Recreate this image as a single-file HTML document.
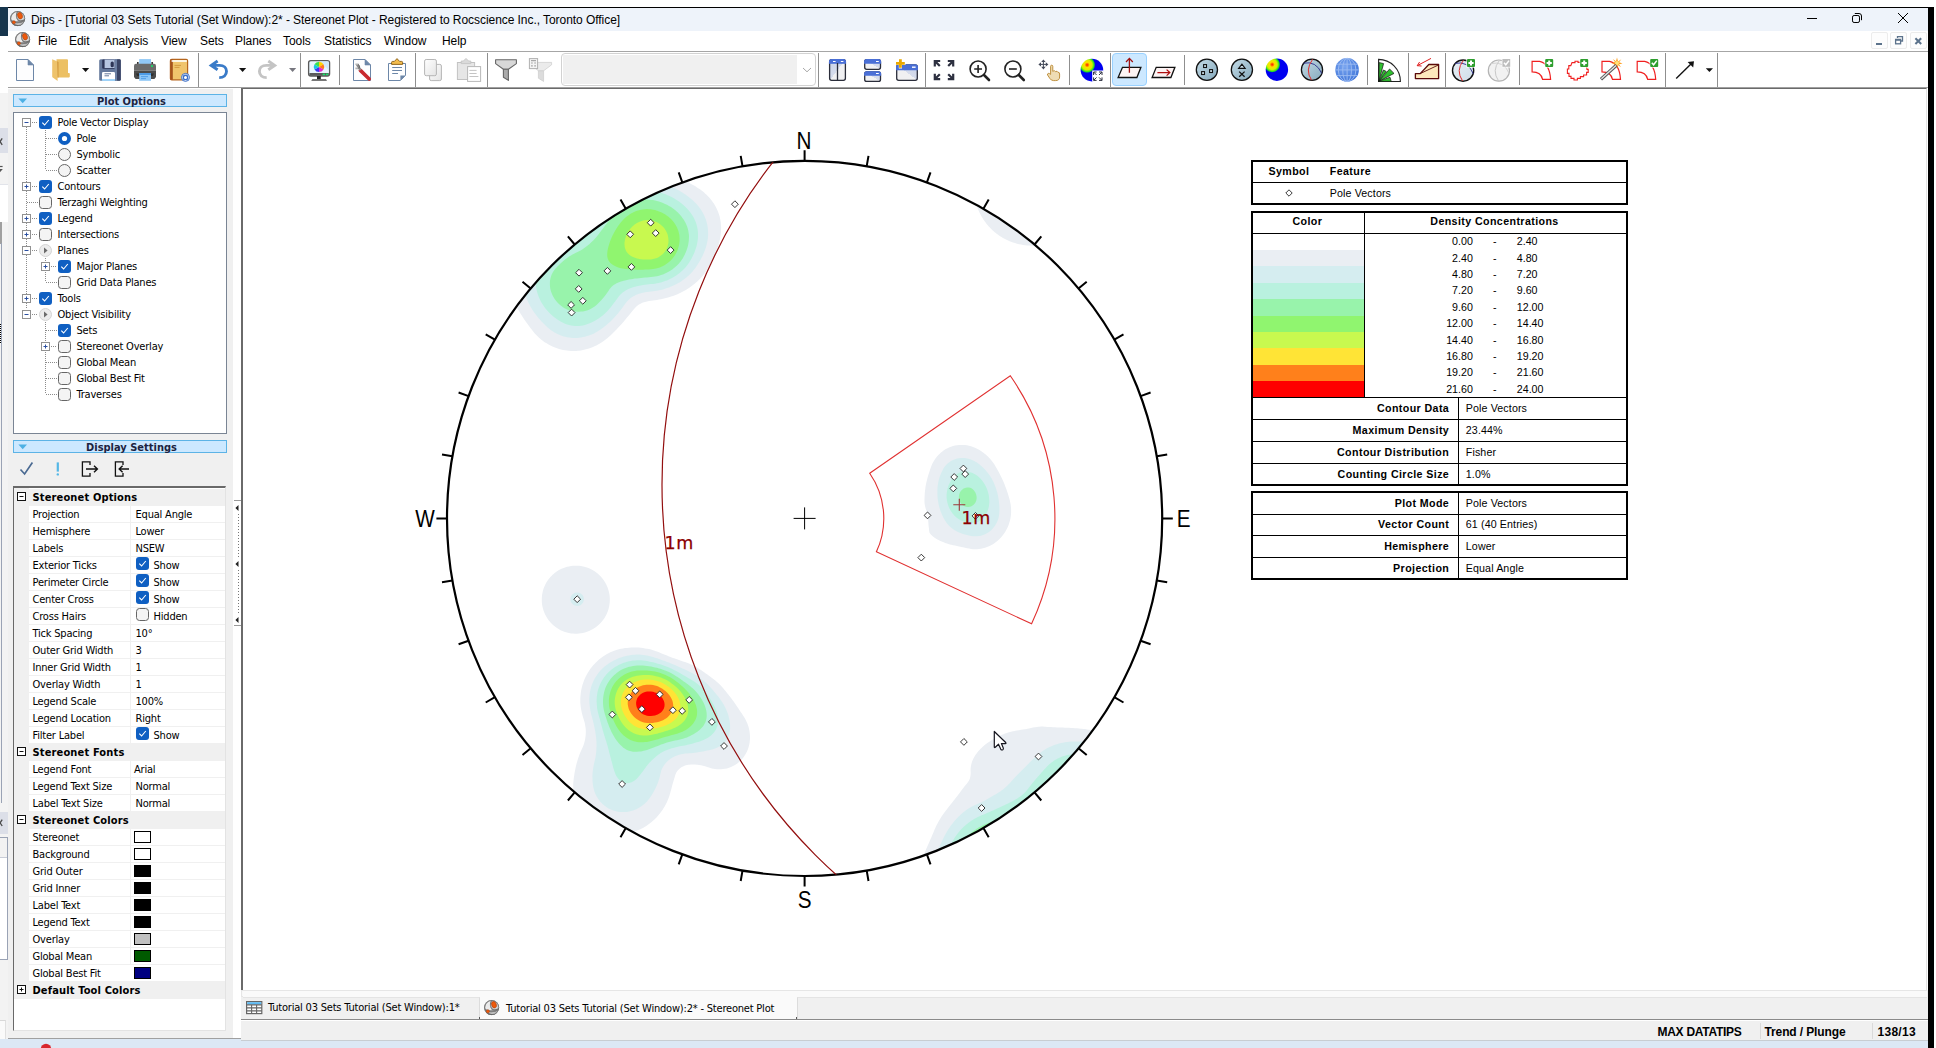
<!DOCTYPE html>
<html lang="en"><head><meta charset="utf-8"><title>Dips - Stereonet Plot</title>
<style>
html,body{margin:0;padding:0;}
body{width:1936px;height:1048px;overflow:hidden;background:#fff;position:relative;font-family:"Liberation Sans",sans-serif;font-size:12px;color:#000;}
div,span,svg{position:absolute;box-sizing:border-box;}
.t{white-space:nowrap;line-height:14px;height:14px;transform-origin:0 50%;}
.b{font-weight:bold;}
svg.net{left:243px;top:89px;}
.nsew{font-family:"Liberation Sans",sans-serif;font-size:23px;fill:#000;}
.m1{font-family:"DejaVu Sans",sans-serif;font-size:17.5px;fill:#8b0000;letter-spacing:0.8px;stroke:#8b0000;stroke-width:0.25px;}
.sep{width:1px;background:#a0a0a0;}
.ic{overflow:visible;}
.tr{font-family:"DejaVu Sans Condensed","DejaVu Sans",sans-serif;font-stretch:condensed;font-size:11px;letter-spacing:-0.2px;}
.gh{font-family:"DejaVu Sans Condensed","DejaVu Sans",sans-serif;font-stretch:condensed;font-size:11px;font-weight:bold;letter-spacing:0.15px;}
.hd{font-family:"DejaVu Sans Condensed","DejaVu Sans",sans-serif;font-stretch:condensed;font-size:11px;font-weight:bold;color:#1c2340;}
.lb{font-size:10.67px;font-weight:bold;letter-spacing:0.4px;}
.lr{font-size:10.67px;letter-spacing:0.12px;}
.lv{font-size:10.67px;}
.tb{letter-spacing:-0.2px;}
.mn{letter-spacing:-0.05px;}#title{letter-spacing:-0.055px;}

</style></head>
<body>
<div style="left:0;top:7px;width:8px;height:29px;background:#16354d"></div>
<div style="left:8px;top:7px;width:1926px;height:1px;background:#000"></div>
<div style="left:1928px;top:7px;width:6px;height:1041px;background:#000"></div>
<div style="left:8px;top:8px;width:1920px;height:23px;background:#eef3fa"></div>
<div style="left:8px;top:51px;width:1920px;height:1px;background:#a6a6a6"></div>
<div style="left:8px;top:87px;width:1920px;height:1px;background:#a0a0a0"></div>
<div style="left:0;top:1039px;width:1928px;height:9px;background:#dce8f5"></div>
<!-- left strip remnants -->
<div style="left:0;top:93px;width:8px;height:946px;background:#f3f3f3"></div>
<div style="left:0;top:128px;width:8px;height:25px;background:#dcdfe8"></div>
<div style="left:0;top:184px;width:8px;height:38px;background:#fff;border-top:1px solid #e2e4ea"></div>
<svg class="ic" style="left:0;top:130px" width="8" height="50" viewBox="0 130 8 50"><path d="M-2,138.4L2.2,144.8M2.2,138.4L-2,144.8" stroke="#4a4a4a" stroke-width="1.3" fill="none"/><path d="M-3,166.5H2.6" stroke="#555" stroke-width="1.2"/><path d="M-3,169H2.8L-0.2,172.6Z" fill="#555"/></svg>
<div style="left:0;top:222px;width:2px;height:22px;background:#a0a0a0"></div>
<div style="left:1px;top:243px;width:1px;height:560px;background:#9aa3b5"></div>
<div style="left:0;top:324px;width:1px;height:20px;background:repeating-linear-gradient(#000 0,#000 1px,#fff 1px,#fff 2px)"></div>
<div style="left:0;top:812px;width:8px;height:22px;background:#dcdfe8"></div>
<svg class="ic" style="left:0;top:812px" width="8" height="22" viewBox="0 812 8 22"><path d="M-2,819.6L2.2,826M2.2,819.6L-2,826" stroke="#4a4a4a" stroke-width="1.3" fill="none"/></svg>
<div style="left:0;top:837px;width:8px;height:123px;background:#fff;border-top:1px solid #9aa3b5;border-bottom:1px solid #9aa3b5;border-right:1px solid #9aa3b5"></div>
<div style="left:0;top:838px;width:7px;height:20px;background:#f2f2f2;border-bottom:1px solid #c8ccd6"></div>
<div style="left:0;top:1020px;width:6px;height:19px;background:#fafafa;border-top:1px solid #d8d8d8;border-right:1px solid #e0e0e0"></div>
<!-- left panel bg -->
<div style="left:8px;top:89px;width:225px;height:949px;background:#f0f0f0"></div>
<div style="left:8px;top:1038px;width:234px;height:1px;background:#a0a0a0"></div>
<!-- mdi -->
<div style="left:241px;top:88px;width:1686px;height:902px;border-left:2px solid #6a6a6a;border-top:1px solid #6a6a6a;border-right:1px solid #e3e3e3;background:#fff"></div>
<div style="left:241px;top:990px;width:1687px;height:30px;background:#f0f0f0"></div>
<div style="left:241px;top:990px;width:1686px;height:7px;background:#f8f8f8;border:1px solid #e6e6e6"></div>
<div style="left:241px;top:1019px;width:1687px;height:1px;background:#8a8a8a"></div>
<div style="left:241px;top:1020px;width:1687px;height:21px;background:#f0f0f0;border-top:1px solid #fff;border-bottom:1px solid #c8cdd2"></div>
<!-- app icons -->
<svg class="ic" style="left:10px;top:10.8px" width="16" height="16" viewBox="0 0 16 16"><defs><radialGradient id="gsph" cx="42%" cy="38%" r="62%"><stop offset="0" stop-color="#bdbdbd"/><stop offset="0.5" stop-color="#9a9a9a"/><stop offset="0.85" stop-color="#707070"/><stop offset="1" stop-color="#505050"/></radialGradient></defs><circle cx="7.6" cy="7.6" r="7.5" fill="url(#gsph)"/><path d="M6.9,0.8C3.5,1.4 1.1,4.5 1.3,8.6C3.4,10.1 6,10.3 7.7,9.7C5.6,7.1 5.5,3.5 6.9,0.8Z" fill="#ebebeb"/><path d="M8.3,0.9C6.7,4 7.5,7.6 9.5,9.3C11.6,9.6 13.7,9 14.9,7.8C14.7,4 12.1,1.1 8.3,0.9Z" fill="#cfcfcf"/><path d="M1.9,10.7C5,13 11,12.8 14.4,10.1C13.8,12 12.2,13.5 10.2,14.3C6.2,13.9 3.5,12.8 1.9,10.7Z" fill="#cdcdcd" opacity="0.85"/><circle cx="7.6" cy="7.6" r="7.1" fill="none" stroke="#6c6c6c" stroke-width="0.9" opacity="0.75"/><path d="M7.7,0.5C5.7,3.4 6,7.6 8.8,9.7C11,10.3 13.4,9.7 15,8.3" stroke="#6e6e6e" stroke-width="0.9" fill="none"/><path d="M1.1,9.9C4.6,12.3 11,12.1 14.8,9.3" stroke="#7a7a7a" stroke-width="0.8" fill="none"/><ellipse cx="10" cy="4.7" rx="2.3" ry="3.3" transform="rotate(-18 10 4.7)" fill="#ee5a0c" stroke="#b23c08" stroke-width="0.6"/><circle cx="3.9" cy="11.3" r="1.5" fill="#ee5a0c" stroke="#b23c08" stroke-width="0.5"/></svg>
<svg class="ic" style="left:15px;top:31.8px" width="16" height="16" viewBox="0 0 16 16"><circle cx="7.6" cy="7.6" r="7.5" fill="url(#gsph)"/><path d="M6.9,0.8C3.5,1.4 1.1,4.5 1.3,8.6C3.4,10.1 6,10.3 7.7,9.7C5.6,7.1 5.5,3.5 6.9,0.8Z" fill="#ebebeb"/><path d="M8.3,0.9C6.7,4 7.5,7.6 9.5,9.3C11.6,9.6 13.7,9 14.9,7.8C14.7,4 12.1,1.1 8.3,0.9Z" fill="#cfcfcf"/><path d="M1.9,10.7C5,13 11,12.8 14.4,10.1C13.8,12 12.2,13.5 10.2,14.3C6.2,13.9 3.5,12.8 1.9,10.7Z" fill="#cdcdcd" opacity="0.85"/><circle cx="7.6" cy="7.6" r="7.1" fill="none" stroke="#6c6c6c" stroke-width="0.9" opacity="0.75"/><path d="M7.7,0.5C5.7,3.4 6,7.6 8.8,9.7C11,10.3 13.4,9.7 15,8.3" stroke="#6e6e6e" stroke-width="0.9" fill="none"/><path d="M1.1,9.9C4.6,12.3 11,12.1 14.8,9.3" stroke="#7a7a7a" stroke-width="0.8" fill="none"/><ellipse cx="10" cy="4.7" rx="2.3" ry="3.3" transform="rotate(-18 10 4.7)" fill="#ee5a0c" stroke="#b23c08" stroke-width="0.6"/><circle cx="3.9" cy="11.3" r="1.5" fill="#ee5a0c" stroke="#b23c08" stroke-width="0.5"/></svg>
<span class="t" id="title" style="left:31px;top:13px">Dips - [Tutorial 03 Sets Tutorial (Set Window):2* - Stereonet Plot - Registered to Rocscience Inc., Toronto Office]</span>
<span class="t mn" style="left:38px;top:34px">File</span>
<span class="t mn" style="left:69px;top:34px">Edit</span>
<span class="t mn" style="left:104px;top:34px">Analysis</span>
<span class="t mn" style="left:161px;top:34px">View</span>
<span class="t mn" style="left:200px;top:34px">Sets</span>
<span class="t mn" style="left:235px;top:34px">Planes</span>
<span class="t mn" style="left:283px;top:34px">Tools</span>
<span class="t mn" style="left:324px;top:34px">Statistics</span>
<span class="t mn" style="left:384px;top:34px">Window</span>
<span class="t mn" style="left:442px;top:34px">Help</span>
<!-- window controls -->
<svg class="ic" style="left:1800px;top:8px" width="128" height="23" viewBox="1800 8 128 23"><path d="M1807,18.5H1817" stroke="#000" stroke-width="1"/><rect x="1852.5" y="15.5" width="7" height="7" rx="1.6" fill="none" stroke="#000" stroke-width="1"/><path d="M1854.8,13.5H1859Q1861.5,13.5 1861.5,16V20.2" fill="none" stroke="#000" stroke-width="1"/><path d="M1898,13L1908,23M1908,13L1898,23" stroke="#000" stroke-width="1"/></svg>
<div style="left:1871px;top:32px;width:17px;height:17px;border:1px solid #ececec;border-radius:2px;background:#fdfdfd"></div>
<div style="left:1890px;top:32px;width:17px;height:17px;border:1px solid #ececec;border-radius:2px;background:#fdfdfd"></div>
<div style="left:1910px;top:32px;width:17px;height:17px;border:1px solid #ececec;border-radius:2px;background:#fdfdfd"></div>
<svg class="ic" style="left:1871px;top:32px" width="56" height="17" viewBox="1871 32 56 17"><path d="M1876,44H1882" stroke="#5c738c" stroke-width="2"/><path d="M1897.5,38V36.6H1902.5V41H1901" fill="none" stroke="#5c738c" stroke-width="1.3"/><rect x="1895.6" y="39.4" width="5" height="4.4" fill="none" stroke="#5c738c" stroke-width="1.3"/><path d="M1895.6,40H1900.6" stroke="#5c738c" stroke-width="1.6"/><path d="M1915.4,38.2L1921.2,44M1921.2,38.2L1915.4,44" stroke="#5c738c" stroke-width="2"/></svg>
<!-- toolbar -->
<div style="left:561px;top:53px;width:255px;height:33px;border:1px solid #d2d2d2;border-radius:4px;background:#fff"></div>
<div style="left:563px;top:55px;width:234px;height:29px;background:#f0f0f0"></div>
<div style="left:1112px;top:53px;width:35px;height:33px;border:1px solid #99d1ff;border-radius:4px;background:#cce8ff"></div>
<svg class="ic" style="left:0;top:52px" width="1936" height="36" viewBox="0 52 1936 36">
<defs>
<linearGradient id="gpage" x1="0" y1="0" x2="1" y2="1"><stop offset="0" stop-color="#fff"/><stop offset="1" stop-color="#e4e4e4"/></linearGradient>
<radialGradient id="gcont" cx="29%" cy="27%" r="62%"><stop offset="0" stop-color="#ff2000"/><stop offset="0.07" stop-color="#ff5a00"/><stop offset="0.18" stop-color="#ffe000"/><stop offset="0.36" stop-color="#d8f000"/><stop offset="0.5" stop-color="#20e020"/><stop offset="0.58" stop-color="#0000f0"/><stop offset="1" stop-color="#0000f0"/></radialGradient>
<linearGradient id="gball" x1="0" y1="0" x2="1" y2="1"><stop offset="0" stop-color="#c4dbe6"/><stop offset="1" stop-color="#86aabd"/></linearGradient>
<linearGradient id="gball2" x1="0" y1="0" x2="1" y2="1"><stop offset="0" stop-color="#e8f0f6"/><stop offset="1" stop-color="#cfdde8"/></linearGradient>
<linearGradient id="gwin" x1="0" y1="0" x2="1" y2="1"><stop offset="0" stop-color="#c9d2e8"/><stop offset="0.5" stop-color="#d6dcec"/><stop offset="0.5" stop-color="#f0f0f2"/><stop offset="1" stop-color="#f0f0f2"/></linearGradient>
<linearGradient id="gwin2" x1="1" y1="0" x2="0" y2="1"><stop offset="0" stop-color="#c9d2e8"/><stop offset="0.5" stop-color="#d6dcec"/><stop offset="0.5" stop-color="#f0f0f2"/><stop offset="1" stop-color="#f0f0f2"/></linearGradient>
<radialGradient id="gglobe" cx="40%" cy="35%" r="70%"><stop offset="0" stop-color="#7aa6f0"/><stop offset="1" stop-color="#3f74d8"/></radialGradient>
<g id="setshape"><path d="M0,0H7.5Q17.5,2 18.5,18H10.5Q9,10.5 0,10.5Z" fill="none" stroke="#f02020" stroke-width="1.2"/></g>
<g id="plusbox"><rect x="0" y="0" width="8" height="8" rx="1" fill="#2e9e2e"/><path d="M4,1.4V6.6M1.4,4H6.6" stroke="#fff" stroke-width="2"/></g>
<g id="dd"><path d="M0,0H7.2L3.6,3.9Z"/></g>
</defs>
<!-- separators -->
<path d="M198.5,53V87M300.5,53V87M415.5,53V87M487.5,53V87M818.5,53V87M925.5,53V87M1110.5,53V87M1408.5,53V87M1445.5,53V87M1665.5,53V87M1717.5,53V87M339.5,55V85M1069.5,55V85M1184.5,55V85M1367.5,55V85M1519.5,55V85" stroke="#8f8f8f" stroke-width="1" fill="none"/>
<!-- new -->
<path d="M16.5,59.5H28L33.5,65V80.5H16.5Z" fill="#fdfdfe" stroke="#6d87a8" stroke-width="1"/><path d="M28,59.5V65H33.5Z" fill="#6d87a8" stroke="#6d87a8" stroke-width="0.6"/>
<!-- open -->
<path d="M56.5,59.2H67Q68,59.2 68,60.2V73H69Q69.8,73 69.8,73.8V76.6Q69.8,77.4 69,77.4H56.5Z" fill="#ecc063"/>
<path d="M52.2,59.3L57.6,61.6V81L52.8,77.6Q52.2,77.2 52.2,76.4Z" fill="#eec36c"/><path d="M57,61.3L58.6,62V77.4H57.6Z" fill="#d69f45"/>
<use href="#dd" x="82" y="68.1" fill="#111"/>
<!-- save -->
<rect x="99.2" y="59.2" width="21.6" height="21.6" rx="1.6" fill="#65799c"/><rect x="116.6" y="59.2" width="4.2" height="21.6" rx="1.2" fill="#3a4566"/><rect x="114.8" y="59.2" width="2.2" height="21.6" fill="#6c80a3"/>
<rect x="102.2" y="59.6" width="12.6" height="9.2" rx="1" fill="#2c3556"/><rect x="104.6" y="59.6" width="10" height="8.4" fill="#b6c6e1"/><rect x="110.6" y="61.6" width="3.2" height="5.6" rx="1.5" fill="#2c3556"/>
<rect x="102" y="72" width="13" height="8.8" rx="1.2" fill="#fff"/><rect x="102" y="79.2" width="13" height="1.6" fill="#8dcdf9"/><path d="M104.5,73.8H111M104.5,75.8H109" stroke="#65799c" stroke-width="1"/>
<!-- print -->
<rect x="139.2" y="59.1" width="11.8" height="5" fill="#90c8f6"/><rect x="137" y="62" width="1.6" height="2" fill="#333"/><rect x="151.4" y="62" width="1.6" height="2" fill="#333"/>
<path d="M136,63.8H154Q156,63.8 156,65.8V70.6H134V65.8Q134,63.8 136,63.8Z" fill="#6b6b6b"/><path d="M134,70.6H156V77L154.4,79H135.6L134,77Z" fill="#4b4b4b"/><path d="M136,73.4H154L152.6,76H137.4Z" fill="#2e2e2e"/>
<rect x="139.2" y="73" width="11.8" height="7.8" fill="#8ec7f7"/><rect x="139.2" y="73" width="11.8" height="2" fill="#4d9be6"/><path d="M141,76.6H148M141,78.6H146" stroke="#4d9be6" stroke-width="0.9"/><circle cx="152" cy="66.1" r="1.1" fill="#19e06a"/>
<!-- book -->
<rect x="170.4" y="59.4" width="17.2" height="20.4" rx="1.4" fill="#f0c46c" stroke="#b5651d" stroke-width="1.2"/><rect x="170.4" y="59.4" width="2.4" height="20.4" fill="#a5521c"/><rect x="171.6" y="60.2" width="15.2" height="1.6" fill="#fff"/><path d="M174.5,65.4H181M174.5,67.4H179.5" stroke="#d39a40" stroke-width="1"/>
<circle cx="185.5" cy="77.4" r="4" fill="#fff" stroke="#3b6fc9" stroke-width="1"/><circle cx="185.5" cy="77.4" r="2.2" fill="none" stroke="#3b6fc9" stroke-width="1.4"/>
<!-- undo -->
<path d="M217.6,61L211.2,65.4L217.6,69.8M212.4,65.4H219.5C224,65.4 226.5,68 226.5,71.2C226.5,75 223.6,77.6 219.2,77.6" fill="none" stroke="#3a7bc8" stroke-width="2.9" stroke-linejoin="miter"/>
<use href="#dd" x="239" y="68.1" fill="#111"/>
<!-- redo -->
<path d="M268.3,61L274.7,65.4L268.3,69.8M273.5,65.4H266.4C261.9,65.4 259.4,68 259.4,71.2C259.4,75 262.3,77.6 266.7,77.6" fill="none" stroke="#c4c4c4" stroke-width="2.9" stroke-linejoin="miter"/>
<use href="#dd" x="289" y="68.1" fill="#77777f"/>
<!-- monitor -->
<rect x="308.6" y="60.6" width="21" height="15.4" rx="2.2" fill="#e8f4fd" stroke="#5a5a5a" stroke-width="1.3"/><path d="M309.4,73H328.8V74.6Q328.8,75.8 327.6,75.8H310.6Q309.4,75.8 309.4,74.6Z" fill="#5a5a5a"/><path d="M320,61.4H328.6V70Z" fill="#cfe9fb"/>
<g transform="translate(319,66.9)"><path d="M0,0L0,-5.2A5.2,5.2 0 0 1 4.5,-2.6Z" fill="#ffd400"/><path d="M0,0L4.5,-2.6A5.2,5.2 0 0 1 4.5,2.6Z" fill="#ff7a1a"/><path d="M0,0L4.5,2.6A5.2,5.2 0 0 1 0,5.2Z" fill="#e02ad0"/><path d="M0,0L0,5.2A5.2,5.2 0 0 1 -4.5,2.6Z" fill="#3a3af0"/><path d="M0,0L-4.5,2.6A5.2,5.2 0 0 1 -4.5,-2.6Z" fill="#19c8e0"/><path d="M0,0L-4.5,-2.6A5.2,5.2 0 0 1 0,-5.2Z" fill="#3ae04a"/></g>
<rect x="322.6" y="73.6" width="2.4" height="1.6" fill="#19e06a"/><rect x="325.8" y="73.6" width="2.4" height="1.6" fill="#19e06a"/><rect x="317" y="76" width="3.8" height="3.2" fill="#222"/><path d="M312.4,79.2H326L327,80.8H311.2Z" fill="#4a4a4a"/>
<!-- wrench doc -->
<path d="M353.5,59.5H365L370.5,65V80.5H353.5Z" fill="#fdfdfe" stroke="#6d87a8" stroke-width="1"/><path d="M365,59.5V65H370.5Z" fill="#6d87a8" stroke="#6d87a8" stroke-width="0.6"/>
<path d="M360.4,70.4L369.2,79" stroke="#c9282d" stroke-width="3.6" stroke-linecap="round"/><path d="M357,64.6L360.6,70.2" stroke="#8e8e8e" stroke-width="2.4"/><path d="M355.4,64.2H358.6M355.4,68.4H358.6" stroke="#b5b5b5" stroke-width="1.6"/><path d="M358.4,64.4Q360.4,66 358.8,68.6" stroke="#555" stroke-width="1" fill="none"/>
<!-- clipboard -->
<path d="M388.5,63.5H405.5V75.4L400.4,80.5H388.5Z" fill="#fff" stroke="#6d87a8" stroke-width="1"/><path d="M400.4,80.5V75.4H405.5Z" fill="#6d87a8"/>
<path d="M391.6,64.4V62.4Q391.6,61.4 392.6,61.4H394.4L397,58.6L399.6,61.4H401.6Q402.6,61.4 402.6,62.4V64.4Z" fill="#f3bd4f" stroke="#7a4b00" stroke-width="0.8"/>
<path d="M392.2,67.5H402M392.2,70.5H402M392.2,73.5H398" stroke="#6d87a8" stroke-width="1"/>
<!-- copy gray -->
<rect x="429.6" y="64.4" width="11.8" height="16.2" rx="1.6" fill="url(#gpage)" stroke="#b6b6b6" stroke-width="1"/><rect x="424.6" y="59.5" width="11.8" height="16.2" rx="1.6" fill="url(#gpage)" stroke="#b6b6b6" stroke-width="1"/>
<!-- paste gray -->
<rect x="457.4" y="62.5" width="17.2" height="17" fill="#e6e6e6" stroke="#c2c2c2" stroke-width="1"/><path d="M461.2,63.6V61H463.4L466,58.4L468.6,61H470.8V63.6Z" fill="#dadada" stroke="#c2c2c2" stroke-width="0.8"/>
<rect x="467.6" y="66.6" width="13" height="14.8" fill="#fff" stroke="#b8b8b8" stroke-width="1"/><path d="M469.4,70.4H476.6M469.4,73.5H476.6M469.4,76.5H478.4" stroke="#c4c4c4" stroke-width="1"/>
<!-- filter -->
<path d="M495.6,59.8H516.4V63.6L508.4,69.2H503.4L495.6,63.6Z" fill="#d8d8d8" stroke="#666" stroke-width="1.1" stroke-linejoin="round"/><path d="M503.4,69.2H508.4V80.4L503.4,77.2Z" fill="#ababab" stroke="#666" stroke-width="1.1" stroke-linejoin="round"/>
<!-- filter2 gray -->
<path d="M534.4,62.4H551.6V64.8L543.6,70.8H538.4L534.4,67.6Z" fill="#ebebeb" stroke="#cfcfcf" stroke-width="0.8"/><path d="M538.4,70.8H543.6V81.4L538.4,78.2Z" fill="#dcdcdc" stroke="#cfcfcf" stroke-width="0.8"/>
<rect x="529.4" y="58.6" width="8.2" height="10" fill="#f4f4f4" stroke="#b0b0b0" stroke-width="1"/><path d="M531,60.6H536M531,63H532.8M534.2,63H536M531,65.8H532.8M534.2,65.8H536" stroke="#a8a8a8" stroke-width="1.2"/>
<!-- combo chevron -->
<path d="M803,68L807,71.8L811,68" fill="none" stroke="#a8a8a8" stroke-width="1"/>
<!-- tile vertical -->
<rect x="829.6" y="59.7" width="15.8" height="20.6" rx="2" fill="url(#gwin)" stroke="#2a2d3a" stroke-width="1.3"/><path d="M829.6,63.2V61.7Q829.6,59.7 831.6,59.7H843.4Q845.4,59.7 845.4,61.7V63.2Z" fill="#4a6fd6" stroke="#4a6fd6" stroke-width="1.3"/><path d="M837.5,63V80.3" stroke="#2a2d3a" stroke-width="1.3"/><path d="M833,61.5H835.6M840.8,61.5H843.4" stroke="#fff" stroke-width="1"/>
<!-- tile horizontal -->
<rect x="864.7" y="59.7" width="15.8" height="9.6" rx="2" fill="url(#gwin2)" stroke="#2a2d3a" stroke-width="1.3"/><path d="M864.7,63V61.7Q864.7,59.7 866.7,59.7H878.5Q880.5,59.7 880.5,61.7V63Z" fill="#4a6fd6" stroke="#4a6fd6" stroke-width="1.3"/><path d="M876,61.5H878.8" stroke="#fff" stroke-width="1"/>
<rect x="864.7" y="71.8" width="15.8" height="9.6" rx="2" fill="url(#gwin2)" stroke="#2a2d3a" stroke-width="1.3"/><path d="M864.7,75V73.8Q864.7,71.8 866.7,71.8H878.5Q880.5,71.8 880.5,73.8V75Z" fill="#4a6fd6" stroke="#4a6fd6" stroke-width="1.3"/><path d="M876,73.5H878.8" stroke="#fff" stroke-width="1"/>
<!-- new window -->
<rect x="896.7" y="64.9" width="20.6" height="15.4" rx="2" fill="url(#gwin2)" stroke="#2a2d3a" stroke-width="1.3"/><path d="M896.7,69.6V66.9Q896.7,64.9 898.7,64.9H915.3Q917.3,64.9 917.3,66.9V69.6Z" fill="#4a6fd6" stroke="#4a6fd6" stroke-width="1.3"/><path d="M912,67.2H915.6" stroke="#fff" stroke-width="1.4"/>
<path d="M895.4,61.8H898.8V58.6H902V61.8H905.4V65H902V68.4H898.8V65H895.4Z" fill="#fff"/><path d="M900.4,59.2V67.8M896,63.4H904.8" stroke="#e9a800" stroke-width="2.8"/>
<!-- zoom extents -->
<g stroke="#2d3040" stroke-width="2.2" fill="none"><path d="M934.8,66.4V61H940.2M935.2,61.4L939.8,66"/><path d="M953.2,66.4V61H947.8M952.8,61.4L948.2,66"/><path d="M934.8,73.8V79.2H940.2M935.2,78.8L939.8,74.2"/><path d="M953.2,73.8V79.2H947.8M952.8,78.8L948.2,74.2"/></g>
<!-- zoom in/out -->
<circle cx="978.1" cy="69" r="8" fill="none" stroke="#222" stroke-width="1.6"/><path d="M984,75L989,80" stroke="#222" stroke-width="2.6" stroke-linecap="round"/><path d="M974.2,69H982M978.1,65.1V72.9" stroke="#222" stroke-width="1.6"/>
<circle cx="1012.9" cy="69" r="8" fill="none" stroke="#222" stroke-width="1.6"/><path d="M1018.8,75L1023.8,80" stroke="#222" stroke-width="2.6" stroke-linecap="round"/><path d="M1009,69H1016.8" stroke="#222" stroke-width="1.6"/>
<!-- pan -->
<path d="M1043.4,59.4L1045.6,62H1041.2ZM1043.4,69.4L1045.6,66.8H1041.2ZM1038.4,64.4L1041,62.2V66.6ZM1048.4,64.4L1045.8,62.2V66.6Z" fill="#444a5a"/><path d="M1043.4,61V67.8M1040,64.4H1046.8" stroke="#444a5a" stroke-width="1"/>
<path d="M1050.6,74.4V66.4Q1050.6,65.2 1051.7,65.2Q1052.8,65.2 1052.8,66.4V71.4L1053.4,71Q1054.6,70.2 1055.4,71.6L1056,71.4Q1057.2,70.8 1057.8,72.2Q1059.6,72 1059.6,74V77Q1059.6,80.6 1055.4,80.6H1053.6Q1051.2,80.6 1049.8,78.4L1047.6,75Q1047,73.8 1048.2,73.4Q1049.2,73.2 1050.6,74.4Z" fill="#eedcb4" stroke="#b8862e" stroke-width="0.9"/>
<!-- contour sphere w/ zoom -->
<circle cx="1091.9" cy="70.1" r="11.3" fill="url(#gcont)"/><rect x="1092.2" y="70.5" width="11.2" height="11.2" fill="#fff"/>
<g stroke="#2d3040" stroke-width="1" fill="none"><path d="M1093.6,75V72H1096.6M1093.8,72.2L1096.6,75"/><path d="M1102,75V72H1099M1101.8,72.2L1099,75"/><path d="M1093.6,77.4V80.4H1096.6M1093.8,80.2L1096.6,77.4"/><path d="M1102,77.4V80.4H1099M1101.8,80.2L1099,77.4"/></g>
<!-- pole mode -->
<path d="M1118.1,77.5H1136.9L1140.9,67.3H1122.5Z" fill="#fdf4f4" stroke="#111" stroke-width="1.3" stroke-linejoin="miter"/><path d="M1129.4,72.8V58.6M1126,62L1129.4,58.4L1132.8,62" stroke="#a01010" stroke-width="1.3" fill="none"/>
<!-- dip vector -->
<path d="M1152.1,77.5H1170.9L1174.9,67.3H1156.2Z" fill="#fdf4f4" stroke="#111" stroke-width="1.3"/><path d="M1157.4,72.6H1169.6M1166.6,69.6L1169.8,72.6L1166.6,75.6" stroke="#b01010" stroke-width="1.3" fill="none"/>
<!-- symbols -->
<circle cx="1206.9" cy="69.7" r="10.6" fill="url(#gball)" stroke="#111" stroke-width="1.3"/><g fill="#cfe4ee" stroke="#111" stroke-width="1.1"><rect x="1203.6" y="64.6" width="2.9" height="2.9"/><rect x="1209.6" y="69.6" width="2.9" height="2.9"/><rect x="1201.6" y="71.6" width="2.9" height="2.9"/></g>
<circle cx="1241.9" cy="69.7" r="10.6" fill="url(#gball)" stroke="#111" stroke-width="1.3"/><path d="M1241.9,64.2L1245.2,68.4H1238.6Z" fill="#cfe4ee" stroke="#111" stroke-width="1.1"/><path d="M1239.2,71.6L1244.6,76.8M1244.6,71.6L1239.2,76.8" stroke="#111" stroke-width="1.3"/>
<circle cx="1276.9" cy="69.7" r="11.2" fill="url(#gcont)"/>
<circle cx="1312" cy="69.7" r="10.6" fill="url(#gball)" stroke="#111" stroke-width="1.3"/><path d="M1303.5,63.2Q1316,60.5 1321.8,73.5" fill="none" stroke="#2a2a8a" stroke-width="0.9"/><path d="M1312.6,59.4Q1304.6,70 1311.6,80.2" fill="none" stroke="#e03030" stroke-width="1"/>
<circle cx="1347.1" cy="69.9" r="11.8" fill="url(#gglobe)"/><g fill="none" stroke="#9dbcf2" stroke-width="0.9"><ellipse cx="1347.1" cy="69.9" rx="4.4" ry="11.6"/><ellipse cx="1347.1" cy="69.9" rx="8.8" ry="11.6"/><path d="M1347.1,58.2V81.6M1335.4,69.9H1358.8M1336.8,64.2H1357.4M1336.8,75.6H1357.4"/></g>
<!-- rosette -->
<path d="M1378.6,59.4A22,22 0 0 1 1400.4,81.5H1378.6Z" fill="#fff" stroke="#222" stroke-width="1.1"/>
<g fill="#2fc02f" stroke="#111" stroke-width="0.7"><path d="M1378.8,81.4L1379.2,62.6L1383.6,63.6Z"/><path d="M1378.8,81.4L1389.6,69L1394,73.4Z"/><path d="M1378.8,81.4L1390,77.2L1391.2,81.4Z"/><path d="M1378.8,81.4L1383.4,70L1386.2,71.4Z"/></g>
<!-- slope -->
<path d="M1415.4,78.6V73.6H1420.2L1428.8,64.5H1438.6V78.6Z" fill="#fde9bd" stroke="#5a0a0a" stroke-width="1.3" stroke-linejoin="round"/><path d="M1420.2,73.6L1438.4,65" stroke="#5a0a0a" stroke-width="0.9"/><path d="M1431,58.4L1417.4,65.6M1419.6,62L1417.2,65.7L1421.6,66" stroke="#e02020" stroke-width="1" fill="none"/>
<!-- add plane sphere -->
<circle cx="1463.1" cy="70.6" r="10.6" fill="url(#gball2)" stroke="#111" stroke-width="1.4"/><path d="M1455,63.4Q1468,60.4 1473.4,74" fill="none" stroke="#2a2a8a" stroke-width="0.9"/><path d="M1463.4,60.4Q1455.4,70.6 1462.6,81" fill="none" stroke="#e03030" stroke-width="1"/>
<rect x="1466.4" y="58.4" width="9.2" height="9.2" fill="#fff"/><use href="#plusbox" x="1467" y="59"/>
<circle cx="1498.9" cy="70.6" r="10.6" fill="#f2f2f2" stroke="#b4b4b4" stroke-width="1.2"/><path d="M1499.4,60.4Q1491.4,70.6 1498.6,81" fill="none" stroke="#c8c8c8" stroke-width="1"/><path d="M1491,63.6Q1504,60.4 1509.4,74" fill="none" stroke="#d0d0d0" stroke-width="0.9"/>
<rect x="1501.8" y="58.4" width="9" height="9" fill="#fff"/><rect x="1502.4" y="59" width="7.8" height="7.8" fill="#bdbdbd"/><path d="M1504,62.8L1505.8,64.8L1509,60.6" stroke="#fff" stroke-width="1.5" fill="none"/>
<!-- set windows -->
<use href="#setshape" x="1532.1" y="61.4"/><rect x="1544.6" y="58.4" width="9.2" height="9.2" fill="#fff"/><use href="#plusbox" x="1545.2" y="59"/>
<path d="M1572,62.6H1575V61.2H1578V62.4H1582Q1587,64.4 1587,69.4H1588.2V72.4H1586.6V75H1583.6V76.6H1580.4V78.4H1577.4V80H1574V78.4H1571V76.4H1569V73.4H1567.4V69H1568.8V65.6H1570.8Z" fill="none" stroke="#f02020" stroke-width="1.1"/><rect x="1579.6" y="58.4" width="9.2" height="9.2" fill="#fff"/><use href="#plusbox" x="1580.2" y="59"/>
<use href="#setshape" x="1602" y="61.4"/>
<g transform="translate(1617,63)"><path d="M0,-5.4L1,-1.6L4.4,-3.8L2,-0.8L5.6,0.4L2,1.2L4,4.2L0.8,2L0,5.4L-1,2L-4.2,4L-2,1L-5.6,0.2L-2,-1L-4.2,-4L-1,-1.8Z" fill="#ff9d1a"/><circle r="2" fill="#ffe27a"/></g>
<path d="M1601,79.2L1616.4,65.2" stroke="#555" stroke-width="3.2"/><path d="M1601.4,78.8L1616,65.6" stroke="#e6e6e6" stroke-width="1.4"/>
<use href="#setshape" x="1637.2" y="61.4"/><rect x="1649.6" y="58.4" width="9.2" height="9.2" fill="#fff"/><rect x="1650.2" y="59" width="8" height="8" rx="1" fill="#2e9e2e"/><path d="M1651.8,62.8L1653.6,64.8L1656.8,60.6" stroke="#fff" stroke-width="1.5" fill="none"/>
<!-- arrow -->
<path d="M1676.2,78.4L1692,63" stroke="#111" stroke-width="1.4"/><path d="M1694,61.2L1693.2,67.6L1687.6,62Z" fill="#111"/>
<use href="#dd" x="1705.8" y="68.2" fill="#111"/>
</svg>
<div style="left:13px;top:94px;width:214px;height:13px;background:#cce8ff;border:1px solid #5cb3e6"></div>
<svg class="ic" style="left:18px;top:98px" width="10" height="6" viewBox="0 0 10 6"><path d="M0.4,0.4H9L4.7,5.2Z" fill="#4db0e4"/></svg>
<span class="t hd" style="left:13px;top:94.5px;width:214px;text-align:center;padding-left:23px">Plot Options</span>
<div style="left:13px;top:440px;width:214px;height:13px;background:#cce8ff;border:1px solid #5cb3e6"></div>
<svg class="ic" style="left:18px;top:444px" width="10" height="6" viewBox="0 0 10 6"><path d="M0.4,0.4H9L4.7,5.2Z" fill="#4db0e4"/></svg>
<span class="t hd" style="left:13px;top:440.5px;width:214px;text-align:center;padding-left:23px">Display Settings</span>
<div style="left:13px;top:112px;width:214px;height:322px;background:#fff;border:1px solid #7a8594"></div>
<span class="t tr" style="left:57.5px;top:116px">Pole Vector Display</span>
<span class="t tr" style="left:76.5px;top:132px">Pole</span>
<span class="t tr" style="left:76.5px;top:148px">Symbolic</span>
<span class="t tr" style="left:76.5px;top:164px">Scatter</span>
<span class="t tr" style="left:57.5px;top:180px">Contours</span>
<span class="t tr" style="left:57.5px;top:196px">Terzaghi Weighting</span>
<span class="t tr" style="left:57.5px;top:212px">Legend</span>
<span class="t tr" style="left:57.5px;top:228px">Intersections</span>
<span class="t tr" style="left:57.5px;top:244px">Planes</span>
<span class="t tr" style="left:76.5px;top:260px">Major Planes</span>
<span class="t tr" style="left:76.5px;top:276px">Grid Data Planes</span>
<span class="t tr" style="left:57.5px;top:292px">Tools</span>
<span class="t tr" style="left:57.5px;top:308px">Object Visibility</span>
<span class="t tr" style="left:76.5px;top:324px">Sets</span>
<span class="t tr" style="left:76.5px;top:340px">Stereonet Overlay</span>
<span class="t tr" style="left:76.5px;top:356px">Global Mean</span>
<span class="t tr" style="left:76.5px;top:372px">Global Best Fit</span>
<span class="t tr" style="left:76.5px;top:388px">Traverses</span>
<svg class="ic" style="left:0;top:0" width="240" height="440" viewBox="0 0 240 440"><path d="M31.5,122.5H38M45.5,138.5H57M45.5,154.5H57M45.5,170.5H57M31.5,186.5H38M26.5,202.5H38M31.5,218.5H38M31.5,234.5H38M31.5,250.5H38M50.5,266.5H57M45.5,282.5H57M31.5,298.5H38M31.5,314.5H38M45.5,330.5H57M50.5,346.5H57M45.5,362.5H57M45.5,378.5H57M45.5,394.5H57M26.5,127V309M45.5,130V170M45.5,258V282M45.5,322V394" stroke="#8c8c8c" stroke-width="1" stroke-dasharray="1 1" fill="none" shape-rendering="crispEdges"/><rect x="22.5" y="118.5" width="8" height="8" fill="#fff" stroke="#919191" stroke-width="1"/><path d="M24.5,122.5H28.5" stroke="#2b4fa0" stroke-width="1"/><rect x="39" y="116" width="13" height="13" rx="3" fill="#0f5fc2"/><path d="M42.3,122.6L44.6,125L48.8,120" stroke="#fff" stroke-width="1.1" fill="none"/><circle cx="64.5" cy="138.5" r="6.5" fill="#0f5fc2"/><circle cx="64.5" cy="138.5" r="2.6" fill="#fff"/><circle cx="64.5" cy="154.5" r="6" fill="#f4f4f4" stroke="#666" stroke-width="1"/><circle cx="64.5" cy="170.5" r="6" fill="#f4f4f4" stroke="#666" stroke-width="1"/><rect x="22.5" y="182.5" width="8" height="8" fill="#fff" stroke="#919191" stroke-width="1"/><path d="M24.5,186.5H28.5" stroke="#2b4fa0" stroke-width="1"/><path d="M26.5,184.5V188.5" stroke="#2b4fa0" stroke-width="1"/><rect x="39" y="180" width="13" height="13" rx="3" fill="#0f5fc2"/><path d="M42.3,186.6L44.6,189L48.8,184" stroke="#fff" stroke-width="1.1" fill="none"/><rect x="39.5" y="196.5" width="12" height="12" rx="3" fill="#f4f4f4" stroke="#666" stroke-width="1"/><rect x="22.5" y="214.5" width="8" height="8" fill="#fff" stroke="#919191" stroke-width="1"/><path d="M24.5,218.5H28.5" stroke="#2b4fa0" stroke-width="1"/><path d="M26.5,216.5V220.5" stroke="#2b4fa0" stroke-width="1"/><rect x="39" y="212" width="13" height="13" rx="3" fill="#0f5fc2"/><path d="M42.3,218.6L44.6,221L48.8,216" stroke="#fff" stroke-width="1.1" fill="none"/><rect x="22.5" y="230.5" width="8" height="8" fill="#fff" stroke="#919191" stroke-width="1"/><path d="M24.5,234.5H28.5" stroke="#2b4fa0" stroke-width="1"/><path d="M26.5,232.5V236.5" stroke="#2b4fa0" stroke-width="1"/><rect x="39.5" y="228.5" width="12" height="12" rx="3" fill="#f4f4f4" stroke="#666" stroke-width="1"/><rect x="22.5" y="246.5" width="8" height="8" fill="#fff" stroke="#919191" stroke-width="1"/><path d="M24.5,250.5H28.5" stroke="#2b4fa0" stroke-width="1"/><circle cx="45.5" cy="250.5" r="6" fill="#ececec" stroke="#d4d4d4" stroke-width="1"/><path d="M44,247.5V253.5L47.6,250.5Z" fill="#6b6b6b"/><rect x="41.5" y="262.5" width="8" height="8" fill="#fff" stroke="#919191" stroke-width="1"/><path d="M43.5,266.5H47.5" stroke="#2b4fa0" stroke-width="1"/><path d="M45.5,264.5V268.5" stroke="#2b4fa0" stroke-width="1"/><rect x="58" y="260" width="13" height="13" rx="3" fill="#0f5fc2"/><path d="M61.3,266.6L63.6,269L67.8,264" stroke="#fff" stroke-width="1.1" fill="none"/><rect x="58.5" y="276.5" width="12" height="12" rx="3" fill="#f4f4f4" stroke="#666" stroke-width="1"/><rect x="22.5" y="294.5" width="8" height="8" fill="#fff" stroke="#919191" stroke-width="1"/><path d="M24.5,298.5H28.5" stroke="#2b4fa0" stroke-width="1"/><path d="M26.5,296.5V300.5" stroke="#2b4fa0" stroke-width="1"/><rect x="39" y="292" width="13" height="13" rx="3" fill="#0f5fc2"/><path d="M42.3,298.6L44.6,301L48.8,296" stroke="#fff" stroke-width="1.1" fill="none"/><rect x="22.5" y="310.5" width="8" height="8" fill="#fff" stroke="#919191" stroke-width="1"/><path d="M24.5,314.5H28.5" stroke="#2b4fa0" stroke-width="1"/><circle cx="45.5" cy="314.5" r="6" fill="#ececec" stroke="#d4d4d4" stroke-width="1"/><path d="M44,311.5V317.5L47.6,314.5Z" fill="#6b6b6b"/><rect x="58" y="324" width="13" height="13" rx="3" fill="#0f5fc2"/><path d="M61.3,330.6L63.6,333L67.8,328" stroke="#fff" stroke-width="1.1" fill="none"/><rect x="41.5" y="342.5" width="8" height="8" fill="#fff" stroke="#919191" stroke-width="1"/><path d="M43.5,346.5H47.5" stroke="#2b4fa0" stroke-width="1"/><path d="M45.5,344.5V348.5" stroke="#2b4fa0" stroke-width="1"/><rect x="58.5" y="340.5" width="12" height="12" rx="3" fill="#f4f4f4" stroke="#666" stroke-width="1"/><rect x="58.5" y="356.5" width="12" height="12" rx="3" fill="#f4f4f4" stroke="#666" stroke-width="1"/><rect x="58.5" y="372.5" width="12" height="12" rx="3" fill="#f4f4f4" stroke="#666" stroke-width="1"/><rect x="58.5" y="388.5" width="12" height="12" rx="3" fill="#f4f4f4" stroke="#666" stroke-width="1"/></svg>
<svg class="ic" style="left:13px;top:458px" width="130" height="22" viewBox="13 458 130 22"><path d="M20.5,469.5L24.6,474L32.4,462.6" fill="none" stroke="#4a6a92" stroke-width="1.7"/><path d="M57.8,462.4V471.6" stroke="#55b7e6" stroke-width="2.2"/><circle cx="57.8" cy="474.4" r="1.2" fill="#55b7e6"/><path d="M90,465V461.8H82.4V476.2H90V473" fill="none" stroke="#111" stroke-width="1.3"/><path d="M86,469H97M94,465.8L97.4,469L94,472.2" fill="none" stroke="#111" stroke-width="1.4"/><path d="M123,465V461.8H115.4V476.2H123V473" fill="none" stroke="#111" stroke-width="1.3"/><path d="M119.4,469H129M122.6,465.8L119.2,469L122.6,472.2" fill="none" stroke="#111" stroke-width="1.4"/></svg>
<div style="left:13px;top:486px;width:213px;height:545px;background:#fff;border-left:1px solid #696969;border-top:2px solid #696969;border-right:1px solid #e3e3e3;border-bottom:1px solid #e3e3e3"></div>
<div style="left:14px;top:488px;width:15px;height:511px;background:#f0f0f0"></div>
<div style="left:14px;top:489px;width:211px;height:17px;background:#f0f0f0"></div>
<span class="t gh" style="left:32.5px;top:491px">Stereonet Options</span>
<div style="left:29px;top:522px;width:196px;height:1px;background:#f0f0f0"></div>
<span class="t tr" style="left:32.5px;top:508px">Projection</span>
<span class="t tr" style="left:135.5px;top:508px">Equal Angle</span>
<div style="left:29px;top:539px;width:196px;height:1px;background:#f0f0f0"></div>
<span class="t tr" style="left:32.5px;top:525px">Hemisphere</span>
<span class="t tr" style="left:135.5px;top:525px">Lower</span>
<div style="left:29px;top:556px;width:196px;height:1px;background:#f0f0f0"></div>
<span class="t tr" style="left:32.5px;top:542px">Labels</span>
<span class="t tr" style="left:135.5px;top:542px">NSEW</span>
<div style="left:29px;top:573px;width:196px;height:1px;background:#f0f0f0"></div>
<span class="t tr" style="left:32.5px;top:559px">Exterior Ticks</span>
<span class="t tr" style="left:153.5px;top:559px">Show</span>
<div style="left:29px;top:590px;width:196px;height:1px;background:#f0f0f0"></div>
<span class="t tr" style="left:32.5px;top:576px">Perimeter Circle</span>
<span class="t tr" style="left:153.5px;top:576px">Show</span>
<div style="left:29px;top:607px;width:196px;height:1px;background:#f0f0f0"></div>
<span class="t tr" style="left:32.5px;top:593px">Center Cross</span>
<span class="t tr" style="left:153.5px;top:593px">Show</span>
<div style="left:29px;top:624px;width:196px;height:1px;background:#f0f0f0"></div>
<span class="t tr" style="left:32.5px;top:610px">Cross Hairs</span>
<span class="t tr" style="left:153.5px;top:610px">Hidden</span>
<div style="left:29px;top:641px;width:196px;height:1px;background:#f0f0f0"></div>
<span class="t tr" style="left:32.5px;top:627px">Tick Spacing</span>
<span class="t tr" style="left:135.5px;top:627px">10°</span>
<div style="left:29px;top:658px;width:196px;height:1px;background:#f0f0f0"></div>
<span class="t tr" style="left:32.5px;top:644px">Outer Grid Width</span>
<span class="t tr" style="left:135.5px;top:644px">3</span>
<div style="left:29px;top:675px;width:196px;height:1px;background:#f0f0f0"></div>
<span class="t tr" style="left:32.5px;top:661px">Inner Grid Width</span>
<span class="t tr" style="left:135.5px;top:661px">1</span>
<div style="left:29px;top:692px;width:196px;height:1px;background:#f0f0f0"></div>
<span class="t tr" style="left:32.5px;top:678px">Overlay Width</span>
<span class="t tr" style="left:135.5px;top:678px">1</span>
<div style="left:29px;top:709px;width:196px;height:1px;background:#f0f0f0"></div>
<span class="t tr" style="left:32.5px;top:695px">Legend Scale</span>
<span class="t tr" style="left:135.5px;top:695px">100%</span>
<div style="left:29px;top:726px;width:196px;height:1px;background:#f0f0f0"></div>
<span class="t tr" style="left:32.5px;top:712px">Legend Location</span>
<span class="t tr" style="left:135.5px;top:712px">Right</span>
<div style="left:29px;top:743px;width:196px;height:1px;background:#f0f0f0"></div>
<span class="t tr" style="left:32.5px;top:729px">Filter Label</span>
<span class="t tr" style="left:153.5px;top:729px">Show</span>
<div style="left:14px;top:744px;width:211px;height:17px;background:#f0f0f0"></div>
<span class="t gh" style="left:32.5px;top:746px">Stereonet Fonts</span>
<div style="left:29px;top:777px;width:196px;height:1px;background:#f0f0f0"></div>
<span class="t tr" style="left:32.5px;top:763px">Legend Font</span>
<span class="t tr" style="left:134px;top:763px">Arial</span>
<div style="left:29px;top:794px;width:196px;height:1px;background:#f0f0f0"></div>
<span class="t tr" style="left:32.5px;top:780px">Legend Text Size</span>
<span class="t tr" style="left:135.5px;top:780px">Normal</span>
<div style="left:29px;top:811px;width:196px;height:1px;background:#f0f0f0"></div>
<span class="t tr" style="left:32.5px;top:797px">Label Text Size</span>
<span class="t tr" style="left:135.5px;top:797px">Normal</span>
<div style="left:14px;top:812px;width:211px;height:17px;background:#f0f0f0"></div>
<span class="t gh" style="left:32.5px;top:814px">Stereonet Colors</span>
<div style="left:29px;top:845px;width:196px;height:1px;background:#f0f0f0"></div>
<span class="t tr" style="left:32.5px;top:831px">Stereonet</span>
<div style="left:29px;top:862px;width:196px;height:1px;background:#f0f0f0"></div>
<span class="t tr" style="left:32.5px;top:848px">Background</span>
<div style="left:29px;top:879px;width:196px;height:1px;background:#f0f0f0"></div>
<span class="t tr" style="left:32.5px;top:865px">Grid Outer</span>
<div style="left:29px;top:896px;width:196px;height:1px;background:#f0f0f0"></div>
<span class="t tr" style="left:32.5px;top:882px">Grid Inner</span>
<div style="left:29px;top:913px;width:196px;height:1px;background:#f0f0f0"></div>
<span class="t tr" style="left:32.5px;top:899px">Label Text</span>
<div style="left:29px;top:930px;width:196px;height:1px;background:#f0f0f0"></div>
<span class="t tr" style="left:32.5px;top:916px">Legend Text</span>
<div style="left:29px;top:947px;width:196px;height:1px;background:#f0f0f0"></div>
<span class="t tr" style="left:32.5px;top:933px">Overlay</span>
<div style="left:29px;top:964px;width:196px;height:1px;background:#f0f0f0"></div>
<span class="t tr" style="left:32.5px;top:950px">Global Mean</span>
<div style="left:29px;top:981px;width:196px;height:1px;background:#f0f0f0"></div>
<span class="t tr" style="left:32.5px;top:967px">Global Best Fit</span>
<div style="left:14px;top:982px;width:211px;height:17px;background:#f0f0f0"></div>
<span class="t gh" style="left:32.5px;top:984px">Default Tool Colors</span>
<div style="left:130px;top:506px;width:1px;height:459px;background:#f0f0f0"></div>
<svg class="ic" style="left:0;top:480px" width="240" height="560" viewBox="0 480 240 560"><rect x="17.5" y="492.5" width="8" height="8" fill="#fff" stroke="#111" stroke-width="1"/><path d="M19.5,496.5H23.5" stroke="#111" stroke-width="1"/><rect x="136" y="557.0" width="13" height="13" rx="3" fill="#0f5fc2"/><path d="M139.3,563.6L141.6,566.0L145.8,561.0" stroke="#fff" stroke-width="1.1" fill="none"/><rect x="136" y="574.0" width="13" height="13" rx="3" fill="#0f5fc2"/><path d="M139.3,580.6L141.6,583.0L145.8,578.0" stroke="#fff" stroke-width="1.1" fill="none"/><rect x="136" y="591.0" width="13" height="13" rx="3" fill="#0f5fc2"/><path d="M139.3,597.6L141.6,600.0L145.8,595.0" stroke="#fff" stroke-width="1.1" fill="none"/><rect x="136.5" y="608.5" width="12" height="12" rx="3" fill="#f4f4f4" stroke="#666" stroke-width="1"/><rect x="136" y="727.0" width="13" height="13" rx="3" fill="#0f5fc2"/><path d="M139.3,733.6L141.6,736.0L145.8,731.0" stroke="#fff" stroke-width="1.1" fill="none"/><rect x="17.5" y="747.5" width="8" height="8" fill="#fff" stroke="#111" stroke-width="1"/><path d="M19.5,751.5H23.5" stroke="#111" stroke-width="1"/><rect x="17.5" y="815.5" width="8" height="8" fill="#fff" stroke="#111" stroke-width="1"/><path d="M19.5,819.5H23.5" stroke="#111" stroke-width="1"/><rect x="134.5" y="831.0" width="16" height="11" fill="#ffffff" stroke="#000" stroke-width="1" shape-rendering="crispEdges"/><rect x="134.5" y="848.0" width="16" height="11" fill="#ffffff" stroke="#000" stroke-width="1" shape-rendering="crispEdges"/><rect x="134.5" y="865.0" width="16" height="11" fill="#000000" stroke="#000" stroke-width="1" shape-rendering="crispEdges"/><rect x="134.5" y="882.0" width="16" height="11" fill="#000000" stroke="#000" stroke-width="1" shape-rendering="crispEdges"/><rect x="134.5" y="899.0" width="16" height="11" fill="#000000" stroke="#000" stroke-width="1" shape-rendering="crispEdges"/><rect x="134.5" y="916.0" width="16" height="11" fill="#000000" stroke="#000" stroke-width="1" shape-rendering="crispEdges"/><rect x="134.5" y="933.0" width="16" height="11" fill="#c0c0c0" stroke="#000" stroke-width="1" shape-rendering="crispEdges"/><rect x="134.5" y="950.0" width="16" height="11" fill="#005a00" stroke="#000" stroke-width="1" shape-rendering="crispEdges"/><rect x="134.5" y="967.0" width="16" height="11" fill="#000080" stroke="#000" stroke-width="1" shape-rendering="crispEdges"/><rect x="17.5" y="985.5" width="8" height="8" fill="#fff" stroke="#111" stroke-width="1"/><path d="M19.5,989.5H23.5" stroke="#111" stroke-width="1"/><path d="M21.5,987.5V991.5" stroke="#111" stroke-width="1"/><path d="M234,500.5H241M234,625.5H241" stroke="#9a9a9a" stroke-width="1"/><path d="M238.5,505V511L235.4,508ZM238.5,561V567L235.4,564ZM238.5,617V623L235.4,620Z" fill="#222"/><path d="M238.5,514V558M238.5,570V614" stroke="#777" stroke-width="1" stroke-dasharray="1 2"/></svg>
<svg class="net" width="1683" height="901" viewBox="243 89 1683 901">
<defs><clipPath id="cc"><circle cx="804.6" cy="518.4" r="357.6"/></clipPath></defs>
<g clip-path="url(#cc)" shape-rendering="geometricPrecision">
<path fill="#eaeef3" fill-rule="evenodd" d="M980.1,156.8 981.0,156.8 983.0,156.8 985.0,156.8 987.0,156.8 989.0,156.8 991.0,156.8 993.0,156.8 995.0,156.8 997.0,156.8 999.0,156.8 1001.0,156.8 1003.0,156.8 1005.0,156.8 1007.0,156.8 1009.0,156.8 1011.0,156.8 1013.0,156.8 1015.0,156.8 1017.0,156.8 1019.0,156.8 1021.0,156.8 1023.0,156.8 1025.0,156.8 1027.0,156.8 1029.0,156.8 1031.0,156.8 1033.0,156.8 1035.0,156.8 1037.0,156.8 1039.0,156.8 1041.0,156.8 1043.0,156.8 1045.0,156.8 1047.0,156.8 1049.0,156.8 1051.0,156.8 1053.0,156.8 1055.0,156.8 1057.0,156.8 1059.0,156.8 1061.0,156.8 1063.0,156.8 1065.0,156.8 1067.0,156.8 1069.0,156.8 1071.0,156.8 1073.0,156.8 1075.0,156.8 1077.0,156.8 1079.0,156.8 1081.0,156.8 1083.0,156.8 1085.0,156.8 1087.0,156.8 1089.0,156.8 1091.0,156.8 1093.0,156.8 1095.0,156.8 1097.0,156.8 1099.0,156.8 1101.0,156.8 1103.0,156.8 1105.0,156.8 1107.0,156.8 1109.0,156.8 1111.0,156.8 1113.0,156.8 1115.0,156.8 1117.0,156.8 1119.0,156.8 1121.0,156.8 1123.0,156.8 1125.0,156.8 1127.0,156.8 1129.0,156.8 1131.0,156.8 1133.0,156.8 1135.0,156.8 1137.0,156.8 1139.0,156.8 1141.0,156.8 1143.0,156.8 1145.0,156.8 1147.0,156.8 1149.0,156.8 1151.0,156.8 1153.0,156.8 1155.0,156.8 1157.0,156.8 1159.0,156.8 1161.0,156.8 1163.0,156.8 1165.0,156.8 1167.0,156.8 1167.0,158.8 1167.0,160.8 1167.0,162.8 1167.0,164.8 1167.0,166.8 1167.0,168.8 1167.0,170.8 1167.0,172.8 1167.0,174.8 1167.0,176.8 1167.0,178.8 1167.0,180.8 1167.0,182.8 1167.0,184.8 1167.0,186.8 1167.0,188.8 1167.0,190.8 1167.0,192.8 1167.0,194.8 1167.0,196.8 1167.0,198.8 1167.0,200.8 1167.0,202.8 1167.0,204.8 1167.0,206.8 1167.0,208.8 1167.0,210.8 1167.0,212.8 1167.0,214.8 1167.0,216.8 1167.0,218.8 1167.0,220.8 1167.0,222.8 1167.0,224.8 1167.0,226.8 1167.0,228.8 1167.0,230.8 1167.0,232.8 1167.0,234.8 1167.0,236.8 1167.0,238.8 1167.0,240.8 1167.0,241.9 1165.0,241.8 1163.0,241.6 1161.0,241.5 1159.0,241.2 1157.0,241.0 1155.9,240.8 1155.0,240.7 1153.0,240.3 1151.0,240.0 1149.0,239.6 1147.0,239.1 1145.6,238.8 1145.0,238.7 1143.0,238.2 1141.0,237.6 1139.0,237.0 1138.3,236.8 1137.0,236.4 1135.0,235.7 1133.0,235.0 1132.5,234.8 1131.0,234.3 1129.0,233.5 1127.4,232.8 1127.0,232.7 1125.0,231.8 1123.0,231.0 1122.6,230.8 1121.0,230.2 1119.0,229.3 1117.6,228.8 1117.0,228.6 1115.0,228.0 1113.0,227.5 1111.0,227.0 1109.7,226.8 1109.0,226.7 1107.0,226.4 1105.0,226.2 1103.0,226.2 1101.0,226.2 1099.0,226.3 1097.0,226.6 1095.6,226.8 1095.0,226.9 1093.0,227.3 1091.0,227.8 1089.0,228.3 1087.6,228.8 1087.0,229.0 1085.0,229.9 1083.1,230.8 1083.0,230.8 1081.0,231.9 1079.1,232.8 1079.0,232.8 1077.0,233.8 1075.0,234.7 1074.7,234.8 1073.0,235.5 1071.0,236.3 1069.8,236.8 1069.0,237.1 1067.0,237.9 1065.0,238.6 1064.3,238.8 1063.0,239.2 1061.0,239.9 1059.0,240.5 1058.0,240.8 1057.0,241.1 1055.0,241.7 1053.0,242.2 1051.0,242.8 1050.9,242.8 1049.0,243.3 1047.0,243.8 1045.0,244.3 1043.0,244.7 1042.1,244.8 1041.0,245.0 1039.0,245.2 1037.0,245.4 1035.0,245.6 1033.0,245.7 1031.0,245.7 1029.0,245.6 1027.0,245.4 1025.0,245.2 1023.0,245.0 1022.1,244.8 1021.0,244.6 1019.0,244.2 1017.0,243.7 1015.0,243.1 1014.0,242.8 1013.0,242.5 1011.0,241.7 1009.0,240.9 1008.7,240.8 1007.0,240.0 1005.0,239.0 1004.6,238.8 1003.0,237.9 1001.1,236.8 1001.0,236.7 999.0,235.4 998.1,234.8 997.0,234.0 995.5,232.8 995.0,232.4 993.1,230.8 993.0,230.7 991.0,228.8 991.0,228.8 989.1,226.8 989.0,226.7 987.3,224.8 987.0,224.4 985.8,222.8 985.0,221.8 984.3,220.8 983.0,218.9 983.0,218.8 981.7,216.8 981.0,215.5 980.6,214.8 979.6,212.8 979.0,211.5 978.7,210.8 977.8,208.8 977.1,206.8 977.0,206.5 976.4,204.8 975.9,202.8 975.3,200.8 975.0,199.2 974.9,198.8 974.6,196.8 974.3,194.8 974.0,192.8 973.9,190.8 973.8,188.8 973.7,186.8 973.8,184.8 973.8,182.8 974.0,180.8 974.2,178.8 974.4,176.8 974.7,174.8 975.0,173.2 975.1,172.8 975.5,170.8 976.0,168.8 976.5,166.8 977.0,165.1 977.1,164.8 977.7,162.8 978.5,160.8 979.0,159.5 979.3,158.8 980.1,156.8ZM549.9,162.8 551.0,162.6 553.0,162.2 555.0,162.0 557.0,161.8 559.0,161.8 561.0,161.9 563.0,162.1 565.0,162.5 566.4,162.8 567.0,162.9 569.0,163.6 571.0,164.3 571.9,164.8 573.0,165.3 575.0,166.2 576.5,166.8 577.0,167.0 579.0,167.5 581.0,168.0 583.0,168.3 585.0,168.3 587.0,168.1 589.0,167.7 591.0,167.3 593.0,166.9 593.3,166.8 595.0,166.5 597.0,166.2 599.0,165.9 601.0,165.7 603.0,165.5 605.0,165.3 607.0,165.1 609.0,164.9 609.6,164.8 611.0,164.7 613.0,164.5 615.0,164.3 617.0,164.1 619.0,164.0 621.0,163.9 623.0,163.8 625.0,163.8 627.0,163.7 629.0,163.7 631.0,163.7 633.0,163.7 635.0,163.7 637.0,163.8 639.0,163.9 641.0,164.1 643.0,164.4 645.0,164.7 645.3,164.8 647.0,165.1 649.0,165.5 651.0,166.1 653.0,166.6 653.5,166.8 655.0,167.3 657.0,168.0 659.0,168.7 659.1,168.8 661.0,169.6 663.0,170.4 663.8,170.8 665.0,171.3 667.0,172.1 668.5,172.8 669.0,173.0 671.0,173.9 673.0,174.8 673.0,174.8 675.0,175.7 677.0,176.6 677.3,176.8 679.0,177.6 681.0,178.6 681.4,178.8 683.0,179.6 685.0,180.7 685.3,180.8 687.0,181.7 689.0,182.8 689.0,182.8 691.0,183.9 692.6,184.8 693.0,185.0 695.0,186.1 696.1,186.8 697.0,187.4 699.0,188.7 699.2,188.8 701.0,190.1 701.9,190.8 703.0,191.6 704.4,192.8 705.0,193.4 706.6,194.8 707.0,195.2 708.5,196.8 709.0,197.3 710.3,198.8 711.0,199.7 711.9,200.8 713.0,202.4 713.3,202.8 714.6,204.8 715.0,205.5 715.7,206.8 716.7,208.8 717.0,209.4 717.6,210.8 718.4,212.8 719.0,214.6 719.1,214.8 719.7,216.8 720.1,218.8 720.5,220.8 720.8,222.8 720.9,224.8 721.0,225.9 721.1,226.8 721.1,228.8 721.0,230.8 721.0,231.1 720.9,232.8 720.7,234.8 720.4,236.8 720.1,238.8 719.6,240.8 719.1,242.8 719.0,243.3 718.6,244.8 718.0,246.8 717.3,248.8 717.0,249.6 716.6,250.8 715.8,252.8 715.0,254.6 714.9,254.8 714.0,256.8 713.0,258.8 713.0,258.8 712.0,260.8 711.0,262.7 710.9,262.8 709.9,264.8 709.0,266.3 708.7,266.8 707.5,268.8 707.0,269.7 706.3,270.8 705.0,272.7 704.9,272.8 703.5,274.8 703.0,275.4 701.8,276.8 701.0,277.7 700.0,278.8 699.0,279.8 698.0,280.8 697.0,281.7 695.7,282.8 695.0,283.4 693.3,284.8 693.0,285.1 691.0,286.6 690.7,286.8 689.0,288.0 687.7,288.8 687.0,289.3 685.0,290.5 684.4,290.8 683.0,291.6 681.0,292.6 680.6,292.8 679.0,293.6 677.0,294.5 676.1,294.8 675.0,295.3 673.0,296.0 671.0,296.6 670.4,296.8 669.0,297.2 667.0,297.8 665.0,298.3 663.0,298.8 662.9,298.8 661.0,299.2 659.0,299.6 657.0,300.0 655.0,300.3 653.0,300.5 651.0,300.8 650.7,300.8 649.0,301.1 647.0,301.4 645.0,301.9 643.0,302.6 642.3,302.8 641.0,303.4 639.0,304.5 638.6,304.8 637.0,306.0 636.1,306.8 635.0,307.9 634.3,308.8 633.0,310.3 632.6,310.8 631.0,312.8 631.0,312.8 629.4,314.8 629.0,315.2 627.7,316.8 627.0,317.6 626.0,318.8 625.0,320.0 624.4,320.8 623.0,322.4 622.7,322.8 621.0,324.7 620.9,324.8 619.0,326.8 619.0,326.8 617.1,328.8 617.0,328.9 615.2,330.8 615.0,331.0 613.2,332.8 613.0,333.0 611.2,334.8 611.0,335.0 609.0,336.8 609.0,336.8 607.0,338.5 606.6,338.8 605.0,340.1 604.0,340.8 603.0,341.5 601.1,342.8 601.0,342.8 599.0,344.1 597.6,344.8 597.0,345.2 595.0,346.1 593.5,346.8 593.0,347.0 591.0,347.8 589.0,348.5 588.0,348.8 587.0,349.1 585.0,349.6 583.0,350.1 581.0,350.4 579.0,350.7 577.5,350.8 577.0,350.9 575.0,351.0 573.0,351.0 571.0,350.9 569.0,350.8 568.9,350.8 567.0,350.6 565.0,350.3 563.0,350.0 561.0,349.5 559.0,349.0 558.5,348.8 557.0,348.3 555.0,347.6 553.1,346.8 553.0,346.8 551.0,345.8 549.0,344.8 549.0,344.8 547.0,343.6 545.7,342.8 545.0,342.4 543.0,340.9 542.8,340.8 541.0,339.4 540.3,338.8 539.0,337.7 538.1,336.8 537.0,335.8 536.1,334.8 535.0,333.7 534.2,332.8 533.0,331.3 532.6,330.8 531.1,328.8 531.0,328.7 529.5,326.8 529.0,326.1 528.1,324.8 527.0,323.3 526.6,322.8 525.2,320.8 525.0,320.5 523.8,318.8 523.0,317.5 522.5,316.8 521.3,314.8 521.0,314.4 520.0,312.8 519.0,311.0 518.9,310.8 517.7,308.8 517.0,307.4 516.7,306.8 515.7,304.8 515.0,303.4 514.7,302.8 513.8,300.8 513.0,299.0 512.9,298.8 512.1,296.8 511.3,294.8 511.0,294.0 510.5,292.8 509.8,290.8 509.2,288.8 509.0,288.2 508.5,286.8 507.9,284.8 507.4,282.8 507.0,281.4 506.8,280.8 506.3,278.8 505.8,276.8 505.3,274.8 505.0,273.4 504.8,272.8 504.3,270.8 503.9,268.8 503.4,266.8 503.0,265.0 503.0,264.8 502.5,262.8 502.0,260.8 501.6,258.8 501.2,256.8 501.0,256.0 500.7,254.8 500.4,252.8 500.1,250.8 499.9,248.8 499.8,246.8 499.8,244.8 499.9,242.8 500.0,240.8 500.3,238.8 500.6,236.8 500.9,234.8 501.0,233.6 501.1,232.8 501.3,230.8 501.6,228.8 501.8,226.8 502.0,224.8 502.3,222.8 502.6,220.8 502.9,218.8 503.0,218.1 503.2,216.8 503.6,214.8 504.1,212.8 504.6,210.8 505.0,209.2 505.1,208.8 505.7,206.8 506.4,204.8 507.0,203.1 507.1,202.8 508.0,200.8 508.9,198.8 509.0,198.5 509.9,196.8 511.0,194.8 511.0,194.8 512.2,192.8 513.0,191.5 513.5,190.8 514.8,188.8 515.0,188.5 516.2,186.8 517.0,185.8 517.7,184.8 519.0,183.2 519.3,182.8 521.0,180.9 521.1,180.8 522.9,178.8 523.0,178.7 524.9,176.8 525.0,176.7 527.0,174.9 527.1,174.8 529.0,173.2 529.5,172.8 531.0,171.7 532.2,170.8 533.0,170.3 535.0,169.0 535.3,168.8 537.0,167.8 538.9,166.8 539.0,166.7 541.0,165.8 543.0,164.9 543.4,164.8 545.0,164.2 547.0,163.5 549.0,163.0 549.9,162.8ZM950.8,446.8 951.0,446.7 953.0,446.1 955.0,445.6 957.0,445.2 959.0,445.0 961.0,444.9 963.0,444.9 965.0,445.1 967.0,445.3 969.0,445.7 971.0,446.3 972.4,446.8 973.0,447.0 975.0,447.8 977.0,448.8 977.0,448.8 979.0,449.8 980.6,450.8 981.0,451.1 983.0,452.4 983.5,452.8 985.0,454.0 986.0,454.8 987.0,455.7 988.2,456.8 989.0,457.7 990.1,458.8 991.0,459.9 991.7,460.8 993.0,462.5 993.2,462.8 994.6,464.8 995.0,465.5 995.7,466.8 996.9,468.8 997.0,469.0 998.0,470.8 999.0,472.6 999.1,472.8 1000.1,474.8 1001.0,476.5 1001.1,476.8 1002.1,478.8 1003.0,480.8 1003.0,480.8 1003.9,482.8 1004.7,484.8 1005.0,485.7 1005.4,486.8 1006.2,488.8 1006.9,490.8 1007.0,491.2 1007.6,492.8 1008.2,494.8 1008.8,496.8 1009.0,497.6 1009.4,498.8 1009.9,500.8 1010.3,502.8 1010.7,504.8 1010.9,506.8 1011.0,507.7 1011.1,508.8 1011.1,510.8 1011.1,512.8 1011.0,514.2 1011.0,514.8 1010.7,516.8 1010.4,518.8 1009.9,520.8 1009.3,522.8 1009.0,523.8 1008.7,524.8 1007.9,526.8 1007.0,528.6 1006.9,528.8 1005.8,530.8 1005.0,532.2 1004.6,532.8 1003.2,534.8 1003.0,535.1 1001.6,536.8 1001.0,537.5 999.7,538.8 999.0,539.5 997.6,540.8 997.0,541.3 995.0,542.8 995.0,542.8 993.0,544.2 991.9,544.8 991.0,545.3 989.0,546.3 987.7,546.8 987.0,547.1 985.0,547.8 983.0,548.3 981.0,548.8 980.7,548.8 979.0,549.0 977.0,549.2 975.0,549.3 973.0,549.2 971.0,548.9 970.2,548.8 969.0,548.6 967.0,548.2 965.0,547.8 963.0,547.3 961.0,546.9 960.6,546.8 959.0,546.5 957.0,546.1 955.0,545.6 953.0,545.2 951.4,544.8 951.0,544.7 949.0,544.2 947.0,543.6 945.0,542.9 944.8,542.8 943.0,542.1 941.0,541.3 939.9,540.8 939.0,540.3 937.0,539.2 936.2,538.8 935.0,538.0 933.3,536.8 933.0,536.5 931.1,534.8 931.0,534.7 929.5,532.8 929.1,530.8 929.0,528.8 929.0,528.8 928.7,526.8 928.5,524.8 928.4,522.8 928.2,520.8 928.1,518.8 927.9,516.8 927.6,514.8 927.2,512.8 927.0,512.1 926.5,510.8 925.7,508.8 925.2,506.8 925.0,506.0 924.8,504.8 924.5,502.8 924.5,500.8 924.5,498.8 924.6,496.8 924.7,494.8 924.8,492.8 925.0,491.1 925.0,490.8 925.3,488.8 925.5,486.8 925.9,484.8 926.3,482.8 926.8,480.8 927.0,479.9 927.3,478.8 927.8,476.8 928.4,474.8 929.0,473.0 929.1,472.8 929.7,470.8 930.4,468.8 931.0,467.1 931.1,466.8 931.9,464.8 932.8,462.8 933.0,462.5 934.0,460.8 935.0,459.2 935.3,458.8 936.8,456.8 937.0,456.5 938.6,454.8 939.0,454.4 940.7,452.8 941.0,452.5 943.0,451.0 943.2,450.8 945.0,449.6 946.4,448.8 947.0,448.5 949.0,447.5 950.8,446.8ZM567.1,566.8 569.0,566.4 571.0,566.0 573.0,565.8 575.0,565.7 577.0,565.7 579.0,565.8 581.0,566.1 583.0,566.4 584.5,566.8 585.0,566.9 587.0,567.6 589.0,568.3 590.0,568.8 591.0,569.3 593.0,570.3 593.7,570.8 595.0,571.6 596.6,572.8 597.0,573.1 599.0,574.8 599.0,574.8 601.0,576.8 601.0,576.8 602.6,578.8 603.0,579.3 604.1,580.8 605.0,582.3 605.3,582.8 606.4,584.8 607.0,586.2 607.3,586.8 608.0,588.8 608.6,590.8 609.0,592.3 609.1,592.8 609.5,594.8 609.7,596.8 609.8,598.8 609.8,600.8 609.7,602.8 609.4,604.8 609.1,606.8 609.0,607.1 608.6,608.8 608.0,610.8 607.2,612.8 607.0,613.3 606.3,614.8 605.2,616.8 605.0,617.2 604.0,618.8 603.0,620.1 602.5,620.8 601.0,622.6 600.8,622.8 599.0,624.6 598.8,624.8 597.0,626.3 596.4,626.8 595.0,627.8 593.4,628.8 593.0,629.1 591.0,630.1 589.6,630.8 589.0,631.1 587.0,631.8 585.0,632.5 583.7,632.8 583.0,633.0 581.0,633.3 579.0,633.6 577.0,633.7 575.0,633.7 573.0,633.6 571.0,633.4 569.0,633.1 567.9,632.8 567.0,632.6 565.0,632.0 563.0,631.2 562.0,630.8 561.0,630.4 559.0,629.3 558.2,628.8 557.0,628.1 555.2,626.8 555.0,626.6 553.0,625.0 552.8,624.8 551.0,623.0 550.8,622.8 549.1,620.8 549.0,620.7 547.6,618.8 547.0,617.8 546.4,616.8 545.3,614.8 545.0,614.2 544.4,612.8 543.6,610.8 543.0,608.8 543.0,608.8 542.5,606.8 542.1,604.8 541.9,602.8 541.8,600.8 541.8,598.8 541.9,596.8 542.1,594.8 542.5,592.8 542.9,590.8 543.0,590.6 543.5,588.8 544.3,586.8 545.0,585.2 545.2,584.8 546.2,582.8 547.0,581.6 547.5,580.8 548.9,578.8 549.0,578.7 550.6,576.8 551.0,576.4 552.6,574.8 553.0,574.4 554.9,572.8 555.0,572.8 557.0,571.3 557.8,570.8 559.0,570.1 561.0,569.0 561.5,568.8 563.0,568.2 565.0,567.4 567.0,566.8 567.1,566.8ZM620.9,648.8 621.0,648.8 623.0,648.4 625.0,648.1 627.0,647.9 629.0,647.7 631.0,647.6 633.0,647.5 635.0,647.5 637.0,647.5 639.0,647.6 641.0,647.8 643.0,648.1 645.0,648.4 647.0,648.7 647.3,648.8 649.0,649.1 651.0,649.6 653.0,650.2 654.8,650.8 655.0,650.9 657.0,651.5 659.0,652.3 660.1,652.8 661.0,653.2 663.0,654.0 664.9,654.8 665.0,654.8 667.0,655.6 669.0,656.4 670.0,656.8 671.0,657.2 673.0,657.9 675.0,658.6 675.4,658.8 677.0,659.3 679.0,660.0 681.0,660.7 681.2,660.8 683.0,661.4 685.0,662.0 687.0,662.8 687.1,662.8 689.0,663.5 691.0,664.4 691.8,664.8 693.0,665.4 695.0,666.4 695.6,666.8 697.0,667.6 698.9,668.8 699.0,668.9 701.0,670.1 702.0,670.8 703.0,671.5 704.9,672.8 705.0,672.9 707.0,674.3 707.7,674.8 709.0,675.7 710.4,676.8 711.0,677.2 713.0,678.8 713.0,678.8 715.0,680.3 715.6,680.8 717.0,682.0 717.9,682.8 719.0,683.8 720.0,684.8 721.0,685.8 721.9,686.8 723.0,688.1 723.6,688.8 725.0,690.5 725.3,690.8 726.9,692.8 727.0,692.9 728.5,694.8 729.0,695.4 730.1,696.8 731.0,698.0 731.6,698.8 733.0,700.7 733.1,700.8 734.5,702.8 735.0,703.5 735.9,704.8 737.0,706.5 737.2,706.8 738.6,708.8 739.0,709.5 739.9,710.8 741.0,712.4 741.3,712.8 742.6,714.8 743.0,715.5 743.9,716.8 745.0,718.6 745.1,718.8 746.1,720.8 747.0,722.7 747.1,722.8 747.8,724.8 748.5,726.8 749.0,728.7 749.0,728.8 749.4,730.8 749.7,732.8 749.9,734.8 750.0,736.8 750.0,738.8 749.8,740.8 749.6,742.8 749.2,744.8 749.0,745.6 748.7,746.8 748.1,748.8 747.3,750.8 747.0,751.4 746.3,752.8 745.2,754.8 745.0,755.1 743.9,756.8 743.0,758.0 742.3,758.8 741.0,760.2 740.4,760.8 739.0,762.1 738.2,762.8 737.0,763.7 735.3,764.8 735.0,765.0 733.0,766.1 731.5,766.8 731.0,767.0 729.0,767.8 727.0,768.4 725.0,768.8 725.0,768.8 723.0,769.1 721.0,769.3 719.0,769.3 717.0,769.2 715.0,769.0 713.6,768.8 713.0,768.7 711.0,768.2 709.0,767.6 707.0,767.0 706.6,766.8 705.0,766.3 703.0,765.7 701.0,765.2 699.0,764.9 697.8,764.8 697.0,764.7 695.0,764.6 693.0,764.6 691.0,764.6 689.0,764.7 688.3,764.8 687.0,765.0 685.0,765.6 683.0,766.5 682.4,766.8 681.0,767.6 679.5,768.8 679.0,769.2 677.5,770.8 677.0,771.5 676.2,772.8 675.4,774.8 675.0,776.1 674.8,776.8 674.2,778.8 673.6,780.8 673.0,782.7 673.0,782.8 672.4,784.8 671.9,786.8 671.4,788.8 671.0,790.2 670.8,790.8 670.3,792.8 669.7,794.8 669.1,796.8 669.0,796.9 668.3,798.8 667.5,800.8 667.0,801.9 666.6,802.8 665.6,804.8 665.0,805.8 664.5,806.8 663.2,808.8 663.0,809.2 661.9,810.8 661.0,812.1 660.4,812.8 659.0,814.6 658.8,814.8 657.1,816.8 657.0,816.9 655.2,818.8 655.0,819.0 653.0,820.8 653.0,820.8 651.0,822.5 650.6,822.8 649.0,824.1 647.9,824.8 647.0,825.5 645.0,826.7 644.9,826.8 643.0,827.9 641.2,828.8 641.0,828.9 639.0,829.8 637.0,830.6 636.5,830.8 635.0,831.3 633.0,831.9 631.0,832.5 629.3,832.8 629.0,832.9 627.0,833.2 625.0,833.4 623.0,833.6 621.0,833.7 619.0,833.7 617.0,833.6 615.0,833.4 613.0,833.1 611.4,832.8 611.0,832.7 609.0,832.3 607.0,831.7 605.0,831.1 604.2,830.8 603.0,830.4 601.0,829.5 599.5,828.8 599.0,828.6 597.0,827.5 595.9,826.8 595.0,826.3 593.0,824.9 592.8,824.8 591.0,823.4 590.3,822.8 589.0,821.7 588.0,820.8 587.0,819.8 586.0,818.8 585.0,817.7 584.2,816.8 583.0,815.3 582.6,814.8 581.2,812.8 581.0,812.5 580.0,810.8 579.0,809.1 578.8,808.8 577.8,806.8 577.0,805.0 576.9,804.8 576.1,802.8 575.4,800.8 575.0,799.3 574.8,798.8 574.4,796.8 574.0,794.8 573.6,792.8 573.4,790.8 573.3,788.8 573.2,786.8 573.2,784.8 573.3,782.8 573.5,780.8 573.7,778.8 574.0,776.8 574.3,774.8 574.6,772.8 575.0,770.8 575.0,770.8 575.4,768.8 575.8,766.8 576.3,764.8 576.8,762.8 577.0,762.2 577.4,760.8 578.0,758.8 578.7,756.8 579.0,756.0 579.4,754.8 580.2,752.8 581.0,750.9 581.1,750.8 582.0,748.8 582.9,746.8 583.0,746.5 583.7,744.8 584.3,742.8 584.8,740.8 585.0,739.9 585.2,738.8 585.5,736.8 585.7,734.8 585.8,732.8 585.8,730.8 585.7,728.8 585.4,726.8 585.1,724.8 585.0,724.3 584.7,722.8 584.1,720.8 583.5,718.8 583.0,717.2 582.9,716.8 582.3,714.8 581.8,712.8 581.4,710.8 581.0,708.8 581.0,708.7 580.7,706.8 580.5,704.8 580.3,702.8 580.3,700.8 580.3,698.8 580.4,696.8 580.6,694.8 580.8,692.8 581.0,691.6 581.1,690.8 581.5,688.8 582.0,686.8 582.5,684.8 583.0,683.4 583.2,682.8 583.9,680.8 584.7,678.8 585.0,678.2 585.6,676.8 586.7,674.8 587.0,674.2 587.8,672.8 589.0,670.9 589.1,670.8 590.4,668.8 591.0,668.1 592.0,666.8 593.0,665.6 593.7,664.8 595.0,663.4 595.6,662.8 597.0,661.4 597.7,660.8 599.0,659.6 600.0,658.8 601.0,658.0 602.7,656.8 603.0,656.6 605.0,655.3 605.8,654.8 607.0,654.1 609.0,653.0 609.4,652.8 611.0,652.0 613.0,651.2 614.0,650.8 615.0,650.4 617.0,649.8 619.0,649.2 620.9,648.8ZM1038.3,726.8 1039.0,726.7 1041.0,726.6 1043.0,726.6 1045.0,726.7 1046.0,726.8 1047.0,726.9 1049.0,727.0 1051.0,727.1 1053.0,727.2 1055.0,727.3 1057.0,727.4 1059.0,727.5 1061.0,727.6 1063.0,727.6 1065.0,727.7 1067.0,727.8 1069.0,727.8 1071.0,727.9 1073.0,728.0 1075.0,728.2 1077.0,728.3 1079.0,728.5 1081.0,728.7 1082.2,728.8 1083.0,728.9 1085.0,729.1 1087.0,729.4 1089.0,729.7 1091.0,730.0 1093.0,730.3 1095.0,730.7 1095.4,730.8 1097.0,731.1 1099.0,731.5 1101.0,732.0 1103.0,732.4 1104.4,732.8 1105.0,732.9 1107.0,733.5 1109.0,734.0 1111.0,734.5 1111.9,734.8 1113.0,735.1 1115.0,735.7 1117.0,736.3 1118.8,736.8 1119.0,736.9 1121.0,737.4 1123.0,738.0 1125.0,738.7 1125.2,738.8 1127.0,739.4 1129.0,740.2 1130.4,740.8 1131.0,741.1 1133.0,742.0 1134.6,742.8 1135.0,743.0 1137.0,744.1 1138.2,744.8 1139.0,745.3 1141.0,746.5 1141.4,746.8 1143.0,747.9 1144.3,748.8 1145.0,749.4 1146.8,750.8 1147.0,751.0 1149.0,752.7 1149.1,752.8 1151.0,754.6 1151.2,754.8 1153.0,756.6 1153.2,756.8 1155.0,758.8 1155.0,758.9 1156.6,760.8 1157.0,761.3 1158.1,762.8 1159.0,764.1 1159.5,764.8 1160.8,766.8 1161.0,767.1 1162.0,768.8 1163.0,770.6 1163.1,770.8 1164.1,772.8 1165.0,774.7 1165.0,774.8 1165.9,776.8 1166.7,778.8 1167.0,779.8 1167.0,780.8 1167.0,782.8 1167.0,784.8 1167.0,786.8 1167.0,788.8 1167.0,790.8 1167.0,792.8 1167.0,794.8 1167.0,796.8 1167.0,798.8 1167.0,800.8 1167.0,802.8 1167.0,804.8 1167.0,806.8 1167.0,808.8 1167.0,810.8 1167.0,812.8 1167.0,814.8 1167.0,816.8 1167.0,818.8 1167.0,820.8 1167.0,822.8 1167.0,823.5 1166.6,824.8 1165.8,826.8 1165.0,828.7 1164.9,828.8 1164.0,830.8 1163.0,832.8 1163.0,832.8 1161.9,834.8 1161.0,836.4 1160.8,836.8 1159.6,838.8 1159.0,839.6 1158.2,840.8 1157.0,842.6 1156.8,842.8 1155.4,844.8 1155.0,845.3 1153.8,846.8 1153.0,847.7 1152.1,848.8 1151.0,850.0 1150.3,850.8 1149.0,852.2 1148.5,852.8 1147.0,854.3 1146.5,854.8 1145.0,856.3 1144.5,856.8 1143.0,858.3 1142.5,858.8 1141.0,860.2 1140.4,860.8 1139.0,862.0 1138.1,862.8 1137.0,863.8 1135.8,864.8 1135.0,865.5 1133.3,866.8 1133.0,867.1 1131.0,868.6 1130.7,868.8 1129.0,870.1 1128.0,870.8 1127.0,871.5 1125.1,872.8 1125.0,872.9 1123.0,874.2 1122.1,874.8 1121.0,875.5 1119.0,876.8 1119.0,876.8 1117.0,878.1 1115.8,878.8 1115.0,879.3 1113.0,880.4 1112.4,880.8 1111.0,880.8 1109.0,880.8 1107.0,880.8 1105.0,880.8 1103.0,880.8 1101.0,880.8 1099.0,880.8 1097.0,880.8 1095.0,880.8 1093.0,880.8 1091.0,880.8 1089.0,880.8 1087.0,880.8 1085.0,880.8 1083.0,880.8 1081.0,880.8 1079.0,880.8 1077.0,880.8 1075.0,880.8 1073.0,880.8 1071.0,880.8 1069.0,880.8 1067.0,880.8 1065.0,880.8 1063.0,880.8 1061.0,880.8 1059.0,880.8 1057.0,880.8 1055.0,880.8 1053.0,880.8 1051.0,880.8 1049.0,880.8 1047.0,880.8 1045.0,880.8 1043.0,880.8 1041.0,880.8 1039.0,880.8 1037.0,880.8 1035.0,880.8 1033.0,880.8 1031.0,880.8 1029.0,880.8 1027.0,880.8 1025.0,880.8 1023.0,880.8 1021.0,880.8 1019.0,880.8 1017.0,880.8 1015.0,880.8 1013.0,880.8 1011.0,880.8 1009.0,880.8 1007.0,880.8 1005.0,880.8 1003.0,880.8 1001.0,880.8 999.0,880.8 997.0,880.8 995.0,880.8 993.0,880.8 991.0,880.8 989.0,880.8 987.0,880.8 985.0,880.8 983.0,880.8 981.0,880.8 979.0,880.8 977.0,880.8 975.0,880.8 973.0,880.8 971.0,880.8 969.0,880.8 967.0,880.8 965.0,880.8 963.0,880.8 961.0,880.8 959.0,880.8 957.0,880.8 955.0,880.8 953.0,880.8 951.0,880.8 949.0,880.8 947.0,880.8 945.0,880.8 943.0,880.8 941.0,880.8 939.0,880.8 937.0,880.8 935.0,880.8 933.0,880.8 931.0,880.8 929.0,880.8 927.0,880.8 925.0,880.8 923.0,880.8 921.0,880.8 919.0,880.8 917.0,880.8 915.0,880.8 914.2,880.8 914.6,878.8 915.0,877.3 915.1,876.8 915.7,874.8 916.3,872.8 917.0,870.8 917.0,870.8 917.7,868.8 918.6,866.8 919.0,865.8 919.4,864.8 920.3,862.8 921.0,861.2 921.2,860.8 922.0,858.8 922.9,856.8 923.0,856.6 923.7,854.8 924.6,852.8 925.0,851.9 925.5,850.8 926.3,848.8 927.0,847.3 927.2,846.8 928.1,844.8 929.0,842.8 929.0,842.8 929.8,840.8 930.7,838.8 931.0,838.2 931.6,836.8 932.4,834.8 933.0,833.4 933.3,832.8 934.1,830.8 934.9,828.8 935.0,828.7 935.8,826.8 936.8,824.8 937.0,824.5 937.9,822.8 939.0,820.8 939.0,820.8 940.2,818.8 941.0,817.5 941.4,816.8 942.8,814.8 943.0,814.5 944.2,812.8 945.0,811.8 945.7,810.8 947.0,809.2 947.3,808.8 948.8,806.8 949.0,806.6 950.4,804.8 951.0,804.0 952.0,802.8 953.0,801.4 953.5,800.8 955.0,798.9 955.1,798.8 956.7,796.8 957.0,796.4 958.2,794.8 959.0,793.8 959.8,792.8 961.0,791.1 961.2,790.8 962.7,788.8 963.0,788.4 964.2,786.8 965.0,785.8 965.9,784.8 967.0,783.4 967.5,782.8 968.9,780.8 969.0,780.5 969.8,778.8 970.3,776.8 970.6,774.8 970.7,772.8 970.6,770.8 970.6,768.8 970.8,766.8 971.0,766.0 971.2,764.8 971.7,762.8 972.4,760.8 973.0,759.6 973.3,758.8 974.4,756.8 975.0,755.8 975.6,754.8 977.0,752.9 977.1,752.8 978.7,750.8 979.0,750.5 980.6,748.8 981.0,748.4 982.7,746.8 983.0,746.5 985.0,744.8 985.0,744.8 987.0,743.3 987.7,742.8 989.0,741.9 990.7,740.8 991.0,740.6 993.0,739.4 994.1,738.8 995.0,738.3 997.0,737.2 997.8,736.8 999.0,736.2 1001.0,735.3 1002.0,734.8 1003.0,734.4 1005.0,733.6 1007.0,732.9 1007.4,732.8 1009.0,732.3 1011.0,731.8 1013.0,731.3 1015.0,730.9 1015.4,730.8 1017.0,730.5 1019.0,730.2 1021.0,729.8 1023.0,729.5 1025.0,729.2 1027.0,728.9 1027.4,728.8 1029.0,728.5 1031.0,728.1 1033.0,727.6 1035.0,727.2 1037.0,726.9 1038.3,726.8Z"/>
<path fill="#d5edf0" fill-rule="evenodd" d="M1004.3,156.8 1005.0,156.8 1007.0,156.8 1009.0,156.8 1011.0,156.8 1013.0,156.8 1015.0,156.8 1017.0,156.8 1019.0,156.8 1021.0,156.8 1023.0,156.8 1025.0,156.8 1027.0,156.8 1029.0,156.8 1031.0,156.8 1033.0,156.8 1035.0,156.8 1037.0,156.8 1039.0,156.8 1041.0,156.8 1043.0,156.8 1045.0,156.8 1047.0,156.8 1049.0,156.8 1051.0,156.8 1053.0,156.8 1055.0,156.8 1057.0,156.8 1059.0,156.8 1061.0,156.8 1063.0,156.8 1065.0,156.8 1067.0,156.8 1069.0,156.8 1071.0,156.8 1073.0,156.8 1075.0,156.8 1077.0,156.8 1079.0,156.8 1081.0,156.8 1083.0,156.8 1085.0,156.8 1087.0,156.8 1089.0,156.8 1091.0,156.8 1093.0,156.8 1095.0,156.8 1097.0,156.8 1099.0,156.8 1101.0,156.8 1103.0,156.8 1105.0,156.8 1107.0,156.8 1109.0,156.8 1111.0,156.8 1113.0,156.8 1115.0,156.8 1117.0,156.8 1119.0,156.8 1121.0,156.8 1123.0,156.8 1125.0,156.8 1127.0,156.8 1129.0,156.8 1131.0,156.8 1133.0,156.8 1135.0,156.8 1137.0,156.8 1139.0,156.8 1141.0,156.8 1143.0,156.8 1145.0,156.8 1147.0,156.8 1149.0,156.8 1151.0,156.8 1153.0,156.8 1155.0,156.8 1157.0,156.8 1159.0,156.8 1161.0,156.8 1163.0,156.8 1165.0,156.8 1167.0,156.8 1167.0,158.8 1167.0,160.8 1167.0,162.8 1167.0,164.8 1167.0,166.8 1167.0,168.8 1167.0,170.8 1167.0,172.8 1167.0,174.8 1167.0,176.8 1167.0,178.8 1167.0,180.8 1167.0,182.8 1167.0,184.8 1167.0,186.8 1167.0,188.8 1167.0,190.8 1167.0,192.8 1167.0,194.8 1167.0,196.8 1167.0,198.8 1167.0,200.8 1167.0,202.8 1167.0,204.8 1167.0,206.8 1167.0,208.8 1167.0,210.8 1167.0,212.8 1167.0,214.8 1167.0,216.8 1167.0,218.8 1167.0,220.8 1167.0,222.8 1167.0,224.8 1167.0,226.8 1167.0,227.1 1165.0,227.1 1163.0,227.0 1161.0,226.9 1160.2,226.8 1159.0,226.7 1157.0,226.5 1155.0,226.2 1153.0,225.9 1151.0,225.6 1149.0,225.2 1147.3,224.8 1147.0,224.7 1145.0,224.3 1143.0,223.8 1141.0,223.3 1139.4,222.8 1139.0,222.7 1137.0,222.1 1135.0,221.5 1133.0,220.9 1132.7,220.8 1131.0,220.3 1129.0,219.6 1127.0,218.9 1126.8,218.8 1125.0,218.1 1123.0,217.5 1121.0,216.8 1120.9,216.8 1119.0,216.2 1117.0,215.7 1115.0,215.2 1113.3,214.8 1113.0,214.7 1111.0,214.3 1109.0,213.9 1107.0,213.5 1105.0,213.2 1103.0,212.9 1102.3,212.8 1101.0,212.6 1099.0,212.4 1097.0,212.2 1095.0,212.1 1093.0,212.0 1091.0,212.0 1089.0,212.0 1087.0,212.1 1085.0,212.3 1083.0,212.6 1081.3,212.8 1081.0,212.8 1079.0,213.1 1077.0,213.5 1075.0,213.9 1073.0,214.4 1071.4,214.8 1071.0,214.9 1069.0,215.6 1067.0,216.4 1066.0,216.8 1065.0,217.2 1063.0,218.0 1061.0,218.7 1060.8,218.8 1059.0,219.4 1057.0,220.1 1055.0,220.8 1054.9,220.8 1053.0,221.4 1051.0,221.9 1049.0,222.4 1047.3,222.8 1047.0,222.9 1045.0,223.2 1043.0,223.6 1041.0,223.8 1039.0,224.1 1037.0,224.3 1035.0,224.4 1033.0,224.4 1031.0,224.3 1029.0,224.1 1027.0,223.8 1025.0,223.4 1023.0,222.9 1022.5,222.8 1021.0,222.3 1019.0,221.6 1017.2,220.8 1017.0,220.7 1015.0,219.7 1013.5,218.8 1013.0,218.5 1011.0,217.2 1010.5,216.8 1009.0,215.6 1008.0,214.8 1007.0,213.8 1006.0,212.8 1005.0,211.8 1004.2,210.8 1003.0,209.3 1002.6,208.8 1001.2,206.8 1001.0,206.4 1000.1,204.8 999.0,202.8 999.0,202.8 998.1,200.8 997.4,198.8 997.0,197.7 996.7,196.8 996.2,194.8 995.8,192.8 995.5,190.8 995.2,188.8 995.1,186.8 995.1,184.8 995.1,182.8 995.3,180.8 995.6,178.8 995.9,176.8 996.3,174.8 996.9,172.8 997.0,172.4 997.5,170.8 998.3,168.8 999.0,167.1 999.1,166.8 1000.0,164.8 1001.0,162.8 1001.0,162.8 1002.0,160.8 1003.0,159.0 1003.1,158.8 1004.3,156.8ZM625.5,180.8 627.0,180.4 629.0,180.0 631.0,179.6 633.0,179.4 635.0,179.2 637.0,179.1 639.0,179.0 641.0,179.0 643.0,179.1 645.0,179.3 647.0,179.5 649.0,179.7 651.0,180.1 653.0,180.5 654.3,180.8 655.0,181.0 657.0,181.5 659.0,182.1 661.0,182.7 661.4,182.8 663.0,183.3 665.0,184.0 667.0,184.8 667.0,184.8 669.0,185.6 671.0,186.4 671.8,186.8 673.0,187.4 675.0,188.3 675.9,188.8 677.0,189.4 679.0,190.5 679.6,190.8 681.0,191.7 682.8,192.8 683.0,192.9 685.0,194.3 685.8,194.8 687.0,195.7 688.5,196.8 689.0,197.2 690.9,198.8 691.0,198.8 693.0,200.6 693.2,200.8 695.0,202.5 695.3,202.8 697.0,204.6 697.2,204.8 698.8,206.8 699.0,207.0 700.3,208.8 701.0,209.8 701.6,210.8 702.8,212.8 703.0,213.2 703.9,214.8 704.8,216.8 705.0,217.4 705.6,218.8 706.2,220.8 706.8,222.8 707.0,223.6 707.3,224.8 707.6,226.8 707.9,228.8 708.0,230.8 708.1,232.8 708.1,234.8 708.0,236.8 707.8,238.8 707.5,240.8 707.1,242.8 707.0,243.1 706.6,244.8 706.1,246.8 705.4,248.8 705.0,250.0 704.7,250.8 703.9,252.8 703.0,254.8 703.0,254.9 702.1,256.8 701.0,258.8 701.0,258.9 699.9,260.8 699.0,262.4 698.7,262.8 697.5,264.8 697.0,265.6 696.2,266.8 695.0,268.4 694.7,268.8 693.1,270.8 693.0,271.0 691.4,272.8 691.0,273.2 689.4,274.8 689.0,275.2 687.2,276.8 687.0,277.0 685.0,278.6 684.8,278.8 683.0,280.1 682.0,280.8 681.0,281.5 679.0,282.7 678.8,282.8 677.0,283.8 675.1,284.8 675.0,284.8 673.0,285.8 671.0,286.6 670.6,286.8 669.0,287.4 667.0,288.1 665.0,288.8 664.9,288.8 663.0,289.4 661.0,289.9 659.0,290.3 657.0,290.7 656.2,290.8 655.0,291.0 653.0,291.3 651.0,291.5 649.0,291.7 647.0,292.0 645.0,292.3 643.0,292.7 642.5,292.8 641.0,293.2 639.0,293.7 637.0,294.5 636.2,294.8 635.0,295.4 633.0,296.5 632.5,296.8 631.0,297.8 629.8,298.8 629.0,299.5 627.7,300.8 627.0,301.6 626.0,302.8 625.0,304.1 624.5,304.8 623.0,306.8 623.0,306.9 621.6,308.8 621.0,309.6 620.1,310.8 619.0,312.1 618.5,312.8 617.0,314.5 616.8,314.8 615.0,316.8 615.0,316.8 613.2,318.8 613.0,319.0 611.2,320.8 611.0,321.0 609.0,322.8 609.0,322.8 607.0,324.6 606.7,324.8 605.0,326.2 604.2,326.8 603.0,327.7 601.5,328.8 601.0,329.2 599.0,330.5 598.6,330.8 597.0,331.8 595.1,332.8 595.0,332.9 593.0,333.9 591.0,334.7 590.8,334.8 589.0,335.5 587.0,336.1 585.0,336.7 584.5,336.8 583.0,337.1 581.0,337.5 579.0,337.8 577.0,337.9 575.0,338.0 573.0,337.9 571.0,337.8 569.0,337.6 567.0,337.2 565.2,336.8 565.0,336.8 563.0,336.2 561.0,335.5 559.2,334.8 559.0,334.7 557.0,333.8 555.1,332.8 555.0,332.7 553.0,331.5 551.9,330.8 551.0,330.2 549.2,328.8 549.0,328.6 547.0,326.9 546.9,326.8 545.0,325.0 544.8,324.8 543.0,323.0 542.8,322.8 541.0,320.9 540.9,320.8 539.1,318.8 539.0,318.7 537.4,316.8 537.0,316.3 535.9,314.8 535.0,313.6 534.4,312.8 533.0,310.8 533.0,310.7 531.8,308.8 531.0,307.5 530.6,306.8 529.5,304.8 529.0,303.8 528.5,302.8 527.6,300.8 527.0,299.4 526.7,298.8 526.0,296.8 525.3,294.8 525.0,293.9 524.7,292.8 524.1,290.8 523.6,288.8 523.2,286.8 523.0,285.5 522.9,284.8 522.6,282.8 522.4,280.8 522.3,278.8 522.2,276.8 522.3,274.8 522.4,272.8 522.5,270.8 522.8,268.8 523.0,267.4 523.1,266.8 523.5,264.8 524.0,262.8 524.6,260.8 525.0,259.6 525.3,258.8 526.1,256.8 527.0,254.8 527.0,254.8 528.0,252.8 529.0,251.2 529.2,250.8 530.6,248.8 531.0,248.2 532.1,246.8 533.0,245.7 533.8,244.8 535.0,243.4 535.6,242.8 537.0,241.3 537.5,240.8 539.0,239.3 539.6,238.8 541.0,237.4 541.7,236.8 543.0,235.7 544.1,234.8 545.0,234.0 546.6,232.8 547.0,232.4 549.0,230.9 549.1,230.8 551.0,229.3 551.7,228.8 553.0,227.8 554.3,226.8 555.0,226.3 557.0,224.8 557.1,224.8 559.0,223.4 560.0,222.8 561.0,222.1 563.0,220.9 563.1,220.8 565.0,219.7 566.7,218.8 567.0,218.6 569.0,217.5 570.3,216.8 571.0,216.4 573.0,215.3 573.9,214.8 575.0,214.2 577.0,213.0 577.3,212.8 579.0,211.7 580.2,210.8 581.0,210.2 583.0,208.8 583.0,208.8 585.0,207.2 585.5,206.8 587.0,205.6 588.0,204.8 589.0,204.0 590.6,202.8 591.0,202.5 593.0,200.9 593.2,200.8 595.0,199.4 595.8,198.8 597.0,197.9 598.5,196.8 599.0,196.4 601.0,194.9 601.1,194.8 603.0,193.3 603.7,192.8 605.0,191.7 606.2,190.8 607.0,190.1 608.7,188.8 609.0,188.6 611.0,187.1 611.5,186.8 613.0,185.9 615.0,184.8 615.0,184.8 617.0,183.8 619.0,182.9 619.3,182.8 621.0,182.2 623.0,181.5 625.0,180.9 625.5,180.8ZM956.4,458.8 957.0,458.6 959.0,458.2 961.0,458.0 963.0,458.0 965.0,458.1 967.0,458.4 968.6,458.8 969.0,458.9 971.0,459.5 973.0,460.4 973.9,460.8 975.0,461.4 977.0,462.6 977.2,462.8 979.0,464.1 979.8,464.8 981.0,465.8 982.1,466.8 983.0,467.6 984.2,468.8 985.0,469.6 986.0,470.8 987.0,471.9 987.7,472.8 989.0,474.5 989.2,474.8 990.6,476.8 991.0,477.5 991.8,478.8 992.8,480.8 993.0,481.1 993.8,482.8 994.6,484.8 995.0,485.7 995.4,486.8 996.1,488.8 996.7,490.8 997.0,491.8 997.3,492.8 997.8,494.8 998.2,496.8 998.5,498.8 998.8,500.8 999.0,502.6 999.0,502.8 999.2,504.8 999.4,506.8 999.4,508.8 999.4,510.8 999.3,512.8 999.1,514.8 999.0,515.5 998.8,516.8 998.3,518.8 997.6,520.8 997.0,522.2 996.7,522.8 995.6,524.8 995.0,525.7 994.2,526.8 993.0,528.3 992.6,528.8 991.0,530.4 990.5,530.8 989.0,532.0 987.8,532.8 987.0,533.3 985.0,534.3 983.8,534.8 983.0,535.1 981.0,535.7 979.0,536.1 977.0,536.3 975.0,536.3 973.0,536.2 971.0,535.9 969.0,535.5 967.0,535.0 966.1,534.8 965.0,534.5 963.0,533.9 961.0,533.2 960.0,532.8 959.0,532.4 957.0,531.5 955.7,530.8 955.0,530.4 953.0,529.1 952.5,528.8 951.0,527.6 950.1,526.8 949.0,525.7 948.2,524.8 947.0,523.4 946.5,522.8 945.2,520.8 945.0,520.5 944.0,518.8 943.0,516.9 943.0,516.8 942.0,514.8 941.2,512.8 941.0,512.3 940.4,510.8 939.8,508.8 939.2,506.8 939.0,506.0 938.7,504.8 938.3,502.8 938.0,500.8 937.7,498.8 937.5,496.8 937.4,494.8 937.4,492.8 937.4,490.8 937.5,488.8 937.6,486.8 937.9,484.8 938.2,482.8 938.6,480.8 939.0,479.2 939.1,478.8 939.7,476.8 940.5,474.8 941.0,473.6 941.3,472.8 942.3,470.8 943.0,469.4 943.3,468.8 944.6,466.8 945.0,466.3 946.3,464.8 947.0,464.1 948.5,462.8 949.0,462.4 951.0,461.0 951.4,460.8 953.0,460.0 955.0,459.2 956.4,458.8ZM574.8,592.8 575.0,592.7 577.0,592.4 579.0,592.7 579.4,592.8 581.0,593.7 582.3,594.8 583.0,595.8 583.5,596.8 583.9,598.8 583.7,600.8 583.0,602.7 583.0,602.8 581.1,604.8 581.0,604.9 579.0,605.7 577.0,606.0 575.0,605.6 573.2,604.8 573.0,604.6 571.4,602.8 571.0,602.1 570.5,600.8 570.4,598.8 570.8,596.8 571.0,596.3 572.0,594.8 573.0,593.9 574.8,592.8ZM633.6,654.8 635.0,654.7 637.0,654.6 639.0,654.6 641.0,654.7 641.6,654.8 643.0,654.9 645.0,655.2 647.0,655.5 649.0,656.0 651.0,656.5 652.1,656.8 653.0,657.1 655.0,657.7 657.0,658.3 658.4,658.8 659.0,659.0 661.0,659.7 663.0,660.4 664.1,660.8 665.0,661.1 667.0,661.9 669.0,662.6 669.4,662.8 671.0,663.4 673.0,664.3 674.2,664.8 675.0,665.1 677.0,666.0 678.8,666.8 679.0,666.9 681.0,667.8 683.0,668.7 683.3,668.8 685.0,669.6 687.0,670.5 687.6,670.8 689.0,671.5 691.0,672.5 691.6,672.8 693.0,673.5 695.0,674.7 695.2,674.8 697.0,675.9 698.4,676.8 699.0,677.2 701.0,678.7 701.2,678.8 703.0,680.2 703.7,680.8 705.0,681.9 706.0,682.8 707.0,683.7 708.1,684.8 709.0,685.7 710.0,686.8 711.0,687.9 711.8,688.8 713.0,690.3 713.4,690.8 715.0,692.7 715.1,692.8 716.7,694.8 717.0,695.1 718.4,696.8 719.0,697.6 719.9,698.8 721.0,700.4 721.3,700.8 722.6,702.8 723.0,703.5 723.8,704.8 724.8,706.8 725.0,707.1 725.8,708.8 726.7,710.8 727.0,711.6 727.5,712.8 728.2,714.8 728.7,716.8 729.0,717.9 729.2,718.8 729.6,720.8 729.9,722.8 730.1,724.8 730.1,726.8 730.1,728.8 729.9,730.8 729.5,732.8 729.0,734.7 729.0,734.8 728.2,736.8 727.2,738.8 727.0,739.2 725.9,740.8 725.0,741.9 724.2,742.8 723.0,743.9 721.9,744.8 721.0,745.5 719.0,746.7 718.8,746.8 717.0,747.7 715.0,748.6 714.4,748.8 713.0,749.3 711.0,749.8 709.0,750.3 707.0,750.6 706.2,750.8 705.0,751.0 703.0,751.4 701.0,751.8 699.0,752.1 697.0,752.4 695.0,752.7 694.3,752.8 693.0,753.0 691.0,753.2 689.0,753.3 687.0,753.5 685.0,753.6 683.0,753.9 681.0,754.3 679.1,754.8 679.0,754.8 677.0,755.5 675.0,756.3 674.0,756.8 673.0,757.3 671.0,758.5 670.5,758.8 669.0,759.9 668.0,760.8 667.0,761.7 666.0,762.8 665.0,764.0 664.4,764.8 663.1,766.8 663.0,767.0 662.0,768.8 661.2,770.8 661.0,771.7 660.7,772.8 660.2,774.8 659.8,776.8 659.2,778.8 659.0,779.5 658.6,780.8 657.9,782.8 657.1,784.8 657.0,785.0 656.2,786.8 655.3,788.8 655.0,789.3 654.2,790.8 653.1,792.8 653.0,793.0 651.9,794.8 651.0,796.2 650.6,796.8 649.2,798.8 649.0,799.0 647.5,800.8 647.0,801.4 645.6,802.8 645.0,803.4 643.3,804.8 643.0,805.1 641.0,806.5 640.6,806.8 639.0,807.8 637.1,808.8 637.0,808.9 635.0,809.7 633.0,810.5 632.0,810.8 631.0,811.1 629.0,811.5 627.0,811.9 625.0,812.1 623.0,812.1 621.0,812.1 619.0,811.9 617.0,811.5 615.0,811.0 614.2,810.8 613.0,810.4 611.0,809.6 609.2,808.8 609.0,808.7 607.0,807.5 605.9,806.8 605.0,806.1 603.4,804.8 603.0,804.5 601.3,802.8 601.0,802.5 599.5,800.8 599.0,800.1 598.1,798.8 597.0,797.1 596.8,796.8 595.8,794.8 595.0,793.0 594.9,792.8 594.2,790.8 593.7,788.8 593.2,786.8 593.0,785.3 592.9,784.8 592.7,782.8 592.5,780.8 592.5,778.8 592.4,776.8 592.5,774.8 592.6,772.8 592.8,770.8 593.0,769.5 593.1,768.8 593.4,766.8 593.8,764.8 594.2,762.8 594.7,760.8 595.0,759.6 595.2,758.8 595.6,756.8 595.9,754.8 596.1,752.8 596.3,750.8 596.4,748.8 596.5,746.8 596.5,744.8 596.5,742.8 596.4,740.8 596.2,738.8 596.0,736.8 595.7,734.8 595.4,732.8 595.1,730.8 595.0,730.5 594.7,728.8 594.3,726.8 593.9,724.8 593.4,722.8 593.0,720.9 593.0,720.8 592.4,718.8 591.9,716.8 591.3,714.8 591.0,713.4 590.9,712.8 590.4,710.8 590.1,708.8 589.8,706.8 589.6,704.8 589.4,702.8 589.3,700.8 589.3,698.8 589.4,696.8 589.6,694.8 589.8,692.8 590.2,690.8 590.7,688.8 591.0,687.6 591.2,686.8 591.9,684.8 592.7,682.8 593.0,682.1 593.6,680.8 594.6,678.8 595.0,678.1 595.8,676.8 597.0,674.9 597.1,674.8 598.6,672.8 599.0,672.3 600.2,670.8 601.0,670.0 602.2,668.8 603.0,668.0 604.3,666.8 605.0,666.2 606.9,664.8 607.0,664.7 609.0,663.3 609.8,662.8 611.0,662.0 613.0,660.9 613.2,660.8 615.0,659.9 617.0,659.0 617.4,658.8 619.0,658.1 621.0,657.4 623.0,656.8 623.0,656.8 625.0,656.2 627.0,655.8 629.0,655.4 631.0,655.1 633.0,654.8 633.6,654.8ZM1062.3,742.8 1063.0,742.7 1065.0,742.3 1067.0,742.0 1069.0,741.8 1071.0,741.6 1073.0,741.5 1075.0,741.4 1077.0,741.4 1079.0,741.4 1081.0,741.5 1083.0,741.7 1085.0,741.9 1087.0,742.2 1089.0,742.5 1090.9,742.8 1091.0,742.8 1093.0,743.2 1095.0,743.7 1097.0,744.2 1099.0,744.7 1099.2,744.8 1101.0,745.3 1103.0,746.0 1105.0,746.7 1105.2,746.8 1107.0,747.5 1109.0,748.3 1110.2,748.8 1111.0,749.1 1113.0,750.1 1114.6,750.8 1115.0,751.0 1117.0,752.0 1118.5,752.8 1119.0,753.1 1121.0,754.2 1122.1,754.8 1123.0,755.3 1125.0,756.5 1125.4,756.8 1127.0,757.8 1128.5,758.8 1129.0,759.2 1131.0,760.7 1131.1,760.8 1133.0,762.4 1133.4,762.8 1135.0,764.3 1135.5,764.8 1137.0,766.4 1137.4,766.8 1139.0,768.7 1139.1,768.8 1140.6,770.8 1141.0,771.4 1142.0,772.8 1143.0,774.5 1143.2,774.8 1144.3,776.8 1145.0,778.1 1145.3,778.8 1146.2,780.8 1147.0,782.7 1147.0,782.8 1147.8,784.8 1148.4,786.8 1148.9,788.8 1149.0,789.3 1149.3,790.8 1149.7,792.8 1150.0,794.8 1150.2,796.8 1150.3,798.8 1150.3,800.8 1150.3,802.8 1150.2,804.8 1150.1,806.8 1149.8,808.8 1149.5,810.8 1149.1,812.8 1149.0,813.4 1148.7,814.8 1148.1,816.8 1147.5,818.8 1147.0,820.3 1146.8,820.8 1146.1,822.8 1145.2,824.8 1145.0,825.2 1144.2,826.8 1143.2,828.8 1143.0,829.1 1142.1,830.8 1141.0,832.6 1140.9,832.8 1139.6,834.8 1139.0,835.7 1138.2,836.8 1137.0,838.5 1136.8,838.8 1135.3,840.8 1135.0,841.2 1133.7,842.8 1133.0,843.6 1132.0,844.8 1131.0,845.9 1130.2,846.8 1129.0,848.0 1128.2,848.8 1127.0,850.0 1126.1,850.8 1125.0,851.8 1123.9,852.8 1123.0,853.6 1121.5,854.8 1121.0,855.2 1119.0,856.7 1118.9,856.8 1117.0,858.2 1116.1,858.8 1115.0,859.6 1113.2,860.8 1113.0,860.9 1111.0,862.2 1110.0,862.8 1109.0,863.4 1107.0,864.5 1106.5,864.8 1105.0,865.6 1103.0,866.6 1102.6,866.8 1101.0,867.6 1099.0,868.6 1098.6,868.8 1097.0,869.6 1095.0,870.6 1094.7,870.8 1093.0,871.7 1091.3,872.8 1091.0,873.0 1089.0,874.3 1088.3,874.8 1087.0,875.8 1085.9,876.8 1085.0,877.5 1083.7,878.8 1083.0,879.4 1081.7,880.8 1081.0,880.8 1079.0,880.8 1077.0,880.8 1075.0,880.8 1073.0,880.8 1071.0,880.8 1069.0,880.8 1067.0,880.8 1065.0,880.8 1063.0,880.8 1061.0,880.8 1059.0,880.8 1057.0,880.8 1055.0,880.8 1053.0,880.8 1051.0,880.8 1049.0,880.8 1047.0,880.8 1045.0,880.8 1043.0,880.8 1041.0,880.8 1039.0,880.8 1037.0,880.8 1035.0,880.8 1033.0,880.8 1031.0,880.8 1029.0,880.8 1027.0,880.8 1025.0,880.8 1023.0,880.8 1021.0,880.8 1019.0,880.8 1017.0,880.8 1015.0,880.8 1013.0,880.8 1011.0,880.8 1009.0,880.8 1007.0,880.8 1005.0,880.8 1003.0,880.8 1001.0,880.8 999.0,880.8 997.0,880.8 995.0,880.8 993.0,880.8 991.0,880.8 989.0,880.8 987.0,880.8 985.0,880.8 983.0,880.8 981.0,880.8 979.0,880.8 977.0,880.8 975.0,880.8 973.0,880.8 971.0,880.8 969.0,880.8 967.0,880.8 965.0,880.8 963.0,880.8 961.0,880.8 959.0,880.8 957.0,880.8 955.0,880.8 953.0,880.8 951.0,880.8 949.0,880.8 947.0,880.8 945.0,880.8 943.0,880.8 941.0,880.8 939.0,880.8 937.0,880.8 935.0,880.8 933.0,880.8 931.0,880.8 929.8,880.8 930.0,878.8 930.3,876.8 930.7,874.8 931.0,873.2 931.1,872.8 931.5,870.8 931.9,868.8 932.4,866.8 933.0,864.8 933.0,864.6 933.5,862.8 934.1,860.8 934.7,858.8 935.0,858.1 935.4,856.8 936.1,854.8 936.9,852.8 937.0,852.5 937.7,850.8 938.5,848.8 939.0,847.6 939.4,846.8 940.2,844.8 941.0,843.2 941.2,842.8 942.1,840.8 943.0,839.0 943.1,838.8 944.1,836.8 945.0,835.1 945.2,834.8 946.3,832.8 947.0,831.6 947.5,830.8 948.7,828.8 949.0,828.4 950.1,826.8 951.0,825.5 951.5,824.8 953.0,822.9 953.1,822.8 954.7,820.8 955.0,820.4 956.5,818.8 957.0,818.2 958.4,816.8 959.0,816.2 960.5,814.8 961.0,814.3 962.8,812.8 963.0,812.6 965.0,811.1 965.3,810.8 967.0,809.6 968.2,808.8 969.0,808.3 971.0,807.1 971.6,806.8 973.0,806.0 975.0,805.1 975.7,804.8 977.0,804.2 979.0,803.3 980.2,802.8 981.0,802.4 983.0,801.4 984.2,800.8 985.0,800.4 987.0,799.3 987.9,798.8 989.0,798.1 991.0,797.0 991.4,796.8 993.0,795.8 994.8,794.8 995.0,794.7 997.0,793.5 998.1,792.8 999.0,792.2 1001.0,790.9 1001.1,790.8 1003.0,789.4 1003.8,788.8 1005.0,787.8 1006.1,786.8 1007.0,785.9 1008.1,784.8 1009.0,783.9 1010.1,782.8 1011.0,781.8 1011.9,780.8 1013.0,779.5 1013.7,778.8 1015.0,777.3 1015.5,776.8 1017.0,775.2 1017.4,774.8 1019.0,773.2 1019.4,772.8 1021.0,771.2 1021.4,770.8 1023.0,769.3 1023.5,768.8 1025.0,767.3 1025.5,766.8 1027.0,765.2 1027.4,764.8 1029.0,763.2 1029.3,762.8 1031.0,761.2 1031.4,760.8 1033.0,759.3 1033.5,758.8 1035.0,757.4 1035.6,756.8 1037.0,755.6 1037.9,754.8 1039.0,753.9 1040.3,752.8 1041.0,752.2 1043.0,750.8 1043.0,750.8 1045.0,749.5 1046.2,748.8 1047.0,748.3 1049.0,747.3 1050.1,746.8 1051.0,746.4 1053.0,745.5 1055.0,744.8 1055.0,744.8 1057.0,744.2 1059.0,743.6 1061.0,743.1 1062.3,742.8Z"/>
<path fill="#b9f1df" fill-rule="evenodd" d="M1034.5,158.8 1035.0,157.9 1035.6,156.8 1037.0,156.8 1039.0,156.8 1041.0,156.8 1043.0,156.8 1045.0,156.8 1047.0,156.8 1049.0,156.8 1051.0,156.8 1053.0,156.8 1055.0,156.8 1057.0,156.8 1059.0,156.8 1061.0,156.8 1063.0,156.8 1065.0,156.8 1067.0,156.8 1069.0,156.8 1071.0,156.8 1073.0,156.8 1075.0,156.8 1077.0,156.8 1079.0,156.8 1081.0,156.8 1083.0,156.8 1085.0,156.8 1087.0,156.8 1089.0,156.8 1091.0,156.8 1093.0,156.8 1095.0,156.8 1097.0,156.8 1099.0,156.8 1101.0,156.8 1103.0,156.8 1105.0,156.8 1107.0,156.8 1109.0,156.8 1111.0,156.8 1113.0,156.8 1115.0,156.8 1117.0,156.8 1119.0,156.8 1121.0,156.8 1123.0,156.8 1125.0,156.8 1127.0,156.8 1129.0,156.8 1131.0,156.8 1133.0,156.8 1135.0,156.8 1137.0,156.8 1139.0,156.8 1141.0,156.8 1143.0,156.8 1145.0,156.8 1147.0,156.8 1149.0,156.8 1151.0,156.8 1153.0,156.8 1155.0,156.8 1157.0,156.8 1159.0,156.8 1161.0,156.8 1163.0,156.8 1165.0,156.8 1167.0,156.8 1167.0,158.8 1167.0,160.8 1167.0,162.8 1167.0,164.8 1167.0,166.8 1167.0,168.8 1167.0,170.8 1167.0,172.8 1167.0,174.8 1167.0,176.8 1167.0,178.8 1167.0,180.8 1167.0,182.8 1167.0,184.8 1167.0,186.8 1167.0,188.8 1167.0,190.8 1167.0,192.8 1167.0,194.8 1167.0,196.8 1167.0,198.8 1167.0,200.8 1167.0,202.8 1167.0,204.8 1167.0,206.8 1167.0,208.8 1167.0,210.8 1167.0,212.8 1167.0,214.3 1165.0,214.3 1163.0,214.3 1161.0,214.3 1159.0,214.2 1157.0,214.1 1155.0,213.9 1153.0,213.7 1151.0,213.4 1149.0,213.1 1147.2,212.8 1147.0,212.8 1145.0,212.4 1143.0,212.0 1141.0,211.6 1139.0,211.1 1137.8,210.8 1137.0,210.6 1135.0,210.0 1133.0,209.5 1131.0,208.8 1130.9,208.8 1129.0,208.1 1127.0,207.5 1125.0,206.9 1124.8,206.8 1123.0,206.3 1121.0,205.7 1119.0,205.2 1117.7,204.8 1117.0,204.6 1115.0,204.1 1113.0,203.6 1111.0,203.1 1109.6,202.8 1109.0,202.6 1107.0,202.2 1105.0,201.7 1103.0,201.3 1101.0,200.8 1101.0,200.8 1099.0,200.4 1097.0,199.9 1095.0,199.5 1093.0,199.1 1091.5,198.8 1091.0,198.7 1089.0,198.3 1087.0,197.9 1085.0,197.6 1083.0,197.3 1081.0,197.0 1079.0,196.8 1078.6,196.8 1077.0,196.6 1075.0,196.5 1073.0,196.4 1071.0,196.3 1069.0,196.1 1067.0,196.0 1065.0,195.9 1063.0,195.8 1061.0,195.7 1059.0,195.7 1057.0,195.7 1055.0,195.7 1053.0,195.6 1051.0,195.6 1049.0,195.5 1047.0,195.4 1045.0,195.3 1043.0,195.1 1041.0,194.8 1041.0,194.8 1039.0,194.3 1037.0,193.6 1035.3,192.8 1035.0,192.6 1033.0,191.3 1032.3,190.8 1031.0,189.6 1030.3,188.8 1029.0,187.0 1028.9,186.8 1027.9,184.8 1027.3,182.8 1027.0,181.3 1026.9,180.8 1026.8,178.8 1026.9,176.8 1027.0,176.3 1027.2,174.8 1027.8,172.8 1028.5,170.8 1029.0,169.5 1029.3,168.8 1030.3,166.8 1031.0,165.4 1031.3,164.8 1032.3,162.8 1033.0,161.5 1033.4,160.8 1034.5,158.8ZM636.4,190.8 637.0,190.7 639.0,190.4 641.0,190.2 643.0,190.1 645.0,190.1 647.0,190.1 649.0,190.3 651.0,190.5 653.0,190.8 653.1,190.8 655.0,191.2 657.0,191.6 659.0,192.2 661.0,192.7 661.2,192.8 663.0,193.4 665.0,194.1 666.7,194.8 667.0,194.9 669.0,195.8 671.0,196.8 671.1,196.8 673.0,197.8 674.7,198.8 675.0,199.0 677.0,200.2 677.8,200.8 679.0,201.6 680.6,202.8 681.0,203.1 683.0,204.8 683.0,204.8 685.0,206.6 685.2,206.8 687.0,208.6 687.2,208.8 689.0,210.8 689.0,210.8 690.6,212.8 691.0,213.4 692.0,214.8 693.0,216.5 693.2,216.8 694.3,218.8 695.0,220.4 695.2,220.8 696.0,222.8 696.6,224.8 697.0,226.4 697.1,226.8 697.5,228.8 697.8,230.8 698.0,232.8 698.0,234.8 698.0,236.8 697.9,238.8 697.6,240.8 697.3,242.8 697.0,244.1 696.9,244.8 696.4,246.8 695.7,248.8 695.0,250.8 695.0,250.9 694.3,252.8 693.4,254.8 693.0,255.6 692.4,256.8 691.4,258.8 691.0,259.5 690.2,260.8 689.0,262.8 689.0,262.8 687.6,264.8 687.0,265.5 686.0,266.8 685.0,267.9 684.2,268.8 683.0,270.0 682.2,270.8 681.0,271.8 679.9,272.8 679.0,273.5 677.2,274.8 677.0,274.9 675.0,276.2 674.1,276.8 673.0,277.4 671.0,278.5 670.4,278.8 669.0,279.5 667.0,280.4 665.9,280.8 665.0,281.1 663.0,281.8 661.0,282.4 659.4,282.8 659.0,282.9 657.0,283.3 655.0,283.7 653.0,283.9 651.0,284.1 649.0,284.3 647.0,284.5 645.0,284.8 645.0,284.8 643.0,285.1 641.0,285.4 639.0,285.8 637.0,286.2 635.0,286.7 634.7,286.8 633.0,287.3 631.0,288.0 629.1,288.8 629.0,288.8 627.0,289.8 625.2,290.8 625.0,290.9 623.0,292.3 622.4,292.8 621.0,294.0 620.2,294.8 619.0,296.2 618.5,296.8 617.1,298.8 617.0,298.9 615.6,300.8 615.0,301.7 614.1,302.8 613.0,304.3 612.6,304.8 611.1,306.8 611.0,306.9 609.4,308.8 609.0,309.3 607.6,310.8 607.0,311.4 605.6,312.8 605.0,313.4 603.5,314.8 603.0,315.2 601.0,316.8 601.0,316.8 599.0,318.3 598.2,318.8 597.0,319.6 595.0,320.7 594.9,320.8 593.0,321.8 591.0,322.7 590.9,322.8 589.0,323.6 587.0,324.3 585.5,324.8 585.0,324.9 583.0,325.4 581.0,325.7 579.0,325.9 577.0,326.0 575.0,326.0 573.0,325.8 571.0,325.5 569.0,325.0 568.2,324.8 567.0,324.4 565.0,323.7 563.1,322.8 563.0,322.8 561.0,321.7 559.5,320.8 559.0,320.5 557.0,319.2 556.4,318.8 555.0,317.8 553.7,316.8 553.0,316.2 551.4,314.8 551.0,314.5 549.3,312.8 549.0,312.5 547.4,310.8 547.0,310.3 545.7,308.8 545.0,307.9 544.2,306.8 543.0,305.0 542.9,304.8 541.6,302.8 541.0,301.7 540.5,300.8 539.6,298.8 539.0,297.5 538.7,296.8 538.0,294.8 537.3,292.8 537.0,291.6 536.8,290.8 536.4,288.8 536.0,286.8 535.8,284.8 535.6,282.8 535.6,280.8 535.7,278.8 535.8,276.8 536.1,274.8 536.5,272.8 537.0,270.8 537.0,270.8 537.6,268.8 538.4,266.8 539.0,265.5 539.3,264.8 540.4,262.8 541.0,261.8 541.7,260.8 543.0,259.0 543.2,258.8 544.9,256.8 545.0,256.7 546.9,254.8 547.0,254.7 549.0,252.9 549.1,252.8 551.0,251.3 551.6,250.8 553.0,249.7 554.2,248.8 555.0,248.2 556.9,246.8 557.0,246.7 559.0,245.3 559.7,244.8 561.0,243.9 562.7,242.8 563.0,242.6 565.0,241.4 566.0,240.8 567.0,240.2 569.0,239.1 569.7,238.8 571.0,238.1 573.0,237.1 573.5,236.8 575.0,236.0 577.0,234.8 577.1,234.8 579.0,233.5 579.9,232.8 581.0,231.9 582.4,230.8 583.0,230.3 584.7,228.8 585.0,228.5 586.8,226.8 587.0,226.6 588.9,224.8 589.0,224.7 590.8,222.8 591.0,222.6 592.8,220.8 593.0,220.6 594.8,218.8 595.0,218.6 596.9,216.8 597.0,216.7 599.0,214.8 599.0,214.8 601.0,213.0 601.2,212.8 603.0,211.1 603.3,210.8 605.0,209.3 605.5,208.8 607.0,207.5 607.8,206.8 609.0,205.8 610.2,204.8 611.0,204.1 612.6,202.8 613.0,202.5 615.0,200.8 615.0,200.8 617.0,199.3 617.7,198.8 619.0,197.9 620.7,196.8 621.0,196.6 623.0,195.5 624.4,194.8 625.0,194.5 627.0,193.6 629.0,192.8 629.0,192.8 631.0,192.1 633.0,191.5 635.0,191.1 636.4,190.8ZM959.0,472.8 959.0,472.8 961.0,472.0 963.0,471.6 965.0,471.4 967.0,471.5 969.0,471.9 971.0,472.4 971.9,472.8 973.0,473.2 975.0,474.3 975.8,474.8 977.0,475.6 978.5,476.8 979.0,477.2 980.6,478.8 981.0,479.2 982.3,480.8 983.0,481.7 983.7,482.8 985.0,484.8 985.0,484.8 986.0,486.8 986.9,488.8 987.0,489.0 987.6,490.8 988.2,492.8 988.7,494.8 989.0,496.7 989.0,496.8 989.2,498.8 989.3,500.8 989.3,502.8 989.1,504.8 989.0,505.4 988.8,506.8 988.3,508.8 987.7,510.8 987.0,512.7 986.9,512.8 985.9,514.8 985.0,516.3 984.6,516.8 983.0,518.7 982.9,518.8 981.0,520.3 980.2,520.8 979.0,521.5 977.0,522.2 975.0,522.6 973.1,522.8 973.0,522.8 971.0,522.9 969.8,522.8 969.0,522.8 967.0,522.5 965.0,522.0 963.0,521.3 961.8,520.8 961.0,520.4 959.0,519.3 958.3,518.8 957.0,517.9 955.7,516.8 955.0,516.2 953.7,514.8 953.0,514.0 952.1,512.8 951.0,511.3 950.7,510.8 949.6,508.8 949.0,507.5 948.7,506.8 948.0,504.8 947.4,502.8 947.0,500.8 947.0,500.8 946.7,498.8 946.6,496.8 946.6,494.8 946.8,492.8 947.0,491.4 947.1,490.8 947.5,488.8 948.1,486.8 948.8,484.8 949.0,484.4 949.8,482.8 950.9,480.8 951.0,480.6 952.2,478.8 953.0,477.8 953.9,476.8 955.0,475.6 955.9,474.8 957.0,474.0 959.0,472.8ZM631.7,660.8 633.0,660.6 635.0,660.4 637.0,660.3 639.0,660.3 641.0,660.3 643.0,660.5 645.0,660.7 645.4,660.8 647.0,661.1 649.0,661.4 651.0,661.9 653.0,662.3 654.8,662.8 655.0,662.8 657.0,663.4 659.0,663.9 661.0,664.6 661.7,664.8 663.0,665.2 665.0,665.9 667.0,666.7 667.2,666.8 669.0,667.5 671.0,668.4 671.8,668.8 673.0,669.4 675.0,670.4 675.8,670.8 677.0,671.4 679.0,672.6 679.4,672.8 681.0,673.7 682.8,674.8 683.0,674.9 685.0,676.1 686.2,676.8 687.0,677.3 689.0,678.4 689.6,678.8 691.0,679.6 692.9,680.8 693.0,680.8 695.0,682.1 695.9,682.8 697.0,683.6 698.5,684.8 699.0,685.2 700.7,686.8 701.0,687.1 702.7,688.8 703.0,689.2 704.4,690.8 705.0,691.6 706.0,692.8 707.0,694.2 707.4,694.8 708.8,696.8 709.0,697.0 710.2,698.8 711.0,700.2 711.4,700.8 712.5,702.8 713.0,703.7 713.6,704.8 714.6,706.8 715.0,707.7 715.5,708.8 716.3,710.8 717.0,712.8 717.0,712.8 717.5,714.8 717.9,716.8 718.1,718.8 718.1,720.8 717.9,722.8 717.6,724.8 717.1,726.8 717.0,727.0 716.3,728.8 715.2,730.8 715.0,731.1 713.7,732.8 713.0,733.6 711.8,734.8 711.0,735.5 709.3,736.8 709.0,737.0 707.0,738.2 706.0,738.8 705.0,739.3 703.0,740.2 701.4,740.8 701.0,741.0 699.0,741.7 697.0,742.3 695.1,742.8 695.0,742.8 693.0,743.4 691.0,743.9 689.0,744.4 687.4,744.8 687.0,744.9 685.0,745.4 683.0,745.8 681.0,746.1 679.0,746.5 677.8,746.8 677.0,747.0 675.0,747.5 673.0,748.1 671.0,748.6 670.5,748.8 669.0,749.3 667.0,750.0 665.0,750.8 665.0,750.8 663.0,751.8 661.1,752.8 661.0,752.8 659.0,754.2 658.2,754.8 657.0,755.8 655.7,756.8 655.0,757.5 653.5,758.8 653.0,759.3 651.4,760.8 651.0,761.2 649.4,762.8 649.0,763.3 647.7,764.8 647.0,765.7 646.1,766.8 645.0,768.4 644.7,768.8 643.3,770.8 643.0,771.2 641.7,772.8 641.0,773.8 640.2,774.8 639.0,776.3 638.5,776.8 637.0,778.6 636.8,778.8 635.0,780.3 634.3,780.8 633.0,781.6 631.0,782.5 629.7,782.8 629.0,783.0 627.0,783.1 625.0,782.9 624.7,782.8 623.0,782.3 621.0,781.2 620.5,780.8 619.0,779.5 618.3,778.8 617.0,777.1 616.8,776.8 615.7,774.8 615.0,773.1 614.9,772.8 614.2,770.8 613.6,768.8 613.0,766.9 613.0,766.8 612.5,764.8 612.0,762.8 611.4,760.8 611.0,759.2 610.9,758.8 610.4,756.8 609.8,754.8 609.3,752.8 609.0,751.5 608.8,750.8 608.3,748.8 607.8,746.8 607.2,744.8 607.0,744.2 606.6,742.8 606.0,740.8 605.3,738.8 605.0,737.7 604.7,736.8 604.1,734.8 603.5,732.8 603.0,731.0 602.9,730.8 602.4,728.8 601.8,726.8 601.3,724.8 601.0,723.7 600.8,722.8 600.2,720.8 599.7,718.8 599.1,716.8 599.0,716.3 598.6,714.8 598.0,712.8 597.6,710.8 597.2,708.8 597.0,706.9 597.0,706.8 596.8,704.8 596.7,702.8 596.6,700.8 596.7,698.8 596.8,696.8 597.0,695.4 597.1,694.8 597.4,692.8 597.8,690.8 598.4,688.8 599.0,687.0 599.1,686.8 599.9,684.8 600.8,682.8 601.0,682.4 601.9,680.8 603.0,678.9 603.1,678.8 604.5,676.8 605.0,676.2 606.1,674.8 607.0,673.8 608.0,672.8 609.0,671.8 610.1,670.8 611.0,670.0 612.6,668.8 613.0,668.5 615.0,667.1 615.5,666.8 617.0,665.9 619.0,664.8 619.1,664.8 621.0,663.9 623.0,663.1 623.8,662.8 625.0,662.4 627.0,661.8 629.0,661.3 631.0,660.9 631.7,660.8ZM1068.5,754.8 1069.0,754.7 1071.0,754.4 1073.0,754.1 1075.0,754.0 1077.0,753.9 1079.0,753.9 1081.0,754.0 1083.0,754.1 1085.0,754.4 1087.0,754.7 1087.7,754.8 1089.0,755.1 1091.0,755.5 1093.0,756.1 1095.0,756.7 1095.3,756.8 1097.0,757.4 1099.0,758.2 1100.5,758.8 1101.0,759.0 1103.0,760.0 1104.5,760.8 1105.0,761.0 1107.0,762.2 1108.0,762.8 1109.0,763.4 1111.0,764.8 1111.0,764.8 1113.0,766.3 1113.7,766.8 1115.0,767.9 1116.1,768.8 1117.0,769.6 1118.3,770.8 1119.0,771.5 1120.3,772.8 1121.0,773.5 1122.2,774.8 1123.0,775.7 1123.9,776.8 1125.0,778.2 1125.5,778.8 1126.8,780.8 1127.0,781.1 1128.0,782.8 1129.0,784.7 1129.0,784.8 1129.9,786.8 1130.7,788.8 1131.0,789.8 1131.3,790.8 1131.8,792.8 1132.2,794.8 1132.5,796.8 1132.7,798.8 1132.8,800.8 1132.8,802.8 1132.7,804.8 1132.5,806.8 1132.2,808.8 1131.8,810.8 1131.3,812.8 1131.0,813.9 1130.7,814.8 1130.1,816.8 1129.3,818.8 1129.0,819.6 1128.5,820.8 1127.6,822.8 1127.0,824.0 1126.6,824.8 1125.5,826.8 1125.0,827.6 1124.3,828.8 1123.0,830.7 1122.9,830.8 1121.5,832.8 1121.0,833.4 1119.9,834.8 1119.0,835.9 1118.2,836.8 1117.0,838.0 1116.3,838.8 1115.0,840.0 1114.1,840.8 1113.0,841.8 1111.8,842.8 1111.0,843.5 1109.3,844.8 1109.0,845.0 1107.0,846.5 1106.5,846.8 1105.0,847.8 1103.5,848.8 1103.0,849.1 1101.0,850.3 1100.2,850.8 1099.0,851.5 1097.0,852.6 1096.7,852.8 1095.0,853.7 1093.0,854.8 1092.9,854.8 1091.0,855.8 1089.0,856.8 1088.9,856.8 1087.0,857.8 1085.4,858.8 1085.0,859.0 1083.0,860.4 1082.5,860.8 1081.0,862.0 1080.1,862.8 1079.0,863.7 1077.9,864.8 1077.0,865.7 1076.0,866.8 1075.0,867.9 1074.3,868.8 1073.0,870.3 1072.6,870.8 1071.1,872.8 1071.0,872.9 1069.7,874.8 1069.0,875.8 1068.3,876.8 1067.0,878.8 1067.0,878.8 1065.8,880.8 1065.0,880.8 1063.0,880.8 1061.0,880.8 1059.0,880.8 1057.0,880.8 1055.0,880.8 1053.0,880.8 1051.0,880.8 1049.0,880.8 1047.0,880.8 1045.0,880.8 1043.0,880.8 1041.0,880.8 1039.0,880.8 1037.0,880.8 1035.0,880.8 1033.0,880.8 1031.0,880.8 1029.0,880.8 1027.0,880.8 1025.0,880.8 1023.0,880.8 1021.0,880.8 1019.0,880.8 1017.0,880.8 1015.0,880.8 1013.0,880.8 1011.0,880.8 1009.0,880.8 1007.0,880.8 1005.0,880.8 1003.0,880.8 1001.0,880.8 999.0,880.8 997.0,880.8 995.0,880.8 993.0,880.8 991.0,880.8 989.0,880.8 987.0,880.8 985.0,880.8 983.0,880.8 981.0,880.8 979.0,880.8 977.0,880.8 975.0,880.8 973.0,880.8 971.0,880.8 969.0,880.8 967.0,880.8 965.0,880.8 963.0,880.8 961.0,880.8 959.0,880.8 957.0,880.8 955.0,880.8 953.0,880.8 951.0,880.8 949.0,880.8 947.0,880.8 945.0,880.8 943.0,880.8 941.5,880.8 941.6,878.8 941.7,876.8 941.8,874.8 942.0,872.8 942.3,870.8 942.6,868.8 943.0,866.8 943.0,866.7 943.4,864.8 943.9,862.8 944.4,860.8 945.0,858.9 945.0,858.8 945.7,856.8 946.4,854.8 947.0,853.2 947.1,852.8 947.9,850.8 948.8,848.8 949.0,848.4 949.7,846.8 950.7,844.8 951.0,844.2 951.8,842.8 952.8,840.8 953.0,840.5 954.0,838.8 955.0,837.3 955.3,836.8 956.7,834.8 957.0,834.4 958.2,832.8 959.0,831.9 959.9,830.8 961.0,829.6 961.7,828.8 963.0,827.5 963.7,826.8 965.0,825.7 966.0,824.8 967.0,824.0 968.5,822.8 969.0,822.4 971.0,821.0 971.3,820.8 973.0,819.7 974.6,818.8 975.0,818.6 977.0,817.5 978.4,816.8 979.0,816.5 981.0,815.6 982.9,814.8 983.0,814.8 985.0,813.9 987.0,813.0 987.6,812.8 989.0,812.2 991.0,811.3 992.1,810.8 993.0,810.4 995.0,809.5 996.7,808.8 997.0,808.6 999.0,807.7 1000.9,806.8 1001.0,806.8 1003.0,805.8 1005.0,804.9 1005.1,804.8 1007.0,803.9 1009.0,803.0 1009.3,802.8 1011.0,802.0 1013.0,800.9 1013.3,800.8 1015.0,799.8 1016.8,798.8 1017.0,798.7 1019.0,797.3 1019.8,796.8 1021.0,795.9 1022.4,794.8 1023.0,794.3 1024.6,792.8 1025.0,792.4 1026.5,790.8 1027.0,790.1 1028.1,788.8 1029.0,787.6 1029.6,786.8 1031.0,785.0 1031.1,784.8 1032.7,782.8 1033.0,782.5 1034.4,780.8 1035.0,780.1 1036.1,778.8 1037.0,777.7 1037.8,776.8 1039.0,775.4 1039.6,774.8 1041.0,773.2 1041.3,772.8 1043.0,770.9 1043.1,770.8 1044.9,768.8 1045.0,768.7 1046.8,766.8 1047.0,766.6 1048.8,764.8 1049.0,764.6 1051.0,762.9 1051.1,762.8 1053.0,761.4 1053.8,760.8 1055.0,760.1 1057.0,758.9 1057.2,758.8 1059.0,757.9 1061.0,757.0 1061.6,756.8 1063.0,756.3 1065.0,755.7 1067.0,755.1 1068.5,754.8Z"/>
<path fill="#98f3ab" fill-rule="evenodd" d="M1064.3,156.8 1065.0,156.8 1067.0,156.8 1069.0,156.8 1071.0,156.8 1073.0,156.8 1075.0,156.8 1077.0,156.8 1079.0,156.8 1081.0,156.8 1083.0,156.8 1085.0,156.8 1087.0,156.8 1089.0,156.8 1091.0,156.8 1093.0,156.8 1095.0,156.8 1097.0,156.8 1099.0,156.8 1101.0,156.8 1103.0,156.8 1105.0,156.8 1107.0,156.8 1109.0,156.8 1111.0,156.8 1113.0,156.8 1115.0,156.8 1117.0,156.8 1119.0,156.8 1121.0,156.8 1123.0,156.8 1125.0,156.8 1127.0,156.8 1129.0,156.8 1131.0,156.8 1133.0,156.8 1135.0,156.8 1137.0,156.8 1139.0,156.8 1141.0,156.8 1143.0,156.8 1145.0,156.8 1147.0,156.8 1149.0,156.8 1151.0,156.8 1153.0,156.8 1155.0,156.8 1157.0,156.8 1159.0,156.8 1161.0,156.8 1163.0,156.8 1165.0,156.8 1167.0,156.8 1167.0,158.8 1167.0,160.8 1167.0,162.8 1167.0,164.8 1167.0,166.8 1167.0,168.8 1167.0,170.8 1167.0,172.8 1167.0,174.8 1167.0,176.8 1167.0,178.8 1167.0,180.8 1167.0,182.8 1167.0,184.8 1167.0,186.8 1167.0,188.8 1167.0,190.8 1167.0,192.8 1167.0,194.8 1167.0,196.8 1167.0,198.8 1167.0,200.8 1167.0,202.8 1167.0,202.9 1165.0,203.0 1163.0,203.1 1161.0,203.1 1159.0,203.1 1157.0,203.0 1155.0,202.9 1153.3,202.8 1153.0,202.8 1151.0,202.6 1149.0,202.4 1147.0,202.1 1145.0,201.8 1143.0,201.4 1141.0,201.0 1140.2,200.8 1139.0,200.5 1137.0,200.0 1135.0,199.5 1133.0,198.8 1132.8,198.8 1131.0,198.2 1129.0,197.5 1127.0,196.9 1126.7,196.8 1125.0,196.3 1123.0,195.7 1121.0,195.0 1120.2,194.8 1119.0,194.4 1117.0,193.8 1115.0,193.2 1113.9,192.8 1113.0,192.5 1111.0,191.9 1109.0,191.2 1107.8,190.8 1107.0,190.5 1105.0,189.8 1103.0,189.1 1102.2,188.8 1101.0,188.4 1099.0,187.6 1097.1,186.8 1097.0,186.8 1095.0,185.9 1093.0,185.1 1092.4,184.8 1091.0,184.1 1089.0,183.2 1088.2,182.8 1087.0,182.2 1085.0,181.1 1084.5,180.8 1083.0,179.9 1081.2,178.8 1081.0,178.7 1079.0,177.4 1078.2,176.8 1077.0,175.9 1075.6,174.8 1075.0,174.3 1073.4,172.8 1073.0,172.4 1071.4,170.8 1071.0,170.3 1069.8,168.8 1069.0,167.6 1068.4,166.8 1067.3,164.8 1067.0,164.1 1066.4,162.8 1065.6,160.8 1065.0,159.1 1064.9,158.8 1064.3,156.8ZM636.8,200.8 637.0,200.7 639.0,200.3 641.0,200.0 643.0,199.7 645.0,199.6 647.0,199.6 649.0,199.7 651.0,199.9 653.0,200.1 655.0,200.5 656.1,200.8 657.0,201.0 659.0,201.6 661.0,202.3 662.5,202.8 663.0,203.0 665.0,203.9 667.0,204.8 667.0,204.8 669.0,205.9 670.5,206.8 671.0,207.1 673.0,208.5 673.4,208.8 675.0,210.0 675.9,210.8 677.0,211.8 678.1,212.8 679.0,213.7 680.0,214.8 681.0,216.0 681.6,216.8 683.0,218.7 683.1,218.8 684.4,220.8 685.0,222.0 685.5,222.8 686.4,224.8 687.0,226.3 687.2,226.8 687.8,228.8 688.3,230.8 688.6,232.8 688.9,234.8 689.0,236.8 688.9,238.8 688.8,240.8 688.5,242.8 688.2,244.8 687.7,246.8 687.1,248.8 687.0,249.1 686.4,250.8 685.6,252.8 685.0,254.1 684.7,254.8 683.6,256.8 683.0,257.9 682.5,258.8 681.1,260.8 681.0,260.9 679.5,262.8 679.0,263.4 677.7,264.8 677.0,265.4 675.5,266.8 675.0,267.3 673.1,268.8 673.0,268.9 671.0,270.3 670.2,270.8 669.0,271.5 667.0,272.6 666.6,272.8 665.0,273.6 663.0,274.4 661.8,274.8 661.0,275.1 659.0,275.7 657.0,276.2 655.0,276.5 653.1,276.8 653.0,276.8 651.0,277.0 649.0,277.2 647.0,277.4 645.0,277.6 643.0,277.8 641.0,278.0 639.0,278.2 637.0,278.4 635.0,278.6 633.6,278.8 633.0,278.9 631.0,279.2 629.0,279.6 627.0,280.0 625.0,280.5 623.7,280.8 623.0,281.0 621.0,281.6 619.0,282.3 617.8,282.8 617.0,283.1 615.0,284.2 614.0,284.8 613.0,285.5 611.6,286.8 611.0,287.4 609.9,288.8 609.0,290.1 608.6,290.8 607.2,292.8 607.0,293.1 605.8,294.8 605.0,295.8 604.2,296.8 603.0,298.2 602.5,298.8 601.0,300.5 600.7,300.8 599.0,302.6 598.8,302.8 597.0,304.6 596.8,304.8 595.0,306.3 594.3,306.8 593.0,307.6 591.0,308.8 591.0,308.8 589.0,309.7 587.0,310.5 585.8,310.8 585.0,311.0 583.0,311.4 581.0,311.6 579.0,311.7 577.0,311.7 575.0,311.5 573.0,311.2 571.1,310.8 571.0,310.8 569.0,310.2 567.0,309.4 565.8,308.8 565.0,308.4 563.0,307.2 562.4,306.8 561.0,305.8 559.8,304.8 559.0,304.1 557.7,302.8 557.0,302.0 556.0,300.8 555.0,299.5 554.5,298.8 553.3,296.8 553.0,296.2 552.3,294.8 551.5,292.8 551.0,291.4 550.8,290.8 550.3,288.8 550.0,286.8 549.9,284.8 549.9,282.8 550.0,280.8 550.4,278.8 550.9,276.8 551.0,276.4 551.6,274.8 552.6,272.8 553.0,272.1 553.8,270.8 555.0,269.2 555.3,268.8 557.0,267.0 557.2,266.8 559.0,265.0 559.2,264.8 561.0,263.1 561.3,262.8 563.0,261.3 563.5,260.8 565.0,259.6 566.0,258.8 567.0,258.0 568.8,256.8 569.0,256.6 571.0,255.4 572.0,254.8 573.0,254.3 575.0,253.2 575.9,252.8 577.0,252.3 579.0,251.3 580.0,250.8 581.0,250.2 583.0,249.0 583.3,248.8 585.0,247.6 586.0,246.8 587.0,246.0 588.5,244.8 589.0,244.4 590.8,242.8 591.0,242.6 592.9,240.8 593.0,240.7 594.8,238.8 595.0,238.6 596.6,236.8 597.0,236.3 598.2,234.8 599.0,233.8 599.7,232.8 601.0,231.1 601.2,230.8 602.7,228.8 603.0,228.4 604.2,226.8 605.0,225.8 605.7,224.8 607.0,223.2 607.3,222.8 609.0,220.8 609.0,220.8 610.7,218.8 611.0,218.5 612.5,216.8 613.0,216.3 614.4,214.8 615.0,214.2 616.4,212.8 617.0,212.2 618.6,210.8 619.0,210.4 621.0,208.8 621.0,208.8 623.0,207.3 623.7,206.8 625.0,205.9 626.9,204.8 627.0,204.7 629.0,203.7 630.9,202.8 631.0,202.7 633.0,202.0 635.0,201.3 636.8,200.8ZM963.1,488.8 965.0,487.9 967.0,487.4 969.0,487.5 971.0,488.1 972.1,488.8 973.0,489.5 974.2,490.8 975.0,491.9 975.5,492.8 976.2,494.8 976.6,496.8 976.6,498.8 976.2,500.8 975.3,502.8 975.0,503.3 973.6,504.8 973.0,505.3 971.0,506.4 969.7,506.8 969.0,507.0 967.0,507.0 966.2,506.8 965.0,506.5 963.0,505.4 962.3,504.8 961.0,503.5 960.5,502.8 959.5,500.8 959.0,499.0 959.0,498.8 958.8,496.8 959.0,495.4 959.1,494.8 959.8,492.8 961.0,490.8 961.0,490.7 963.0,488.9 963.1,488.8ZM629.2,666.8 631.0,666.4 633.0,666.0 635.0,665.7 637.0,665.5 639.0,665.5 641.0,665.5 643.0,665.6 645.0,665.8 647.0,666.0 649.0,666.3 651.0,666.6 652.1,666.8 653.0,667.0 655.0,667.4 657.0,667.8 659.0,668.4 660.4,668.8 661.0,669.0 663.0,669.7 665.0,670.4 666.0,670.8 667.0,671.2 669.0,672.1 670.3,672.8 671.0,673.1 673.0,674.2 674.0,674.8 675.0,675.4 677.0,676.7 677.2,676.8 679.0,678.0 680.1,678.8 681.0,679.4 682.9,680.8 683.0,680.9 685.0,682.3 685.7,682.8 687.0,683.8 688.4,684.8 689.0,685.3 690.9,686.8 691.0,686.9 693.0,688.6 693.2,688.8 695.0,690.6 695.2,690.8 697.0,692.8 697.0,692.8 698.6,694.8 699.0,695.4 700.0,696.8 701.0,698.3 701.3,698.8 702.5,700.8 703.0,701.7 703.6,702.8 704.5,704.8 705.0,706.2 705.2,706.8 705.8,708.8 706.3,710.8 706.6,712.8 706.7,714.8 706.7,716.8 706.4,718.8 705.9,720.8 705.2,722.8 705.0,723.1 704.1,724.8 703.0,726.4 702.7,726.8 701.0,728.6 700.8,728.8 699.0,730.4 698.5,730.8 697.0,731.9 695.7,732.8 695.0,733.2 693.0,734.5 692.4,734.8 691.0,735.5 689.0,736.5 688.3,736.8 687.0,737.4 685.0,738.1 683.0,738.8 682.9,738.8 681.0,739.3 679.0,739.8 677.0,740.2 675.0,740.6 674.0,740.8 673.0,741.0 671.0,741.5 669.0,742.0 667.0,742.6 666.3,742.8 665.0,743.2 663.0,743.9 661.0,744.6 660.5,744.8 659.0,745.4 657.0,746.2 655.4,746.8 655.0,747.0 653.0,747.8 651.0,748.5 650.3,748.8 649.0,749.3 647.0,750.0 645.0,750.5 643.7,750.8 643.0,751.0 641.0,751.4 639.0,751.6 637.0,751.8 635.0,751.8 633.0,751.7 631.0,751.3 629.1,750.8 629.0,750.8 627.0,750.0 625.0,748.8 625.0,748.8 623.0,747.4 622.4,746.8 621.0,745.6 620.2,744.8 619.0,743.5 618.4,742.8 617.0,741.0 616.8,740.8 615.4,738.8 615.0,738.2 614.2,736.8 613.0,734.8 613.0,734.8 611.9,732.8 611.0,730.9 611.0,730.8 610.1,728.8 609.2,726.8 609.0,726.2 608.5,724.8 607.7,722.8 607.0,720.8 607.0,720.7 606.4,718.8 605.7,716.8 605.1,714.8 605.0,714.4 604.5,712.8 604.0,710.8 603.6,708.8 603.3,706.8 603.1,704.8 603.0,702.8 603.0,700.8 603.1,698.8 603.3,696.8 603.6,694.8 604.0,692.8 604.5,690.8 605.0,689.2 605.1,688.8 605.9,686.8 606.9,684.8 607.0,684.6 608.0,682.8 609.0,681.2 609.3,680.8 610.7,678.8 611.0,678.5 612.5,676.8 613.0,676.2 614.5,674.8 615.0,674.4 616.9,672.8 617.0,672.7 619.0,671.3 619.8,670.8 621.0,670.1 623.0,669.1 623.6,668.8 625.0,668.2 627.0,667.5 629.0,666.8 629.2,666.8ZM1074.0,768.8 1075.0,768.6 1077.0,768.5 1079.0,768.4 1081.0,768.5 1083.0,768.7 1083.5,768.8 1085.0,769.1 1087.0,769.5 1089.0,770.1 1090.8,770.8 1091.0,770.9 1093.0,771.8 1095.0,772.8 1095.0,772.8 1097.0,774.0 1098.2,774.8 1099.0,775.4 1100.8,776.8 1101.0,777.0 1102.9,778.8 1103.0,778.9 1104.7,780.8 1105.0,781.1 1106.3,782.8 1107.0,783.8 1107.7,784.8 1108.8,786.8 1109.0,787.1 1109.8,788.8 1110.6,790.8 1111.0,791.8 1111.3,792.8 1111.9,794.8 1112.3,796.8 1112.6,798.8 1112.8,800.8 1112.9,802.8 1112.9,804.8 1112.7,806.8 1112.5,808.8 1112.1,810.8 1111.5,812.8 1111.0,814.4 1110.9,814.8 1110.0,816.8 1109.0,818.8 1109.0,818.9 1107.9,820.8 1107.0,822.1 1106.5,822.8 1105.0,824.7 1104.9,824.8 1103.0,826.8 1103.0,826.8 1101.0,828.7 1100.9,828.8 1099.0,830.4 1098.5,830.8 1097.0,832.0 1096.0,832.8 1095.0,833.5 1093.2,834.8 1093.0,835.0 1091.0,836.3 1090.2,836.8 1089.0,837.5 1087.0,838.7 1086.8,838.8 1085.0,839.7 1083.0,840.7 1082.8,840.8 1081.0,841.6 1079.0,842.5 1078.5,842.8 1077.0,843.6 1075.3,844.8 1075.0,845.0 1073.0,846.8 1073.0,846.8 1071.1,848.8 1071.0,848.9 1069.5,850.8 1069.0,851.4 1068.0,852.8 1067.0,854.3 1066.7,854.8 1065.4,856.8 1065.0,857.5 1064.2,858.8 1063.0,860.8 1063.0,860.9 1061.9,862.8 1061.0,864.4 1060.8,864.8 1059.7,866.8 1059.0,868.1 1058.6,868.8 1057.6,870.8 1057.0,871.9 1056.6,872.8 1055.6,874.8 1055.0,875.9 1054.6,876.8 1053.6,878.8 1053.0,879.9 1052.6,880.8 1051.0,880.8 1049.0,880.8 1047.0,880.8 1045.0,880.8 1043.0,880.8 1041.0,880.8 1039.0,880.8 1037.0,880.8 1035.0,880.8 1033.0,880.8 1031.0,880.8 1029.0,880.8 1027.0,880.8 1025.0,880.8 1023.0,880.8 1021.0,880.8 1019.0,880.8 1017.0,880.8 1015.0,880.8 1013.0,880.8 1011.0,880.8 1009.0,880.8 1007.0,880.8 1005.0,880.8 1003.0,880.8 1001.0,880.8 999.0,880.8 997.0,880.8 995.0,880.8 993.0,880.8 991.0,880.8 989.0,880.8 987.0,880.8 985.0,880.8 983.0,880.8 981.0,880.8 979.0,880.8 977.0,880.8 975.0,880.8 973.0,880.8 971.0,880.8 969.0,880.8 967.0,880.8 965.0,880.8 963.0,880.8 961.0,880.8 959.0,880.8 957.0,880.8 955.0,880.8 953.0,880.8 952.7,880.8 952.6,878.8 952.5,876.8 952.5,874.8 952.6,872.8 952.7,870.8 952.9,868.8 953.0,868.3 953.2,866.8 953.6,864.8 954.0,862.8 954.5,860.8 955.0,859.2 955.1,858.8 955.8,856.8 956.5,854.8 957.0,853.5 957.3,852.8 958.1,850.8 959.0,849.0 959.1,848.8 960.1,846.8 961.0,845.2 961.2,844.8 962.5,842.8 963.0,842.1 963.9,840.8 965.0,839.4 965.5,838.8 967.0,837.0 967.2,836.8 969.0,834.9 969.1,834.8 971.0,833.1 971.3,832.8 973.0,831.4 973.8,830.8 975.0,829.9 976.6,828.8 977.0,828.6 979.0,827.3 980.0,826.8 981.0,826.3 983.0,825.2 984.0,824.8 985.0,824.3 987.0,823.5 988.7,822.8 989.0,822.7 991.0,821.9 993.0,821.3 994.4,820.8 995.0,820.6 997.0,820.0 999.0,819.3 1000.7,818.8 1001.0,818.7 1003.0,818.1 1005.0,817.5 1007.0,816.9 1007.4,816.8 1009.0,816.4 1011.0,815.8 1013.0,815.2 1014.3,814.8 1015.0,814.6 1017.0,813.9 1019.0,813.2 1020.1,812.8 1021.0,812.4 1023.0,811.6 1024.6,810.8 1025.0,810.6 1027.0,809.5 1028.1,808.8 1029.0,808.3 1031.0,806.9 1031.1,806.8 1033.0,805.4 1033.8,804.8 1035.0,803.8 1036.1,802.8 1037.0,802.0 1038.2,800.8 1039.0,799.9 1039.9,798.8 1041.0,797.3 1041.4,796.8 1042.7,794.8 1043.0,794.4 1044.1,792.8 1045.0,791.5 1045.5,790.8 1047.0,788.9 1047.1,788.8 1048.8,786.8 1049.0,786.6 1050.6,784.8 1051.0,784.4 1052.5,782.8 1053.0,782.3 1054.5,780.8 1055.0,780.3 1056.6,778.8 1057.0,778.4 1058.7,776.8 1059.0,776.5 1060.9,774.8 1061.0,774.7 1063.0,773.2 1063.6,772.8 1065.0,771.9 1067.0,770.9 1067.2,770.8 1069.0,770.1 1071.0,769.4 1073.0,769.0 1074.0,768.8Z"/>
<path fill="#90f56f" fill-rule="evenodd" d="M1081.7,156.8 1083.0,156.8 1085.0,156.8 1087.0,156.8 1089.0,156.8 1091.0,156.8 1093.0,156.8 1095.0,156.8 1097.0,156.8 1099.0,156.8 1101.0,156.8 1103.0,156.8 1105.0,156.8 1107.0,156.8 1109.0,156.8 1111.0,156.8 1113.0,156.8 1115.0,156.8 1117.0,156.8 1119.0,156.8 1121.0,156.8 1123.0,156.8 1125.0,156.8 1127.0,156.8 1129.0,156.8 1131.0,156.8 1133.0,156.8 1135.0,156.8 1137.0,156.8 1139.0,156.8 1141.0,156.8 1143.0,156.8 1145.0,156.8 1147.0,156.8 1149.0,156.8 1151.0,156.8 1153.0,156.8 1155.0,156.8 1157.0,156.8 1159.0,156.8 1161.0,156.8 1163.0,156.8 1165.0,156.8 1167.0,156.8 1167.0,158.8 1167.0,160.8 1167.0,162.8 1167.0,164.8 1167.0,166.8 1167.0,168.8 1167.0,170.8 1167.0,172.8 1167.0,174.8 1167.0,176.8 1167.0,178.8 1167.0,180.8 1167.0,182.8 1167.0,184.8 1167.0,186.8 1167.0,188.8 1167.0,190.8 1167.0,191.9 1165.0,192.2 1163.0,192.4 1161.0,192.5 1159.0,192.6 1157.0,192.6 1155.0,192.6 1153.0,192.5 1151.0,192.3 1149.0,192.1 1147.0,191.9 1145.0,191.6 1143.0,191.2 1141.0,190.8 1140.9,190.8 1139.0,190.4 1137.0,189.8 1135.0,189.2 1133.7,188.8 1133.0,188.6 1131.0,187.9 1129.0,187.2 1127.7,186.8 1127.0,186.6 1125.0,185.9 1123.0,185.2 1122.0,184.8 1121.0,184.5 1119.0,183.7 1117.0,183.0 1116.6,182.8 1115.0,182.2 1113.0,181.3 1111.7,180.8 1111.0,180.5 1109.0,179.6 1107.4,178.8 1107.0,178.6 1105.0,177.6 1103.5,176.8 1103.0,176.5 1101.0,175.4 1100.1,174.8 1099.0,174.1 1097.0,172.8 1097.0,172.8 1095.0,171.3 1094.3,170.8 1093.0,169.7 1091.9,168.8 1091.0,168.0 1089.7,166.8 1089.0,166.1 1087.8,164.8 1087.0,163.9 1086.0,162.8 1085.0,161.6 1084.4,160.8 1083.0,158.9 1083.0,158.8 1081.7,156.8ZM637.0,210.8 637.0,210.8 639.0,210.2 641.0,209.7 643.0,209.4 645.0,209.2 647.0,209.1 649.0,209.2 651.0,209.3 653.0,209.7 655.0,210.1 657.0,210.7 657.4,210.8 659.0,211.4 661.0,212.2 662.2,212.8 663.0,213.2 665.0,214.3 665.7,214.8 667.0,215.7 668.5,216.8 669.0,217.2 670.7,218.8 671.0,219.1 672.6,220.8 673.0,221.3 674.2,222.8 675.0,224.0 675.5,224.8 676.6,226.8 677.0,227.6 677.5,228.8 678.3,230.8 678.8,232.8 679.0,233.5 679.3,234.8 679.5,236.8 679.6,238.8 679.6,240.8 679.4,242.8 679.1,244.8 679.0,245.3 678.6,246.8 678.0,248.8 677.3,250.8 677.0,251.4 676.3,252.8 675.2,254.8 675.0,255.2 673.9,256.8 673.0,257.9 672.3,258.8 671.0,260.2 670.4,260.8 669.0,262.0 668.0,262.8 667.0,263.6 665.2,264.8 665.0,264.9 663.0,266.0 661.3,266.8 661.0,266.9 659.0,267.7 657.0,268.3 655.0,268.7 654.6,268.8 653.0,269.1 651.0,269.3 649.0,269.4 647.0,269.5 645.0,269.6 643.0,269.7 641.0,269.7 639.0,269.7 637.0,269.7 635.0,269.6 633.0,269.5 631.0,269.4 629.0,269.3 627.0,269.1 625.0,268.9 624.3,268.8 623.0,268.6 621.0,268.2 619.0,267.7 617.0,267.0 616.4,266.8 615.0,266.1 613.0,265.0 612.7,264.8 611.0,263.5 610.2,262.8 609.0,261.3 608.7,260.8 607.8,258.8 607.3,256.8 607.2,254.8 607.3,252.8 607.5,250.8 607.9,248.8 608.4,246.8 609.0,244.8 609.0,244.7 609.6,242.8 610.3,240.8 611.0,239.1 611.1,238.8 612.0,236.8 612.9,234.8 613.0,234.7 614.0,232.8 615.0,231.0 615.1,230.8 616.3,228.8 617.0,227.7 617.6,226.8 619.0,224.8 619.0,224.8 620.5,222.8 621.0,222.2 622.2,220.8 623.0,219.9 624.1,218.8 625.0,218.0 626.4,216.8 627.0,216.3 629.0,214.9 629.1,214.8 631.0,213.6 632.5,212.8 633.0,212.5 635.0,211.6 637.0,210.8ZM635.8,670.8 637.0,670.6 639.0,670.5 641.0,670.4 643.0,670.4 645.0,670.4 647.0,670.6 649.0,670.7 649.6,670.8 651.0,671.0 653.0,671.3 655.0,671.6 657.0,672.1 659.0,672.6 659.6,672.8 661.0,673.2 663.0,674.0 665.0,674.8 665.1,674.8 667.0,675.7 669.0,676.7 669.2,676.8 671.0,677.8 672.5,678.8 673.0,679.1 675.0,680.5 675.4,680.8 677.0,682.0 678.1,682.8 679.0,683.6 680.5,684.8 681.0,685.2 682.8,686.8 683.0,687.0 684.9,688.8 685.0,688.9 686.8,690.8 687.0,691.0 688.6,692.8 689.0,693.3 690.2,694.8 691.0,695.9 691.6,696.8 692.9,698.8 693.0,699.1 694.0,700.8 695.0,702.8 695.0,702.9 695.8,704.8 696.4,706.8 696.8,708.8 697.0,710.1 697.1,710.8 697.1,712.8 697.0,714.6 697.0,714.8 696.6,716.8 695.9,718.8 695.0,720.7 694.9,720.8 693.7,722.8 693.0,723.7 692.1,724.8 691.0,725.9 690.1,726.8 689.0,727.7 687.6,728.8 687.0,729.2 685.0,730.4 684.2,730.8 683.0,731.4 681.0,732.3 679.6,732.8 679.0,733.0 677.0,733.7 675.0,734.3 673.1,734.8 673.0,734.8 671.0,735.3 669.0,735.9 667.0,736.4 665.8,736.8 665.0,737.0 663.0,737.6 661.0,738.3 659.3,738.8 659.0,738.9 657.0,739.5 655.0,740.1 653.0,740.6 652.2,740.8 651.0,741.1 649.0,741.5 647.0,741.9 645.0,742.1 643.0,742.3 641.0,742.3 639.0,742.2 637.0,742.0 635.0,741.5 633.0,741.0 632.6,740.8 631.0,740.2 629.0,739.2 628.3,738.8 627.0,738.0 625.3,736.8 625.0,736.6 623.0,734.9 622.9,734.8 621.0,732.8 621.0,732.8 619.4,730.8 619.0,730.3 618.0,728.8 617.0,727.3 616.7,726.8 615.6,724.8 615.0,723.6 614.6,722.8 613.7,720.8 613.0,719.2 612.8,718.8 612.1,716.8 611.3,714.8 611.0,713.8 610.6,712.8 610.0,710.8 609.6,708.8 609.2,706.8 609.0,705.0 609.0,704.8 608.9,702.8 608.9,700.8 609.0,698.8 609.0,698.7 609.2,696.8 609.6,694.8 610.1,692.8 610.7,690.8 611.0,690.0 611.5,688.8 612.4,686.8 613.0,685.8 613.6,684.8 614.9,682.8 615.0,682.7 616.6,680.8 617.0,680.4 618.6,678.8 619.0,678.4 621.0,676.8 621.0,676.8 623.0,675.4 624.0,674.8 625.0,674.3 627.0,673.3 628.2,672.8 629.0,672.5 631.0,671.8 633.0,671.3 635.0,670.9 635.8,670.8ZM1005.9,828.8 1007.0,828.6 1009.0,828.4 1011.0,828.2 1013.0,828.0 1015.0,827.8 1017.0,827.7 1019.0,827.7 1021.0,827.6 1023.0,827.6 1025.0,827.6 1027.0,827.7 1029.0,827.9 1031.0,828.0 1033.0,828.3 1035.0,828.6 1035.8,828.8 1037.0,829.1 1039.0,829.8 1041.0,830.7 1041.1,830.8 1043.0,832.2 1043.7,832.8 1045.0,834.4 1045.3,834.8 1046.4,836.8 1047.0,838.4 1047.2,838.8 1047.7,840.8 1048.1,842.8 1048.4,844.8 1048.6,846.8 1048.5,848.8 1048.4,850.8 1048.2,852.8 1047.8,854.8 1047.4,856.8 1047.0,858.7 1047.0,858.8 1046.5,860.8 1045.9,862.8 1045.3,864.8 1045.0,865.9 1044.7,866.8 1044.0,868.8 1043.3,870.8 1043.0,871.7 1042.6,872.8 1041.8,874.8 1041.0,876.6 1040.9,876.8 1040.0,878.8 1039.0,880.8 1039.0,880.8 1037.0,880.8 1035.0,880.8 1033.0,880.8 1031.0,880.8 1029.0,880.8 1027.0,880.8 1025.0,880.8 1023.0,880.8 1021.0,880.8 1019.0,880.8 1017.0,880.8 1015.0,880.8 1013.0,880.8 1011.0,880.8 1009.0,880.8 1007.0,880.8 1005.0,880.8 1003.0,880.8 1001.0,880.8 999.0,880.8 997.0,880.8 995.0,880.8 993.0,880.8 991.0,880.8 989.0,880.8 987.0,880.8 985.0,880.8 983.0,880.8 981.0,880.8 979.0,880.8 977.0,880.8 975.0,880.8 973.0,880.8 971.0,880.8 969.0,880.8 967.0,880.8 965.0,880.8 964.4,880.8 964.0,878.8 963.8,876.8 963.6,874.8 963.5,872.8 963.6,870.8 963.7,868.8 963.9,866.8 964.2,864.8 964.6,862.8 965.0,861.3 965.1,860.8 965.7,858.8 966.4,856.8 967.0,855.3 967.2,854.8 968.1,852.8 969.0,851.1 969.2,850.8 970.4,848.8 971.0,847.8 971.7,846.8 973.0,845.1 973.3,844.8 975.0,842.8 975.0,842.8 977.0,840.9 977.1,840.8 979.0,839.2 979.5,838.8 981.0,837.7 982.3,836.8 983.0,836.4 985.0,835.2 985.8,834.8 987.0,834.2 989.0,833.3 990.1,832.8 991.0,832.4 993.0,831.7 995.0,831.0 995.9,830.8 997.0,830.5 999.0,830.1 1001.0,829.6 1003.0,829.3 1005.0,828.9 1005.9,828.8Z"/>
<path fill="#c8f94f" fill-rule="evenodd" d="M1097.0,156.8 1097.0,156.8 1099.0,156.8 1101.0,156.8 1103.0,156.8 1105.0,156.8 1107.0,156.8 1109.0,156.8 1111.0,156.8 1113.0,156.8 1115.0,156.8 1117.0,156.8 1119.0,156.8 1121.0,156.8 1123.0,156.8 1125.0,156.8 1127.0,156.8 1129.0,156.8 1131.0,156.8 1133.0,156.8 1135.0,156.8 1137.0,156.8 1139.0,156.8 1141.0,156.8 1143.0,156.8 1145.0,156.8 1147.0,156.8 1149.0,156.8 1151.0,156.8 1153.0,156.8 1155.0,156.8 1157.0,156.8 1159.0,156.8 1161.0,156.8 1163.0,156.8 1165.0,156.8 1167.0,156.8 1167.0,158.8 1167.0,160.8 1167.0,162.8 1167.0,164.8 1167.0,166.8 1167.0,168.8 1167.0,170.8 1167.0,172.8 1167.0,174.8 1167.0,176.8 1167.0,178.8 1167.0,180.6 1165.8,180.8 1165.0,181.0 1163.0,181.3 1161.0,181.5 1159.0,181.7 1157.0,181.8 1155.0,181.9 1153.0,181.9 1151.0,181.8 1149.0,181.7 1147.0,181.5 1145.0,181.2 1143.0,180.8 1142.8,180.8 1141.0,180.4 1139.0,180.0 1137.0,179.4 1135.0,178.8 1135.0,178.8 1133.0,178.1 1131.0,177.4 1129.4,176.8 1129.0,176.6 1127.0,175.9 1125.0,175.1 1124.4,174.8 1123.0,174.2 1121.0,173.3 1119.8,172.8 1119.0,172.4 1117.0,171.4 1115.7,170.8 1115.0,170.4 1113.0,169.3 1112.1,168.8 1111.0,168.2 1109.0,166.9 1108.8,166.8 1107.0,165.6 1105.9,164.8 1105.0,164.1 1103.3,162.8 1103.0,162.6 1101.0,160.8 1100.9,160.8 1099.0,158.9 1098.9,158.8 1097.0,156.8 1097.0,156.8ZM642.4,220.8 643.0,220.6 645.0,220.3 647.0,220.1 649.0,220.2 651.0,220.4 653.0,220.8 653.0,220.8 655.0,221.5 657.0,222.3 657.8,222.8 659.0,223.5 660.8,224.8 661.0,224.9 663.0,226.8 663.0,226.8 664.7,228.8 665.0,229.3 665.9,230.8 666.9,232.8 667.0,233.0 667.7,234.8 668.1,236.8 668.4,238.8 668.5,240.8 668.4,242.8 668.0,244.8 667.5,246.8 667.0,248.0 666.6,248.8 665.5,250.8 665.0,251.5 664.0,252.8 663.0,253.8 662.0,254.8 661.0,255.6 659.2,256.8 659.0,256.9 657.0,257.9 655.0,258.6 654.2,258.8 653.0,259.1 651.0,259.4 649.0,259.6 647.0,259.6 645.0,259.6 643.0,259.4 641.0,259.2 639.0,258.9 638.7,258.8 637.0,258.4 635.0,257.8 633.0,257.1 632.4,256.8 631.0,256.0 629.3,254.8 629.0,254.6 627.3,252.8 627.0,252.4 626.0,250.8 625.2,248.8 625.0,248.1 624.7,246.8 624.5,244.8 624.5,242.8 624.8,240.8 625.0,239.7 625.2,238.8 625.8,236.8 626.5,234.8 627.0,233.8 627.5,232.8 628.7,230.8 629.0,230.4 630.2,228.8 631.0,227.9 632.0,226.8 633.0,225.9 634.3,224.8 635.0,224.3 637.0,223.1 637.5,222.8 639.0,222.0 641.0,221.2 642.4,220.8ZM632.9,676.8 633.0,676.8 635.0,676.2 637.0,675.8 639.0,675.4 641.0,675.2 643.0,675.0 645.0,674.9 647.0,675.0 649.0,675.1 651.0,675.2 653.0,675.5 655.0,675.9 657.0,676.4 658.6,676.8 659.0,676.9 661.0,677.6 663.0,678.4 663.9,678.8 665.0,679.3 667.0,680.3 667.8,680.8 669.0,681.5 670.9,682.8 671.0,682.9 673.0,684.4 673.5,684.8 675.0,686.0 675.9,686.8 677.0,687.8 678.0,688.8 679.0,689.8 679.9,690.8 681.0,692.1 681.5,692.8 683.0,694.8 683.0,694.8 684.3,696.8 685.0,698.2 685.3,698.8 686.2,700.8 687.0,702.8 687.0,702.9 687.6,704.8 688.0,706.8 688.2,708.8 688.3,710.8 688.0,712.8 687.6,714.8 687.0,716.3 686.8,716.8 685.7,718.8 685.0,719.9 684.3,720.8 683.0,722.2 682.4,722.8 681.0,724.0 680.0,724.8 679.0,725.5 677.0,726.7 676.8,726.8 675.0,727.7 673.0,728.6 672.5,728.8 671.0,729.4 669.0,730.1 667.0,730.7 666.7,730.8 665.0,731.3 663.0,732.0 661.0,732.6 660.2,732.8 659.0,733.1 657.0,733.7 655.0,734.1 653.0,734.6 651.7,734.8 651.0,734.9 649.0,735.2 647.0,735.4 645.0,735.5 643.0,735.4 641.0,735.2 639.0,734.9 638.5,734.8 637.0,734.4 635.0,733.8 633.0,732.9 632.8,732.8 631.0,731.8 629.5,730.8 629.0,730.5 627.0,728.8 627.0,728.8 625.0,726.8 625.0,726.8 623.3,724.8 623.0,724.4 621.9,722.8 621.0,721.4 620.6,720.8 619.5,718.8 619.0,717.8 618.5,716.8 617.6,714.8 617.0,713.4 616.8,712.8 616.0,710.8 615.5,708.8 615.1,706.8 615.0,706.1 614.8,704.8 614.7,702.8 614.7,700.8 614.9,698.8 615.0,698.2 615.2,696.8 615.7,694.8 616.3,692.8 617.0,691.1 617.1,690.8 618.1,688.8 619.0,687.3 619.3,686.8 620.8,684.8 621.0,684.6 622.7,682.8 623.0,682.5 625.0,680.8 625.1,680.8 627.0,679.5 628.2,678.8 629.0,678.4 631.0,677.5 632.9,676.8ZM998.1,842.8 999.0,842.6 1001.0,842.2 1003.0,842.0 1005.0,841.8 1007.0,841.8 1009.0,841.9 1011.0,842.1 1013.0,842.5 1014.4,842.8 1015.0,842.9 1017.0,843.6 1019.0,844.4 1019.9,844.8 1021.0,845.4 1023.0,846.8 1023.0,846.8 1025.0,848.7 1025.1,848.8 1026.6,850.8 1027.0,851.6 1027.6,852.8 1028.3,854.8 1028.8,856.8 1029.0,858.3 1029.1,858.8 1029.1,860.8 1029.0,862.8 1029.0,863.1 1028.8,864.8 1028.4,866.8 1028.0,868.8 1027.4,870.8 1027.0,872.0 1026.7,872.8 1026.0,874.8 1025.1,876.8 1025.0,877.1 1024.2,878.8 1023.1,880.8 1023.0,880.8 1021.0,880.8 1019.0,880.8 1017.0,880.8 1015.0,880.8 1013.0,880.8 1011.0,880.8 1009.0,880.8 1007.0,880.8 1005.0,880.8 1003.0,880.8 1001.0,880.8 999.0,880.8 997.0,880.8 995.0,880.8 993.0,880.8 991.0,880.8 989.0,880.8 987.0,880.8 985.0,880.8 983.0,880.8 981.0,880.8 979.3,880.8 979.0,880.3 978.4,878.8 977.7,876.8 977.2,874.8 977.0,873.7 976.9,872.8 976.7,870.8 976.6,868.8 976.7,866.8 977.0,864.8 977.0,864.7 977.4,862.8 978.0,860.8 978.7,858.8 979.0,858.2 979.7,856.8 980.8,854.8 981.0,854.5 982.3,852.8 983.0,851.9 984.0,850.8 985.0,849.8 986.2,848.8 987.0,848.2 989.0,846.8 989.0,846.8 991.0,845.6 992.6,844.8 993.0,844.6 995.0,843.8 997.0,843.1 998.1,842.8Z"/>
<path fill="#ffe436" fill-rule="evenodd" d="M1114.5,156.8 1115.0,156.8 1117.0,156.8 1119.0,156.8 1121.0,156.8 1123.0,156.8 1125.0,156.8 1127.0,156.8 1129.0,156.8 1131.0,156.8 1133.0,156.8 1135.0,156.8 1137.0,156.8 1139.0,156.8 1141.0,156.8 1143.0,156.8 1145.0,156.8 1147.0,156.8 1149.0,156.8 1151.0,156.8 1153.0,156.8 1155.0,156.8 1157.0,156.8 1159.0,156.8 1161.0,156.8 1163.0,156.8 1165.0,156.8 1167.0,156.8 1167.0,158.8 1167.0,160.8 1167.0,162.8 1167.0,164.8 1167.0,166.8 1167.0,168.0 1165.0,168.6 1164.4,168.8 1163.0,169.1 1161.0,169.6 1159.0,169.9 1157.0,170.2 1155.0,170.3 1153.0,170.4 1151.0,170.4 1149.0,170.3 1147.0,170.2 1145.0,169.9 1143.0,169.6 1141.0,169.2 1139.4,168.8 1139.0,168.7 1137.0,168.1 1135.0,167.5 1133.2,166.8 1133.0,166.7 1131.0,165.9 1129.0,165.0 1128.5,164.8 1127.0,164.1 1125.0,163.1 1124.3,162.8 1123.0,162.1 1121.0,161.0 1120.6,160.8 1119.0,159.8 1117.4,158.8 1117.0,158.6 1115.0,157.2 1114.5,156.8ZM638.2,680.8 639.0,680.6 641.0,680.1 643.0,679.8 645.0,679.6 647.0,679.6 649.0,679.6 651.0,679.7 653.0,680.0 655.0,680.4 656.7,680.8 657.0,680.9 659.0,681.5 661.0,682.3 662.1,682.8 663.0,683.2 665.0,684.4 665.7,684.8 667.0,685.7 668.6,686.8 669.0,687.1 671.0,688.8 671.0,688.8 673.0,690.7 673.1,690.8 674.9,692.8 675.0,693.0 676.4,694.8 677.0,695.8 677.6,696.8 678.6,698.8 679.0,699.8 679.4,700.8 679.9,702.8 680.3,704.8 680.4,706.8 680.3,708.8 680.0,710.8 679.5,712.8 679.0,714.0 678.6,714.8 677.4,716.8 677.0,717.4 675.8,718.8 675.0,719.6 673.7,720.8 673.0,721.3 671.0,722.7 670.9,722.8 669.0,723.9 667.1,724.8 667.0,724.9 665.0,725.7 663.0,726.4 661.8,726.8 661.0,727.0 659.0,727.6 657.0,728.0 655.0,728.5 653.0,728.8 653.0,728.8 651.0,729.1 649.0,729.2 647.0,729.3 645.0,729.2 643.0,729.0 642.2,728.8 641.0,728.5 639.0,727.9 637.0,727.2 636.2,726.8 635.0,726.2 633.0,724.9 632.9,724.8 631.0,723.3 630.4,722.8 629.0,721.4 628.5,720.8 627.0,719.0 626.9,718.8 625.5,716.8 625.0,715.9 624.3,714.8 623.3,712.8 623.0,712.1 622.4,710.8 621.8,708.8 621.3,706.8 621.0,704.9 621.0,704.8 620.9,702.8 620.9,700.8 621.0,700.1 621.1,698.8 621.6,696.8 622.2,694.8 623.0,692.9 623.0,692.8 624.2,690.8 625.0,689.6 625.6,688.8 627.0,687.2 627.4,686.8 629.0,685.4 629.7,684.8 631.0,684.0 633.0,682.8 633.0,682.8 635.0,681.9 637.0,681.2 638.2,680.8Z"/>
<path fill="#ff801b" fill-rule="evenodd" d="M1143.2,156.8 1145.0,156.8 1147.0,156.8 1149.0,156.8 1151.0,156.8 1153.0,156.8 1155.0,156.8 1155.3,156.8 1155.0,156.8 1153.0,157.1 1151.0,157.3 1149.0,157.3 1147.0,157.2 1145.0,157.1 1143.2,156.8ZM646.4,684.8 647.0,684.7 649.0,684.7 651.0,684.8 651.0,684.8 653.0,685.1 655.0,685.5 657.0,686.1 658.8,686.8 659.0,686.9 661.0,687.9 662.4,688.8 663.0,689.2 665.0,690.7 665.1,690.8 667.0,692.5 667.3,692.8 669.0,694.7 669.1,694.8 670.4,696.8 671.0,697.8 671.5,698.8 672.4,700.8 672.9,702.8 673.0,703.6 673.2,704.8 673.1,706.8 673.0,707.8 672.8,708.8 672.2,710.8 671.3,712.8 671.0,713.2 669.9,714.8 669.0,715.8 668.0,716.8 667.0,717.7 665.5,718.8 665.0,719.1 663.0,720.2 661.6,720.8 661.0,721.1 659.0,721.7 657.0,722.2 655.0,722.6 653.5,722.8 653.0,722.9 651.0,723.0 649.0,723.1 647.0,723.0 645.9,722.8 645.0,722.7 643.0,722.2 641.0,721.5 639.5,720.8 639.0,720.5 637.0,719.3 636.3,718.8 635.0,717.7 634.0,716.8 633.0,715.7 632.2,714.8 631.0,713.2 630.7,712.8 629.6,710.8 629.0,709.4 628.7,708.8 628.2,706.8 627.8,704.8 627.7,702.8 627.9,700.8 628.2,698.8 628.9,696.8 629.0,696.5 629.8,694.8 631.0,693.0 631.1,692.8 632.9,690.8 633.0,690.7 635.0,689.0 635.2,688.8 637.0,687.7 638.7,686.8 639.0,686.7 641.0,685.9 643.0,685.3 645.0,685.0 646.4,684.8Z"/>
<path fill="#ff0000" fill-rule="evenodd" d="M643.1,692.8 645.0,692.1 647.0,691.6 649.0,691.4 651.0,691.5 653.0,691.8 655.0,692.4 655.9,692.8 657.0,693.3 659.0,694.6 659.2,694.8 661.0,696.5 661.3,696.8 662.8,698.8 663.0,699.2 663.8,700.8 664.4,702.8 664.6,704.8 664.4,706.8 663.8,708.8 663.0,710.1 662.5,710.8 661.0,712.4 660.5,712.8 659.0,713.8 657.1,714.8 657.0,714.8 655.0,715.4 653.0,715.8 651.0,716.0 649.0,716.0 647.0,715.7 645.0,715.1 644.2,714.8 643.0,714.2 641.0,712.9 640.9,712.8 639.0,711.0 638.8,710.8 637.5,708.8 637.0,707.7 636.6,706.8 636.2,704.8 636.1,702.8 636.4,700.8 637.0,698.9 637.0,698.8 638.2,696.8 639.0,695.9 640.1,694.8 641.0,694.1 643.0,692.8 643.1,692.8Z"/>
</g>
<path d="M804.6,160.8L804.6,150.2M866.7,166.2L868.5,155.8M926.9,182.4L930.5,172.4M983.4,208.7L988.7,199.5M1034.5,244.5L1041.3,236.3M1078.5,288.5L1086.7,281.7M1114.3,339.6L1123.5,334.3M1140.6,396.1L1150.6,392.5M1156.8,456.3L1167.2,454.5M1162.2,518.4L1172.8,518.4M1156.8,580.5L1167.2,582.3M1140.6,640.7L1150.6,644.3M1114.3,697.2L1123.5,702.5M1078.5,748.3L1086.7,755.1M1034.5,792.3L1041.3,800.5M983.4,828.1L988.7,837.3M926.9,854.4L930.5,864.4M866.7,870.6L868.5,881.0M804.6,876.0L804.6,886.6M742.5,870.6L740.7,881.0M682.3,854.4L678.7,864.4M625.8,828.1L620.5,837.3M574.7,792.3L567.9,800.5M530.7,748.3L522.5,755.1M494.9,697.2L485.7,702.5M468.6,640.7L458.6,644.3M452.4,580.5L442.0,582.3M447.0,518.4L436.4,518.4M452.4,456.3L442.0,454.5M468.6,396.1L458.6,392.5M494.9,339.6L485.7,334.3M530.7,288.5L522.5,281.7M574.7,244.5L567.9,236.3M625.8,208.7L620.5,199.5M682.3,182.4L678.7,172.4M742.5,166.2L740.7,155.8" stroke="#000" stroke-width="2" fill="none"/>
<circle cx="804.6" cy="518.4" r="357.6" fill="none" stroke="#000" stroke-width="2.2"/>
<path d="M793.6,518.4H815.6M804.6,507.4V529.4" stroke="#000" stroke-width="1" fill="none"/>
<g clip-path="url(#cc)"><circle cx="1185.9" cy="484.6" r="523.9" fill="none" stroke="#930f0f" stroke-width="1.2"/></g>
<path d="M869.7,473.3L1010.3,375.8A250.3,250.3 0 0 1 1031.6,623.8L876.4,551.8A79.2,79.2 0 0 0 869.7,473.3Z" fill="none" stroke="#e03030" stroke-width="1.1"/>
<path d="M647.3,222.7L650.7,219.3L654.1,222.7L650.7,226.1ZM626.8,234.3L630.2,230.9L633.6,234.3L630.2,237.7ZM652.3,233.1L655.7,229.7L659.1,233.1L655.7,236.5ZM667.2,250.1L670.6,246.7L674.0,250.1L670.6,253.5ZM628.0,266.9L631.4,263.5L634.8,266.9L631.4,270.3ZM604.0,270.9L607.4,267.5L610.8,270.9L607.4,274.3ZM575.6,272.7L579.0,269.3L582.4,272.7L579.0,276.1ZM575.3,288.9L578.7,285.5L582.1,288.9L578.7,292.3ZM579.4,300.8L582.8,297.4L586.2,300.8L582.8,304.2ZM567.7,304.9L571.1,301.5L574.5,304.9L571.1,308.3ZM568.2,312.6L571.6,309.2L575.0,312.6L571.6,316.0ZM731.5,204.2L734.9,200.8L738.3,204.2L734.9,207.6ZM573.8,599.2L577.2,595.8L580.6,599.2L577.2,602.6ZM626.2,684.6L629.6,681.2L633.0,684.6L629.6,688.0ZM632.1,690.8L635.5,687.4L638.9,690.8L635.5,694.2ZM625.5,697.3L628.9,693.9L632.3,697.3L628.9,700.7ZM656.3,694.4L659.7,691.0L663.1,694.4L659.7,697.8ZM638.4,709.1L641.8,705.7L645.2,709.1L641.8,712.5ZM608.9,714.5L612.3,711.1L615.7,714.5L612.3,717.9ZM669.5,710.2L672.9,706.8L676.3,710.2L672.9,713.6ZM678.8,710.9L682.2,707.5L685.6,710.9L682.2,714.3ZM685.8,699.9L689.2,696.5L692.6,699.9L689.2,703.3ZM646.5,727.4L649.9,724.0L653.3,727.4L649.9,730.8ZM708.5,721.9L711.9,718.5L715.3,721.9L711.9,725.3ZM720.6,746.0L724.0,742.6L727.4,746.0L724.0,749.4ZM618.7,784.0L622.1,780.6L625.5,784.0L622.1,787.4ZM960.0,468.5L963.4,465.1L966.8,468.5L963.4,471.9ZM961.8,474.1L965.2,470.7L968.6,474.1L965.2,477.5ZM950.8,477.0L954.2,473.6L957.6,477.0L954.2,480.4ZM949.9,488.4L953.3,485.0L956.7,488.4L953.3,491.8ZM924.1,515.4L927.5,512.0L930.9,515.4L927.5,518.8ZM972.1,515.9L975.5,512.5L978.9,515.9L975.5,519.3ZM917.9,557.6L921.3,554.2L924.7,557.6L921.3,561.0ZM960.5,741.9L963.9,738.5L967.3,741.9L963.9,745.3ZM1035.1,756.5L1038.5,753.1L1041.9,756.5L1038.5,759.9ZM978.2,808.0L981.6,804.6L985.0,808.0L981.6,811.4Z" fill="#fff" stroke="#222" stroke-width="0.9"/>
<path d="M953.3,504.7H965.3M959.3,498.7V510.7" stroke="#9a3a3a" stroke-width="1.1" fill="none"/>
<text x="961.4" y="524" class="m1">1m</text>
<text x="664.4" y="548.5" class="m1">1m</text>
<text transform="translate(804.0,148.6) scale(0.9,1)" class="nsew" text-anchor="middle">N</text>
<text transform="translate(804.7,907.8) scale(0.9,1)" class="nsew" text-anchor="middle">S</text>
<text transform="translate(1183.7,527.0) scale(0.9,1)" class="nsew" text-anchor="middle">E</text>
<text transform="translate(425.0,527.0) scale(0.9,1)" class="nsew" text-anchor="middle">W</text>
<path transform="translate(994.3,731.1)" d="M0,0.4V15.8Q0,16.9 1,16.2L4.2,13.1L6.4,18Q7.2,19.4 8.5,18.6Q9.5,17.9 8.9,16.6L7.1,12.5H11Q12.2,12.4 11.4,11.4Z" fill="#fff" stroke="#16161f" stroke-width="1.2" stroke-linejoin="round"/>
</svg><div style="left:1251px;top:160px;width:377px;height:45px;border:2px solid #000;background:#fff"></div>
<div style="left:1251px;top:182px;width:377px;height:1px;background:#000"></div>
<span class="t lb" style="left:1268.5px;top:164.4px">Symbol</span>
<span class="t lb" style="left:1329.8px;top:164.4px">Feature</span>
<span class="t lr" style="left:1329.8px;top:186.4px">Pole Vectors</span>
<svg class="ic" style="left:1284px;top:188px" width="10" height="10" viewBox="0 0 10 10"><path d="M5,1.8L8.2,5L5,8.2L1.8,5Z" fill="#fff" stroke="#222" stroke-width="0.9"/></svg>
<div style="left:1251px;top:211px;width:377px;height:275px;border:2px solid #000;background:#fff"></div>
<div style="left:1251px;top:232.5px;width:377px;height:1.5px;background:#000"></div>
<div style="left:1364px;top:213px;width:1px;height:184px;background:#000"></div>
<span class="t lb" style="left:1207.3px;width:200px;text-align:center;top:214.4px">Color</span>
<span class="t lb" style="left:1394.5px;width:200px;text-align:center;top:214.4px">Density Concentrations</span>
<div style="left:1253px;top:233.6px;width:111px;height:16.7px;background:#ffffff"></div>
<span class="t lv" style="right:463.20000000000005px;top:234.2px">0.00</span>
<span class="t lv" style="left:1493px;top:234.2px">-</span>
<span class="t lv" style="left:1516.8px;top:234.2px">2.40</span>
<div style="left:1253px;top:250.0px;width:111px;height:16.7px;background:#eaeef3"></div>
<span class="t lv" style="right:463.20000000000005px;top:250.6px">2.40</span>
<span class="t lv" style="left:1493px;top:250.6px">-</span>
<span class="t lv" style="left:1516.8px;top:250.6px">4.80</span>
<div style="left:1253px;top:266.4px;width:111px;height:16.7px;background:#d5edf0"></div>
<span class="t lv" style="right:463.20000000000005px;top:267.0px">4.80</span>
<span class="t lv" style="left:1493px;top:267.0px">-</span>
<span class="t lv" style="left:1516.8px;top:267.0px">7.20</span>
<div style="left:1253px;top:282.8px;width:111px;height:16.7px;background:#b9f1df"></div>
<span class="t lv" style="right:463.20000000000005px;top:283.4px">7.20</span>
<span class="t lv" style="left:1493px;top:283.4px">-</span>
<span class="t lv" style="left:1516.8px;top:283.4px">9.60</span>
<div style="left:1253px;top:299.2px;width:111px;height:16.7px;background:#98f3ab"></div>
<span class="t lv" style="right:463.20000000000005px;top:299.8px">9.60</span>
<span class="t lv" style="left:1493px;top:299.8px">-</span>
<span class="t lv" style="left:1516.8px;top:299.8px">12.00</span>
<div style="left:1253px;top:315.6px;width:111px;height:16.7px;background:#90f56f"></div>
<span class="t lv" style="right:463.20000000000005px;top:316.2px">12.00</span>
<span class="t lv" style="left:1493px;top:316.2px">-</span>
<span class="t lv" style="left:1516.8px;top:316.2px">14.40</span>
<div style="left:1253px;top:332.0px;width:111px;height:16.7px;background:#c8f94f"></div>
<span class="t lv" style="right:463.20000000000005px;top:332.6px">14.40</span>
<span class="t lv" style="left:1493px;top:332.6px">-</span>
<span class="t lv" style="left:1516.8px;top:332.6px">16.80</span>
<div style="left:1253px;top:348.4px;width:111px;height:16.7px;background:#ffe436"></div>
<span class="t lv" style="right:463.20000000000005px;top:349.0px">16.80</span>
<span class="t lv" style="left:1493px;top:349.0px">-</span>
<span class="t lv" style="left:1516.8px;top:349.0px">19.20</span>
<div style="left:1253px;top:364.8px;width:111px;height:16.7px;background:#ff801b"></div>
<span class="t lv" style="right:463.20000000000005px;top:365.4px">19.20</span>
<span class="t lv" style="left:1493px;top:365.4px">-</span>
<span class="t lv" style="left:1516.8px;top:365.4px">21.60</span>
<div style="left:1253px;top:381.2px;width:111px;height:16.7px;background:#ff0000"></div>
<span class="t lv" style="right:463.20000000000005px;top:381.8px">21.60</span>
<span class="t lv" style="left:1493px;top:381.8px">-</span>
<span class="t lv" style="left:1516.8px;top:381.8px">24.00</span>
<div style="left:1251px;top:397px;width:377px;height:1.4px;background:#000"></div>
<span class="t lb" style="right:486.79999999999995px;top:401.1px">Contour Data</span>
<span class="t lr" style="left:1465.8px;top:401.1px">Pole Vectors</span>
<div style="left:1251px;top:419px;width:377px;height:1px;background:#000"></div>
<span class="t lb" style="right:486.79999999999995px;top:423.1px">Maximum Density</span>
<span class="t lr" style="left:1465.8px;top:423.1px">23.44%</span>
<div style="left:1251px;top:441px;width:377px;height:1px;background:#000"></div>
<span class="t lb" style="right:486.79999999999995px;top:445.1px">Contour Distribution</span>
<span class="t lr" style="left:1465.8px;top:445.1px">Fisher</span>
<div style="left:1251px;top:463px;width:377px;height:1px;background:#000"></div>
<span class="t lb" style="right:486.79999999999995px;top:466.8px">Counting Circle Size</span>
<span class="t lr" style="left:1465.8px;top:466.8px">1.0%</span>
<div style="left:1458px;top:398px;width:1px;height:87px;background:#000"></div>
<div style="left:1251px;top:491px;width:377px;height:89px;border:2px solid #000;background:#fff"></div>
<span class="t lb" style="right:486.79999999999995px;top:495.7px">Plot Mode</span>
<span class="t lr" style="left:1465.8px;top:495.7px">Pole Vectors</span>
<div style="left:1251px;top:514px;width:377px;height:1px;background:#000"></div>
<span class="t lb" style="right:486.79999999999995px;top:517.4px">Vector Count</span>
<span class="t lr" style="left:1465.8px;top:517.4px">61 (40 Entries)</span>
<div style="left:1251px;top:535px;width:377px;height:1px;background:#000"></div>
<span class="t lb" style="right:486.79999999999995px;top:538.9px">Hemisphere</span>
<span class="t lr" style="left:1465.8px;top:538.9px">Lower</span>
<div style="left:1251px;top:557px;width:377px;height:1px;background:#000"></div>
<span class="t lb" style="right:486.79999999999995px;top:560.7px">Projection</span>
<span class="t lr" style="left:1465.8px;top:560.7px">Equal Angle</span>
<div style="left:1458px;top:493px;width:1px;height:86px;background:#000"></div>
<!-- tabs -->
<div style="left:243px;top:991px;width:1684px;height:6px;background:#fafafa"></div>
<div style="left:243px;top:997px;width:237px;height:22px;background:#f0f0f0;border-top:1px solid #e4e4e4;border-right:1px solid #dcdcdc"></div>
<div style="left:480px;top:997px;width:317px;height:22px;background:#fafafa"></div>
<div style="left:797px;top:997px;width:1130px;height:22px;background:#f0f0f0;border-top:1px solid #e4e4e4;border-left:1px solid #dcdcdc"></div>
<div style="left:479px;top:1017px;width:1px;height:2px;background:#555"></div>
<div style="left:796px;top:1017px;width:1px;height:2px;background:#555"></div>
<svg class="ic" style="left:246px;top:1001px" width="17" height="14" viewBox="0 0 17 14"><rect x="0.6" y="0.6" width="15.2" height="12" fill="#fff" stroke="#666" stroke-width="1.2"/><rect x="1.2" y="1.2" width="14" height="2.4" fill="#5bb8f2"/><path d="M0.6,3.9H15.8M0.6,6.9H15.8M0.6,9.9H15.8M5.6,3.9V12.6M10.6,3.9V12.6" stroke="#666" stroke-width="1.1" fill="none"/></svg>
<span class="t tr tb" style="left:268px;top:1000.5px">Tutorial 03 Sets Tutorial (Set Window):1*</span>
<svg class="ic" style="left:484px;top:999.8px" width="16" height="16" viewBox="0 0 16 16"><circle cx="7.6" cy="7.6" r="7.5" fill="url(#gsph)"/><path d="M6.9,0.8C3.5,1.4 1.1,4.5 1.3,8.6C3.4,10.1 6,10.3 7.7,9.7C5.6,7.1 5.5,3.5 6.9,0.8Z" fill="#ebebeb"/><path d="M8.3,0.9C6.7,4 7.5,7.6 9.5,9.3C11.6,9.6 13.7,9 14.9,7.8C14.7,4 12.1,1.1 8.3,0.9Z" fill="#cfcfcf"/><path d="M1.9,10.7C5,13 11,12.8 14.4,10.1C13.8,12 12.2,13.5 10.2,14.3C6.2,13.9 3.5,12.8 1.9,10.7Z" fill="#cdcdcd" opacity="0.85"/><circle cx="7.6" cy="7.6" r="7.1" fill="none" stroke="#6c6c6c" stroke-width="0.9" opacity="0.75"/><path d="M7.7,0.5C5.7,3.4 6,7.6 8.8,9.7C11,10.3 13.4,9.7 15,8.3" stroke="#6e6e6e" stroke-width="0.9" fill="none"/><path d="M1.1,9.9C4.6,12.3 11,12.1 14.8,9.3" stroke="#7a7a7a" stroke-width="0.8" fill="none"/><ellipse cx="10" cy="4.7" rx="2.3" ry="3.3" transform="rotate(-18 10 4.7)" fill="#ee5a0c" stroke="#b23c08" stroke-width="0.6"/><circle cx="3.9" cy="11.3" r="1.5" fill="#ee5a0c" stroke="#b23c08" stroke-width="0.5"/></svg>
<span class="t tr tb" style="left:506px;top:1001.5px">Tutorial 03 Sets Tutorial (Set Window):2* - Stereonet Plot</span>
<!-- status -->
<div style="left:1760px;top:1023px;width:1px;height:16px;background:#dadada"></div>
<div style="left:1872px;top:1023px;width:1px;height:16px;background:#dadada"></div>
<span class="t b" style="left:1657.5px;top:1025px;letter-spacing:-0.28px">MAX DATATIPS</span>
<span class="t b" style="left:1764.5px;top:1025px;letter-spacing:-0.12px">Trend / Plunge</span>
<span class="t b" style="left:1877.5px;top:1025px;letter-spacing:0.28px">138/13</span>
<!-- bottom strip deco -->
<svg class="ic" style="left:36px;top:1040px" width="20" height="8" viewBox="0 0 20 8"><circle cx="10" cy="9" r="5.2" fill="#d8262c"/></svg>

</body></html>
